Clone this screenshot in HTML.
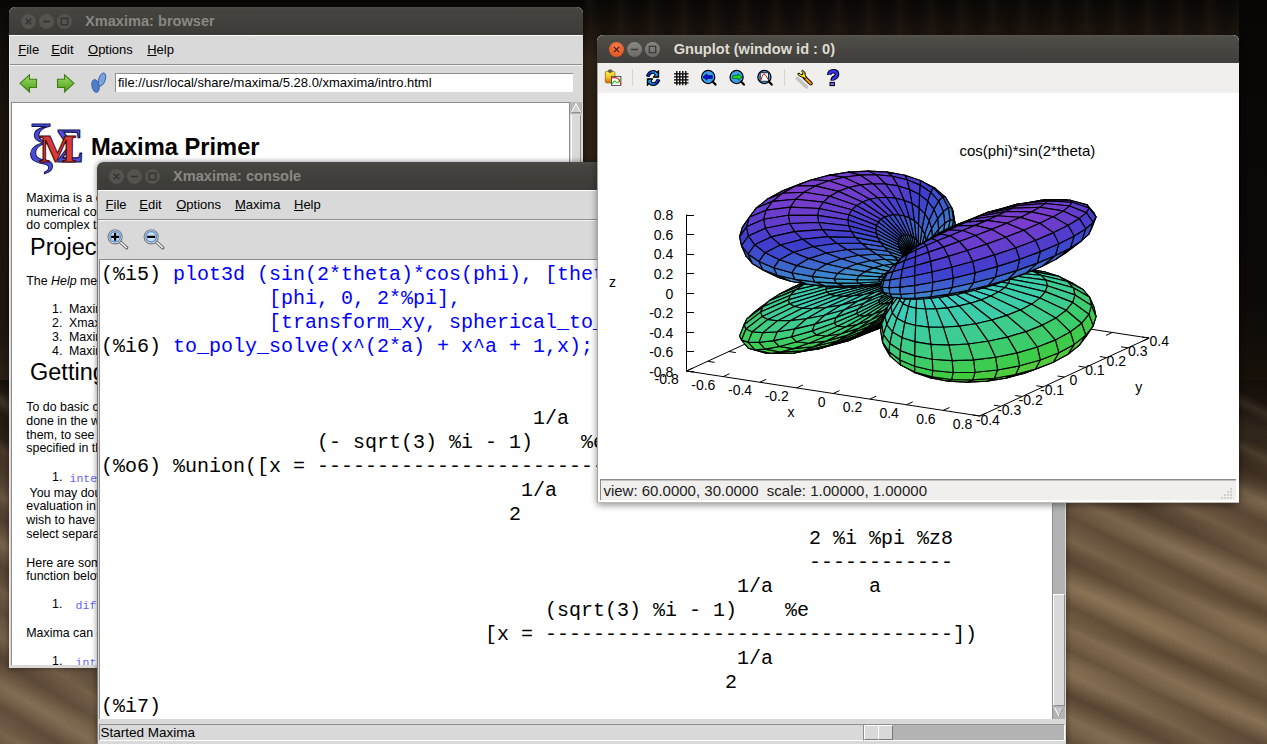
<!DOCTYPE html>
<html><head><meta charset="utf-8">
<style>
*{box-sizing:border-box;margin:0;padding:0}
html,body{width:1267px;height:744px;overflow:hidden}
body{position:relative;font-family:"Liberation Sans",sans-serif;background:#1a130d}
.abs{position:absolute}
#bg{position:absolute;left:0;top:0;width:1267px;height:744px;
 background:linear-gradient(to bottom,#090705 0px,#0f0b08 25px,#1b140e 120px,#1d150e 330px,#3c2e22 440px,#5f4c3a 520px,#6b5744 744px)}
#bgr{position:absolute;left:1040px;top:380px;width:227px;height:364px;
 background:
 repeating-linear-gradient(206deg,rgba(30,18,8,0) 0px,rgba(30,18,8,.22) 10px,rgba(30,18,8,0) 22px,rgba(255,225,170,.10) 31px,rgba(255,225,170,0) 40px),
 repeating-linear-gradient(197deg,rgba(30,18,8,0) 0px,rgba(30,18,8,.14) 17px,rgba(30,18,8,0) 35px,rgba(255,225,170,.07) 52px,rgba(255,225,170,0) 69px),
 linear-gradient(to bottom,#120d09 0px,#2a2016 60px,#66523d 125px,#7a6348 250px,#6f5a43 364px)}
#bgl{position:absolute;left:0;top:380px;width:100px;height:364px;
 background:
 repeating-linear-gradient(212deg,rgba(30,18,8,0) 0px,rgba(30,18,8,.2) 10px,rgba(30,18,8,0) 22px,rgba(255,225,170,.09) 31px,rgba(255,225,170,0) 40px),
 repeating-linear-gradient(200deg,rgba(30,18,8,0) 0px,rgba(30,18,8,.12) 17px,rgba(30,18,8,0) 35px,rgba(255,225,170,.06) 52px,rgba(255,225,170,0) 69px),
 linear-gradient(to bottom,#140f0a 0px,#2e2318 60px,#5e4b39 120px,#735e48 364px)}
#bgt{position:absolute;left:583px;top:0;width:684px;height:380px;
 background:repeating-linear-gradient(90deg,rgba(60,40,25,0) 0px,rgba(60,40,25,.18) 7px,rgba(60,40,25,0) 15px,rgba(0,0,0,.15) 23px,rgba(0,0,0,0) 31px),linear-gradient(to bottom,#0a0806 0px,#130e0a 20px,#2c2117 60px,#2a1f15 300px,#1a130c 380px)}
#bgt2{position:absolute;left:1239px;top:0;width:28px;height:420px;
 background:linear-gradient(to bottom,#080605 0px,#0c0907 300px,#171109 380px,#2a2016 420px)}
.win{position:absolute;overflow:hidden}
.tb{position:absolute;left:0;top:0;right:0;height:28px;border-radius:6px 6px 0 0;
 background:linear-gradient(to bottom,#55544f 0px,#4a4944 3px,#3e3d39 100%)}
.tbt{position:absolute;top:6px;font:bold 14.6px "Liberation Sans",sans-serif;color:#8a8782;white-space:nowrap;letter-spacing:0px}
.btn{position:absolute;top:6px;width:15px;height:15px;border-radius:50%;background:#55544f}
.btn svg{position:absolute;left:0;top:0}
.menu{position:absolute;font:13px "Liberation Sans",sans-serif;color:#000;white-space:nowrap}
.menu span{position:absolute;top:0}
.menu u{text-decoration:none;border-bottom:1px solid #000}
.mono{font-family:"Liberation Mono",monospace}
</style></head><body>
<div id="bg"></div><div id="bgt"></div><div id="bgt2"></div><div id="bgr"></div><div id="bgl"></div>
<!-- BROWSER WINDOW -->
<div class="win" id="wb" style="left:9px;top:7px;width:574px;height:661px;border-radius:6px 6px 0 0;background:#d9d9d9;box-shadow:0 0 5px 1px rgba(0,0,0,.35)">
 <div class="tb" style="background:linear-gradient(to bottom,#4b4a46 0px,#45443f 4px,#3c3b37 100%)"></div>
 <div class="btn" style="left:11.5px;top:6.5px;background:#54534e"><svg width="15" height="15"><path d="M4.7 4.7L10.3 10.3M10.3 4.7L4.7 10.3" stroke="#33322e" stroke-width="1.4"/></svg></div>
 <div class="btn" style="left:29.7px;top:6.5px;background:#54534e"><svg width="15" height="15"><path d="M4 7.5H11" stroke="#33322e" stroke-width="1.4"/></svg></div>
 <div class="btn" style="left:47.8px;top:6.5px;background:#54534e"><svg width="15" height="15"><rect x="4.3" y="4.3" width="6.4" height="6.4" fill="none" stroke="#33322e" stroke-width="1.3"/></svg></div>
 <div class="tbt" style="left:76px;top:6px;color:#8b8883">Xmaxima: browser</div>
 <!-- menubar -->
 <div class="abs" style="left:1px;top:28px;width:572px;height:1px;background:#fff"></div>
 <div class="abs" style="left:0px;top:28px;width:1px;height:632px;background:#e8e8e8"></div>
 <div style="position:absolute;left:9.20px;top:35.70px;font-family:'Liberation Sans';font-size:13.00px;line-height:13.00px;color:#000;font-weight:normal;font-style:normal;letter-spacing:0.00px;white-space:pre;"><u>F</u>ile</div><div style="position:absolute;left:42.20px;top:35.70px;font-family:'Liberation Sans';font-size:13.00px;line-height:13.00px;color:#000;font-weight:normal;font-style:normal;letter-spacing:0.00px;white-space:pre;"><u>E</u>dit</div><div style="position:absolute;left:79.00px;top:35.70px;font-family:'Liberation Sans';font-size:13.00px;line-height:13.00px;color:#000;font-weight:normal;font-style:normal;letter-spacing:0.00px;white-space:pre;"><u>O</u>ptions</div><div style="position:absolute;left:138.20px;top:35.70px;font-family:'Liberation Sans';font-size:13.00px;line-height:13.00px;color:#000;font-weight:normal;font-style:normal;letter-spacing:0.00px;white-space:pre;"><u>H</u>elp</div>
 <div class="abs" style="left:1px;top:57px;width:572px;height:1px;background:#8e8e8e"></div>
 <div class="abs" style="left:1px;top:58px;width:572px;height:1px;background:#f4f4f4"></div>
 <!-- toolbar icons -->
 <svg class="abs" style="left:10px;top:67px" width="19" height="19" viewBox="0 0 19 19">
  <defs><linearGradient id="ga" x1="0" y1="0" x2="0" y2="1"><stop offset="0" stop-color="#9de06a"/><stop offset="1" stop-color="#4a9a18"/></linearGradient></defs>
  <path d="M1 9.3L10.5 0.8V5.3H17.5V13.5H10.5V18Z" fill="url(#ga)" stroke="#3f7d12" stroke-width="1.1"/>
 </svg>
 <svg class="abs" style="left:47px;top:67px" width="19" height="19" viewBox="0 0 19 19">
  <path d="M18 9.3L8.5 0.8V5.3H1.5V13.5H8.5V18Z" fill="url(#ga)" stroke="#3f7d12" stroke-width="1.1"/>
 </svg>
 <svg class="abs" style="left:81px;top:64px" width="18" height="24" viewBox="0 0 18 24">
  <ellipse cx="5.5" cy="15" rx="3.6" ry="6.5" transform="rotate(-12 5.5 15)" fill="#4d7fc7" stroke="#2e5a9e" stroke-width=".8"/>
  <ellipse cx="12" cy="8.5" rx="3.3" ry="6.8" transform="rotate(18 12 8.5)" fill="#7aa3dd" stroke="#2e5a9e" stroke-width=".8"/>
 </svg>
 <div class="abs" style="left:106px;top:66px;width:458px;height:19px;background:#fff;border-top:1px solid #8e8e8e;border-left:1px solid #8e8e8e;font:13px 'Liberation Sans',sans-serif;line-height:17px;padding-left:2px;color:#000;white-space:nowrap;overflow:hidden">file://usr/local/share/maxima/5.28.0/xmaxima/intro.html</div>
 <!-- content -->
 <div class="abs" style="left:2px;top:95px;width:558px;height:563px;background:#fff;border-top:1px solid #8e8e8e;border-left:1px solid #8e8e8e;overflow:hidden">
  <svg style="position:absolute;left:18px;top:17px" width="66" height="60" viewBox="0 0 66 60">
<text x="-2" y="44" font-family="Liberation Serif" font-size="58" fill="#4a4ad8" stroke="#10104a" stroke-width=".9">&#958;</text>
<text x="26" y="42" font-family="Liberation Serif" font-size="48" fill="#5050e8" stroke="#10104a" stroke-width="1.1">&#931;</text>
<text x="9" y="42" font-family="Liberation Serif" font-size="40" font-weight="bold" fill="#d83a3a" stroke="#3a0808" stroke-width="1">M</text>
</svg><div style="position:absolute;left:79.00px;top:32.74px;font-family:'Liberation Sans';font-size:23.70px;line-height:23.70px;color:#000;font-weight:bold;font-style:normal;letter-spacing:0.00px;white-space:pre;">Maxima Primer</div><div style="position:absolute;left:14.30px;top:88.50px;font-family:'Liberation Sans';font-size:12.40px;line-height:12.40px;color:#000;font-weight:normal;font-style:normal;letter-spacing:0.00px;white-space:pre;">Maxima is a computer algebra system</div><div style="position:absolute;left:14.30px;top:102.50px;font-family:'Liberation Sans';font-size:12.40px;line-height:12.40px;color:#000;font-weight:normal;font-style:normal;letter-spacing:0.00px;white-space:pre;">numerical computations</div><div style="position:absolute;left:14.30px;top:116.00px;font-family:'Liberation Sans';font-size:12.40px;line-height:12.40px;color:#000;font-weight:normal;font-style:normal;letter-spacing:0.00px;white-space:pre;">do complex tasks</div><div style="position:absolute;left:18.00px;top:132.91px;font-family:'Liberation Sans';font-size:23.50px;line-height:23.50px;color:#000;font-weight:normal;font-style:normal;letter-spacing:0.00px;white-space:pre;">Project</div><div style="position:absolute;left:14.30px;top:171.50px;font-family:'Liberation Sans';font-size:12.40px;line-height:12.40px;color:#000;font-weight:normal;font-style:normal;letter-spacing:0.00px;white-space:pre;">The <i>Help</i> menu</div><div style="position:absolute;left:40.00px;top:200.20px;font-family:'Liberation Sans';font-size:12.40px;line-height:12.40px;color:#000;font-weight:normal;font-style:normal;letter-spacing:0.00px;white-space:pre;">1.</div><div style="position:absolute;left:57.00px;top:200.20px;font-family:'Liberation Sans';font-size:12.40px;line-height:12.40px;color:#000;font-weight:normal;font-style:normal;letter-spacing:0.00px;white-space:pre;">Maxima</div><div style="position:absolute;left:40.00px;top:214.20px;font-family:'Liberation Sans';font-size:12.40px;line-height:12.40px;color:#000;font-weight:normal;font-style:normal;letter-spacing:0.00px;white-space:pre;">2.</div><div style="position:absolute;left:57.00px;top:214.20px;font-family:'Liberation Sans';font-size:12.40px;line-height:12.40px;color:#000;font-weight:normal;font-style:normal;letter-spacing:0.00px;white-space:pre;">Xmaxima</div><div style="position:absolute;left:40.00px;top:228.30px;font-family:'Liberation Sans';font-size:12.40px;line-height:12.40px;color:#000;font-weight:normal;font-style:normal;letter-spacing:0.00px;white-space:pre;">3.</div><div style="position:absolute;left:57.00px;top:228.30px;font-family:'Liberation Sans';font-size:12.40px;line-height:12.40px;color:#000;font-weight:normal;font-style:normal;letter-spacing:0.00px;white-space:pre;">Maxima</div><div style="position:absolute;left:40.00px;top:242.00px;font-family:'Liberation Sans';font-size:12.40px;line-height:12.40px;color:#000;font-weight:normal;font-style:normal;letter-spacing:0.00px;white-space:pre;">4.</div><div style="position:absolute;left:57.00px;top:242.00px;font-family:'Liberation Sans';font-size:12.40px;line-height:12.40px;color:#000;font-weight:normal;font-style:normal;letter-spacing:0.00px;white-space:pre;">Maxima</div><div style="position:absolute;left:18.00px;top:257.71px;font-family:'Liberation Sans';font-size:23.50px;line-height:23.50px;color:#000;font-weight:normal;font-style:normal;letter-spacing:0.00px;white-space:pre;">Getting</div><div style="position:absolute;left:14.30px;top:298.20px;font-family:'Liberation Sans';font-size:12.40px;line-height:12.40px;color:#000;font-weight:normal;font-style:normal;letter-spacing:0.00px;white-space:pre;">To do basic calculations</div><div style="position:absolute;left:14.30px;top:311.90px;font-family:'Liberation Sans';font-size:12.40px;line-height:12.40px;color:#000;font-weight:normal;font-style:normal;letter-spacing:0.00px;white-space:pre;">done in the window</div><div style="position:absolute;left:14.30px;top:325.70px;font-family:'Liberation Sans';font-size:12.40px;line-height:12.40px;color:#000;font-weight:normal;font-style:normal;letter-spacing:0.00px;white-space:pre;">them, to see the</div><div style="position:absolute;left:14.30px;top:339.40px;font-family:'Liberation Sans';font-size:12.40px;line-height:12.40px;color:#000;font-weight:normal;font-style:normal;letter-spacing:0.00px;white-space:pre;">specified in the</div><div style="position:absolute;left:40.00px;top:368.00px;font-family:'Liberation Sans';font-size:12.40px;line-height:12.40px;color:#000;font-weight:normal;font-style:normal;letter-spacing:0.00px;white-space:pre;">1.</div><div style="position:absolute;left:57.50px;top:369.69px;font-family:'Liberation Mono';font-size:11.50px;line-height:11.50px;color:#6464f4;font-weight:normal;font-style:normal;letter-spacing:0.00px;white-space:pre;">integrate</div><div style="position:absolute;left:14.30px;top:383.50px;font-family:'Liberation Sans';font-size:12.40px;line-height:12.40px;color:#000;font-weight:normal;font-style:normal;letter-spacing:0.00px;white-space:pre;"> You may double</div><div style="position:absolute;left:14.30px;top:397.20px;font-family:'Liberation Sans';font-size:12.40px;line-height:12.40px;color:#000;font-weight:normal;font-style:normal;letter-spacing:0.00px;white-space:pre;">evaluation in</div><div style="position:absolute;left:14.30px;top:410.90px;font-family:'Liberation Sans';font-size:12.40px;line-height:12.40px;color:#000;font-weight:normal;font-style:normal;letter-spacing:0.00px;white-space:pre;">wish to have</div><div style="position:absolute;left:14.30px;top:424.70px;font-family:'Liberation Sans';font-size:12.40px;line-height:12.40px;color:#000;font-weight:normal;font-style:normal;letter-spacing:0.00px;white-space:pre;">select separate</div><div style="position:absolute;left:14.30px;top:453.50px;font-family:'Liberation Sans';font-size:12.40px;line-height:12.40px;color:#000;font-weight:normal;font-style:normal;letter-spacing:0.00px;white-space:pre;">Here are some</div><div style="position:absolute;left:14.30px;top:467.30px;font-family:'Liberation Sans';font-size:12.40px;line-height:12.40px;color:#000;font-weight:normal;font-style:normal;letter-spacing:0.00px;white-space:pre;">function below</div><div style="position:absolute;left:40.00px;top:495.10px;font-family:'Liberation Sans';font-size:12.40px;line-height:12.40px;color:#000;font-weight:normal;font-style:normal;letter-spacing:0.00px;white-space:pre;">1.</div><div style="position:absolute;left:63.60px;top:496.79px;font-family:'Liberation Mono';font-size:11.50px;line-height:11.50px;color:#6464f4;font-weight:normal;font-style:normal;letter-spacing:0.00px;white-space:pre;">diff</div><div style="position:absolute;left:14.30px;top:524.10px;font-family:'Liberation Sans';font-size:12.40px;line-height:12.40px;color:#000;font-weight:normal;font-style:normal;letter-spacing:0.00px;white-space:pre;">Maxima can do</div><div style="position:absolute;left:40.00px;top:552.10px;font-family:'Liberation Sans';font-size:12.40px;line-height:12.40px;color:#000;font-weight:normal;font-style:normal;letter-spacing:0.00px;white-space:pre;">1.</div><div style="position:absolute;left:63.60px;top:553.79px;font-family:'Liberation Mono';font-size:11.50px;line-height:11.50px;color:#6464f4;font-weight:normal;font-style:normal;letter-spacing:0.00px;white-space:pre;">int</div>
 </div>
 <!-- scrollbar -->
 <div class="abs" style="left:560px;top:95px;width:13px;height:563px;background:#d9d9d9;border-left:1px solid #8e8e8e">
  <svg class="abs" style="left:0;top:0" width="12" height="13"><rect x="0" y="0" width="12" height="12" fill="#b8b8b8"/><path d="M1.5 10.5L6 1.5L10.5 10.5" fill="#d0d0d0" stroke="#fff" stroke-width="1"/><path d="M1.5 10.5H10.5" stroke="#8e8e8e"/></svg>
  <div class="abs" style="left:1px;top:13px;width:10px;height:560px;border-left:1px solid #fff;border-right:1px solid #8e8e8e;background:#d9d9d9"></div>
 </div>
</div>
<div class="win" id="wc" style="left:97px;top:162px;width:969px;height:600px;border-radius:6px 6px 0 0;background:#d9d9d9;box-shadow:0 0 5px 1px rgba(0,0,0,.35)"><div class="tb" style="background:linear-gradient(to bottom,#4b4a46 0px,#45443f 4px,#3c3b37 100%)"></div><div class="btn" style="left:12.0px;top:7px;background:#54534e"><svg width="15" height="15"><path d="M4.7 4.7L10.3 10.3M10.3 4.7L4.7 10.3" stroke="#33322e" stroke-width="1.4"/></svg></div><div class="btn" style="left:29.9px;top:7px;background:#54534e"><svg width="15" height="15"><path d="M4 7.5H11" stroke="#33322e" stroke-width="1.4"/></svg></div><div class="btn" style="left:48.0px;top:7px;background:#54534e"><svg width="15" height="15"><rect x="4.3" y="4.3" width="6.4" height="6.4" fill="none" stroke="#33322e" stroke-width="1.3"/></svg></div><div class="tbt" style="left:76px;top:6px;color:#8b8883">Xmaxima: console</div><div class="abs" style="left:1px;top:28px;width:968px;height:1px;background:#fff"></div><div class="abs" style="left:0px;top:28px;width:1px;height:600px;background:#7a7a7a"></div><div style="position:absolute;left:8.60px;top:36.20px;font-family:'Liberation Sans';font-size:13.00px;line-height:13.00px;color:#000;font-weight:normal;font-style:normal;letter-spacing:0.00px;white-space:pre;"><u>F</u>ile</div><div style="position:absolute;left:42.30px;top:36.20px;font-family:'Liberation Sans';font-size:13.00px;line-height:13.00px;color:#000;font-weight:normal;font-style:normal;letter-spacing:0.00px;white-space:pre;"><u>E</u>dit</div><div style="position:absolute;left:79.20px;top:36.20px;font-family:'Liberation Sans';font-size:13.00px;line-height:13.00px;color:#000;font-weight:normal;font-style:normal;letter-spacing:0.00px;white-space:pre;"><u>O</u>ptions</div><div style="position:absolute;left:137.90px;top:36.20px;font-family:'Liberation Sans';font-size:13.00px;line-height:13.00px;color:#000;font-weight:normal;font-style:normal;letter-spacing:0.00px;white-space:pre;"><u>M</u>axima</div><div style="position:absolute;left:197.00px;top:36.20px;font-family:'Liberation Sans';font-size:13.00px;line-height:13.00px;color:#000;font-weight:normal;font-style:normal;letter-spacing:0.00px;white-space:pre;"><u>H</u>elp</div><div class="abs" style="left:1px;top:57px;width:968px;height:1px;background:#8e8e8e"></div><div class="abs" style="left:1px;top:58px;width:968px;height:1px;background:#f4f4f4"></div><svg class="abs" style="left:0;top:0" width="200" height="100" viewBox="97 162 200 100"><path d="M120.3 242.0L126.7 247.8" stroke="#6a6a6a" stroke-width="3.4" stroke-linecap="round"/><path d="M120.7 242.4L126.4 247.5" stroke="#f4f4f4" stroke-width="1.5" stroke-linecap="round"/><circle cx="115.1" cy="236.8" r="7.1" fill="#ececec" stroke="#7a7a7a" stroke-width="1.1"/><circle cx="115.1" cy="236.8" r="5.3" fill="#c8dcf4" stroke="#6094dc" stroke-width="1.5"/><path d="M111.1 236.8H119.1M115.1 232.8V240.8" stroke="#000" stroke-width="2.2"/><path d="M156.4 242.0L162.8 247.8" stroke="#6a6a6a" stroke-width="3.4" stroke-linecap="round"/><path d="M156.8 242.4L162.5 247.5" stroke="#f4f4f4" stroke-width="1.5" stroke-linecap="round"/><circle cx="151.2" cy="236.8" r="7.1" fill="#ececec" stroke="#7a7a7a" stroke-width="1.1"/><circle cx="151.2" cy="236.8" r="5.3" fill="#c8dcf4" stroke="#6094dc" stroke-width="1.5"/><path d="M147.2 236.8H155.2" stroke="#000" stroke-width="2.2"/></svg><div class="abs" style="left:2px;top:97px;width:953px;height:460px;background:#fff;border-top:1px solid #8e8e8e;border-left:1px solid #8e8e8e;overflow:hidden"><div style="position:absolute;left:1.00px;top:5.27px;font-family:'Liberation Mono';font-size:20.00px;line-height:20.00px;color:#000;font-weight:normal;font-style:normal;letter-spacing:0.00px;white-space:pre;">(%i5) </div><div style="position:absolute;left:73.00px;top:5.27px;font-family:'Liberation Mono';font-size:20.00px;line-height:20.00px;color:#0000ff;font-weight:normal;font-style:normal;letter-spacing:0.00px;white-space:pre;">plot3d (sin(2*theta)*cos(phi), [theta, 0, %pi],</div><div style="position:absolute;left:169.00px;top:29.27px;font-family:'Liberation Mono';font-size:20.00px;line-height:20.00px;color:#0000ff;font-weight:normal;font-style:normal;letter-spacing:0.00px;white-space:pre;">[phi, 0, 2*%pi],</div><div style="position:absolute;left:169.00px;top:53.27px;font-family:'Liberation Mono';font-size:20.00px;line-height:20.00px;color:#0000ff;font-weight:normal;font-style:normal;letter-spacing:0.00px;white-space:pre;">[transform_xy, spherical_to_xyz]);</div><div style="position:absolute;left:1.00px;top:77.27px;font-family:'Liberation Mono';font-size:20.00px;line-height:20.00px;color:#000;font-weight:normal;font-style:normal;letter-spacing:0.00px;white-space:pre;">(%i6) </div><div style="position:absolute;left:73.00px;top:77.27px;font-family:'Liberation Mono';font-size:20.00px;line-height:20.00px;color:#0000ff;font-weight:normal;font-style:normal;letter-spacing:0.00px;white-space:pre;">to_poly_solve(x^(2*a) + x^a + 1,x);</div><div style="position:absolute;left:433.00px;top:149.27px;font-family:'Liberation Mono';font-size:20.00px;line-height:20.00px;color:#000;font-weight:normal;font-style:normal;letter-spacing:0.00px;white-space:pre;">1/a</div><div style="position:absolute;left:217.00px;top:173.27px;font-family:'Liberation Mono';font-size:20.00px;line-height:20.00px;color:#000;font-weight:normal;font-style:normal;letter-spacing:0.00px;white-space:pre;">(- sqrt(3) %i - 1)    %e</div><div style="position:absolute;left:1.00px;top:197.27px;font-family:'Liberation Mono';font-size:20.00px;line-height:20.00px;color:#000;font-weight:normal;font-style:normal;letter-spacing:0.00px;white-space:pre;">(%o6) %union([x = ----------------------------------------,</div><div style="position:absolute;left:421.00px;top:221.27px;font-family:'Liberation Mono';font-size:20.00px;line-height:20.00px;color:#000;font-weight:normal;font-style:normal;letter-spacing:0.00px;white-space:pre;">1/a</div><div style="position:absolute;left:409.00px;top:245.27px;font-family:'Liberation Mono';font-size:20.00px;line-height:20.00px;color:#000;font-weight:normal;font-style:normal;letter-spacing:0.00px;white-space:pre;">2</div><div style="position:absolute;left:709.00px;top:269.27px;font-family:'Liberation Mono';font-size:20.00px;line-height:20.00px;color:#000;font-weight:normal;font-style:normal;letter-spacing:0.00px;white-space:pre;">2 %i %pi %z8</div><div style="position:absolute;left:709.00px;top:293.27px;font-family:'Liberation Mono';font-size:20.00px;line-height:20.00px;color:#000;font-weight:normal;font-style:normal;letter-spacing:0.00px;white-space:pre;">------------</div><div style="position:absolute;left:637.00px;top:317.27px;font-family:'Liberation Mono';font-size:20.00px;line-height:20.00px;color:#000;font-weight:normal;font-style:normal;letter-spacing:0.00px;white-space:pre;">1/a</div><div style="position:absolute;left:769.00px;top:317.27px;font-family:'Liberation Mono';font-size:20.00px;line-height:20.00px;color:#000;font-weight:normal;font-style:normal;letter-spacing:0.00px;white-space:pre;">a</div><div style="position:absolute;left:445.00px;top:341.27px;font-family:'Liberation Mono';font-size:20.00px;line-height:20.00px;color:#000;font-weight:normal;font-style:normal;letter-spacing:0.00px;white-space:pre;">(sqrt(3) %i - 1)    %e</div><div style="position:absolute;left:385.00px;top:365.27px;font-family:'Liberation Mono';font-size:20.00px;line-height:20.00px;color:#000;font-weight:normal;font-style:normal;letter-spacing:0.00px;white-space:pre;">[x = ----------------------------------])</div><div style="position:absolute;left:637.00px;top:389.27px;font-family:'Liberation Mono';font-size:20.00px;line-height:20.00px;color:#000;font-weight:normal;font-style:normal;letter-spacing:0.00px;white-space:pre;">1/a</div><div style="position:absolute;left:625.00px;top:413.27px;font-family:'Liberation Mono';font-size:20.00px;line-height:20.00px;color:#000;font-weight:normal;font-style:normal;letter-spacing:0.00px;white-space:pre;">2</div><div style="position:absolute;left:1.00px;top:437.27px;font-family:'Liberation Mono';font-size:20.00px;line-height:20.00px;color:#000;font-weight:normal;font-style:normal;letter-spacing:0.00px;white-space:pre;">(%i7)</div></div><div class="abs" style="left:955px;top:97px;width:14px;height:460px;background:#d9d9d9"><div class="abs" style="left:0;top:0;width:13px;height:460px;background:#b3b3b3;border-left:1px solid #8e8e8e"></div><div class="abs" style="left:1px;top:335px;width:12px;height:112px;background:#d9d9d9;border-top:1px solid #fff;border-left:1px solid #fff;border-right:1px solid #8e8e8e;border-bottom:1px solid #8e8e8e"></div><svg class="abs" style="left:1px;top:447px" width="12" height="12"><rect width="12" height="12" fill="#b3b3b3"/><path d="M1.5 1.5L6 10.5L10.5 1.5" fill="#c8c8c8" stroke="#fff" stroke-width="1"/><path d="M6 10.5L10.5 1.5" stroke="#8e8e8e" stroke-width="1"/></svg></div><div class="abs" style="left:2px;top:562px;width:765px;height:17px;background:#d9d9d9;border-top:1px solid #8e8e8e;border-left:1px solid #8e8e8e;border-right:1px solid #fff;border-bottom:1px solid #fff"></div><div style="position:absolute;left:3.50px;top:563.57px;font-family:'Liberation Sans';font-size:13.50px;line-height:13.50px;color:#000;font-weight:normal;font-style:normal;letter-spacing:0.00px;white-space:pre;">Started Maxima</div><div class="abs" style="left:766px;top:562px;width:202px;height:17px;background:#b3b3b3;border-top:1px solid #8e8e8e;border-left:1px solid #8e8e8e;border-right:1px solid #fff;border-bottom:1px solid #fff"></div><div class="abs" style="left:767px;top:563px;width:15px;height:15px;background:#d9d9d9;border-top:1px solid #fff;border-left:1px solid #fff;border-right:1px solid #7a7a7a;border-bottom:1px solid #7a7a7a"></div><div class="abs" style="left:781px;top:563px;width:15px;height:15px;background:#d9d9d9;border-top:1px solid #fff;border-left:1px solid #fff;border-right:1px solid #7a7a7a;border-bottom:1px solid #7a7a7a"></div></div><div class="win" id="wg" style="left:597px;top:35px;width:642px;height:468px;border-radius:6px 6px 0 0;background:#fff;box-shadow:0 2px 7px rgba(0,0,0,.45)"><div class="tb" style="height:28px;background:linear-gradient(to bottom,#56554f 0px,#4d4c47 3px,#3f3e3a 100%)"></div><div class="btn" style="left:12px;top:6.8px;background:radial-gradient(circle at 50% 30%,#f47a4a,#df4a17)"><svg width="15" height="15"><path d="M4.9 4.9L10.1 10.1M10.1 4.9L4.9 10.1" stroke="#3a1a0a" stroke-width="1.15"/></svg></div><div class="btn" style="left:30.1px;top:6.8px;background:linear-gradient(#8a8984,#6a6964)"><svg width="15" height="15"><path d="M4 7.5H11" stroke="#3c3b37" stroke-width="1.4"/></svg></div><div class="btn" style="left:48.1px;top:6.8px;background:linear-gradient(#8a8984,#6a6964)"><svg width="15" height="15"><rect x="4.3" y="4.3" width="6.4" height="6.4" fill="none" stroke="#3c3b37" stroke-width="1.3"/></svg></div><div class="tbt" style="left:76.7px;top:6px;color:#dfdbd2;font-size:14.6px">Gnuplot (window id : 0)</div><div class="abs" style="left:0;top:28px;width:642px;height:30px;background:#f0efed"></div><svg class="abs" style="left:0;top:0" width="260" height="60" viewBox="597 35 260 60">
 <!-- clipboard -->
 <defs><linearGradient id="cbg" x1="0" y1="0" x2="0" y2="1"><stop offset="0" stop-color="#fff24a"/><stop offset=".55" stop-color="#f2c018"/><stop offset="1" stop-color="#d86a08"/></linearGradient></defs>
 <rect x="605.3" y="71.3" width="9.6" height="11.6" rx="1.6" fill="url(#cbg)" stroke="#8a5a10" stroke-width=".7"/>
 <rect x="608.4" y="69.8" width="3.6" height="2.6" rx="1" fill="#666" stroke="#333" stroke-width=".5"/>
 <rect x="611.5" y="76.4" width="9.4" height="9" fill="#fff" stroke="#444" stroke-width=".9"/>
 <path d="M612 84.2Q614.2 79.2 616.2 82Q618.2 84.6 620.6 78.2" stroke="#10d010" stroke-width="1.1" fill="none"/>
 <path d="M611.8 78Q616.5 76.8 618.5 79Q620 81 620.8 84.5" stroke="#e01010" stroke-width="1.1" fill="none"/>
 <path d="M632.6 69V86" stroke="#d3d1cc"/>
 <!-- refresh -->
 <defs><linearGradient id="rb" x1="0" y1="0" x2="1" y2="0"><stop offset="0" stop-color="#0018c0"/><stop offset="1" stop-color="#18a8ff"/></linearGradient>
 <linearGradient id="rb2" x1="1" y1="0" x2="0" y2="0"><stop offset="0" stop-color="#0018c0"/><stop offset="1" stop-color="#18a8ff"/></linearGradient></defs>
 <path d="M647.6 76.6Q649.5 71.6 653.3 71.8Q655.6 72 656.8 74.6" fill="none" stroke="#000" stroke-width="3.8"/>
 <path d="M658.6 70.7V77.2H653.4Z" fill="#000" stroke="#000" stroke-width="1.2" stroke-linejoin="round"/>
 <path d="M647.6 76.6Q649.5 71.6 653.3 71.8Q655.6 72 656.8 74.6" fill="none" stroke="url(#rb)" stroke-width="1.8"/>
 <path d="M657.6 72.6V76.2H654.6Z" fill="#18a8ff"/>
 <path d="M658.6 79.4Q656.7 84.4 652.9 84.2Q650.6 84 649.4 81.4" fill="none" stroke="#000" stroke-width="3.8"/>
 <path d="M647.4 85.3V78.8H652.6Z" fill="#000" stroke="#000" stroke-width="1.2" stroke-linejoin="round"/>
 <path d="M658.6 79.4Q656.7 84.4 652.9 84.2Q650.6 84 649.4 81.4" fill="none" stroke="url(#rb2)" stroke-width="1.8"/>
 <path d="M648.4 83.4V79.8H651.4Z" fill="#18a8ff"/>
 <!-- grid -->
 <path d="M676.8 71V85.2M679.8 71V85.2M682.8 71V85.2M685.8 71V85.2M674 73.8H688.5M674 76.8H688.5M674 79.8H688.5M674 82.8H688.5" stroke="#000" stroke-width="1.3"/>
 <!-- zoom prev -->
 <circle cx="708.2" cy="77" r="6.6" fill="#3aa0ee" stroke="#000" stroke-width="1.2"/>
 <path d="M712.6 81.6L715.5 84.6" stroke="#000" stroke-width="2.2" stroke-linecap="round"/>
 <path d="M703 77L707 73.8V75.6H712.3V78.4H707V80.2Z" fill="#0010e0" stroke="#000030" stroke-width=".6"/>
 <!-- zoom next -->
 <circle cx="736.6" cy="77" r="6.6" fill="#3aa0ee" stroke="#000" stroke-width="1.2"/>
 <path d="M741 81.6L743.9 84.6" stroke="#000" stroke-width="2.2" stroke-linecap="round"/>
 <path d="M742 77L738 73.8V75.6H732.7V78.4H738V80.2Z" fill="#20e020" stroke="#003000" stroke-width=".6"/>
 <!-- zoom auto -->
 <circle cx="764.4" cy="77" r="6.6" fill="#3aa0ee" stroke="#000" stroke-width="1.2"/>
 <path d="M768.8 81.6L771.7 84.6" stroke="#000" stroke-width="2.2" stroke-linecap="round"/>
 <rect x="760.2" y="72.8" width="8.4" height="8.4" fill="#fff" stroke="#000" stroke-width=".8"/>
 <path d="M761 80Q763 72 765 74.5T768 79.5" stroke="#e11" stroke-width="1" fill="none"/>
 <path d="M784.6 69V86" stroke="#d3d1cc"/>
 <!-- wrench -->
 <path d="M799 76.5L808 85" stroke="#000" stroke-width="3.5" stroke-linecap="round" opacity=".18" transform="translate(-1.5 2)"/>
 <path d="M804.5 77.5L810.8 83.4" stroke="#000" stroke-width="3.9" stroke-linecap="round"/>
 <path d="M804.5 77.5L810.8 83.4" stroke="#ff9a00" stroke-width="2.1" stroke-linecap="round"/>
 <path d="M797.6 73.8Q799 76.8 802.6 77.2L805.2 78.6L806.3 77.2L805.2 75Q806 71.8 802.4 70.2L801.8 71.4Q803.6 72.6 802.8 74.4Q800.6 75.2 799 73Z" fill="#ffe800" stroke="#000" stroke-width="1" stroke-linejoin="round"/>
 <!-- help -->
 <path d="M829.4 74.8Q829.2 71.2 833.2 71.2Q837 71.2 837 74.2Q837 76.2 834.6 77.6Q832.6 78.8 832.8 80.6" fill="none" stroke="#000" stroke-width="4.6"/>
 <path d="M829.4 74.8Q829.2 71.2 833.2 71.2Q837 71.2 837 74.2Q837 76.2 834.6 77.6Q832.6 78.8 832.8 80.6" fill="none" stroke="#3434ff" stroke-width="2.4"/>
 <rect x="830" y="82.4" width="4.4" height="3.2" fill="#6a6aff" stroke="#000" stroke-width="1"/>
</svg>
<svg class="abs" style="left:0;top:0" width="642" height="468" viewBox="597 35 642 468"><path d="M686.5 371.0L979.8 416.0M979.8 416.0L1149.1 338.1M1149.1 338.1L855.8 293.1M855.8 293.1L686.5 371.0M686.5 371.0L692.9 368.1M855.8 293.1L849.5 296.0M979.8 416.0L972.8 415.0M686.5 371.0L693.5 372.1M723.2 376.6L729.5 373.7M892.5 298.7L886.1 301.6M1000.9 406.3L994.0 405.2M707.7 361.3L714.6 362.3M759.8 382.3L766.2 379.3M929.1 304.3L922.8 307.2M1022.1 396.5L1015.2 395.5M728.9 351.5L735.8 352.6M796.5 387.9L802.9 385.0M965.8 309.9L959.4 312.9M1043.3 386.8L1036.3 385.7M750.0 341.8L756.9 342.8M833.1 393.5L839.5 390.6M1002.4 315.6L996.1 318.5M1064.4 377.0L1057.5 376.0M771.2 332.0L778.1 333.1M869.8 399.1L876.2 396.2M1039.1 321.2L1032.7 324.1M1085.6 367.3L1078.7 366.2M792.3 322.3L799.3 323.4M906.5 404.8L912.8 401.8M1075.8 326.8L1069.4 329.7M1106.7 357.6L1099.8 356.5M813.5 312.6L820.4 313.6M943.1 410.4L949.5 407.5M1112.4 332.4L1106.1 335.4M1127.9 347.8L1121.0 346.8M834.7 302.8L841.6 303.9M979.8 416.0L986.1 413.1M1149.1 338.1L1142.7 341.0M1149.1 338.1L1142.1 337.0M855.8 293.1L862.8 294.1" stroke="#000" stroke-width="1" fill="none"/><g stroke="#000" stroke-width="1.15" stroke-linejoin="round"><path fill="#3dcc43" d="M902.9,270.9 903.5,281.2 883.9,286.0 882.5,275.1z"/>
<path fill="#40cc3d" d="M882.5,275.1 883.9,286.0 862.9,291.7 860.6,280.4z"/>
<path fill="#4ccc3d" d="M903.5,281.2 904.9,291.8 887.3,296.8 883.9,286.0z"/>
<path fill="#3dcc4d" d="M920.9,267.8 920.8,277.5 903.5,281.2 902.9,270.9z"/>
<path fill="#56cc3d" d="M883.9,286.0 887.3,296.8 868.3,302.7 862.9,291.7z"/>
<path fill="#40cc3d" d="M920.8,277.5 920.5,287.5 904.9,291.8 903.5,281.2z"/>
<path fill="#3dcc5d" d="M903.3,262.2 902.9,270.9 882.5,275.1 883.4,265.7z"/>
<path fill="#47cc3d" d="M860.6,280.4 862.9,291.7 841.2,298.3 838.1,286.8z"/>
<path fill="#3dcc65" d="M920.8,260.0 920.9,267.8 902.9,270.9 903.3,262.2z"/>
<path fill="#5ecc3d" d="M862.9,291.7 868.3,302.7 848.9,309.1 841.2,298.3z"/>
<path fill="#3dcc58" d="M935.6,266.1 934.9,274.9 920.8,277.5 920.9,267.8z"/>
<path fill="#3dcc56" d="M883.4,265.7 882.5,275.1 860.6,280.4 862.1,270.4z"/>
<path fill="#3dcc47" d="M934.9,274.9 933.2,284.2 920.5,287.5 920.8,277.5z"/>
<path fill="#58cc3d" d="M904.9,291.8 907.0,301.1 892.2,306.1 887.3,296.8z"/>
<path fill="#62cc3d" d="M887.3,296.8 892.2,306.1 876.3,311.7 868.3,302.7z"/>
<path fill="#3dcc6e" d="M935.2,259.0 935.6,266.1 920.9,267.8 920.8,260.0z"/>
<path fill="#4bcc3d" d="M920.5,287.5 920.0,296.5 907.0,301.1 904.9,291.8z"/>
<path fill="#3dcc50" d="M862.1,270.4 860.6,280.4 838.1,286.8 840.1,276.2z"/>
<path fill="#6bcc3d" d="M868.3,302.7 876.3,311.7 859.9,317.7 848.9,309.1z"/>
<path fill="#64cc3d" d="M841.2,298.3 848.9,309.1 829.8,315.9 820.0,305.5z"/>
<path fill="#4dcc3d" d="M838.1,286.8 841.2,298.3 820.0,305.5 816.0,293.9z"/>
<path fill="#3dcc65" d="M946.5,265.5 945.4,273.3 934.9,274.9 935.6,266.1z"/>
<path fill="#3dcc7a" d="M904.7,256.5 903.3,262.2 883.4,265.7 886.7,259.1z"/>
<path fill="#3dcc3d" d="M933.2,284.2 930.8,292.6 920.0,296.5 920.5,287.5z"/>
<path fill="#3dcc56" d="M945.4,273.3 942.6,281.6 933.2,284.2 934.9,274.9z"/>
<path fill="#3dcc80" d="M920.5,255.0 920.8,260.0 903.3,262.2 904.7,256.5z"/>
<path fill="#3dcc79" d="M945.8,259.4 946.5,265.5 935.6,266.1 935.2,259.0z"/>
<path fill="#3dcc74" d="M886.7,259.1 883.4,265.7 862.1,270.4 867.3,263.0z"/>
<path fill="#71cc3d" d="M848.9,309.1 859.9,317.7 843.8,323.8 829.8,315.9z"/>
<path fill="#3dcc4c" d="M840.1,276.2 838.1,286.8 816.0,293.9 818.6,282.8z"/>
<path fill="#3dcc86" d="M933.5,254.9 935.2,259.0 920.8,260.0 920.5,255.0z"/>
<path fill="#63cc3d" d="M892.2,306.1 898.0,312.5 885.6,317.5 876.3,311.7z"/>
<path fill="#59cc3d" d="M907.0,301.1 909.4,307.7 898.0,312.5 892.2,306.1z"/>
<path fill="#68cc3d" d="M820.0,305.5 829.8,315.9 811.8,323.0 800.1,313.0z"/>
<path fill="#3dcc70" d="M867.3,263.0 862.1,270.4 840.1,276.2 847.5,267.9z"/>
<path fill="#50cc3d" d="M816.0,293.9 820.0,305.5 800.1,313.0 795.3,301.6z"/>
<path fill="#3dcc4d" d="M942.6,281.6 938.7,289.3 930.8,292.6 933.2,284.2z"/>
<path fill="#6ccc3d" d="M876.3,311.7 885.6,317.5 873.0,322.7 859.9,317.7z"/>
<path fill="#4ccc3d" d="M920.0,296.5 919.5,303.2 909.4,307.7 907.0,301.1z"/>
<path fill="#3dcc73" d="M953.1,266.0 951.7,272.6 945.4,273.3 946.5,265.5z"/>
<path fill="#76cc3d" d="M829.8,315.9 843.8,323.8 828.8,329.9 811.8,323.0z"/>
<path fill="#3dcc66" d="M951.7,272.6 948.3,279.8 942.6,281.6 945.4,273.3z"/>
<path fill="#3dcc8e" d="M943.1,255.9 945.8,259.4 935.2,259.0 933.5,254.9z"/>
<path fill="#73cc3d" d="M859.9,317.7 873.0,322.7 860.5,327.8 843.8,323.8z"/>
<path fill="#3dcc84" d="M952.2,260.8 953.1,266.0 946.5,265.5 945.8,259.4z"/>
<path fill="#3ecc3d" d="M930.8,292.6 927.8,299.1 919.5,303.2 920.0,296.5z"/>
<path fill="#3dcc49" d="M818.6,282.8 816.0,293.9 795.3,301.6 798.3,290.1z"/>
<path fill="#3dcc6d" d="M847.5,267.9 840.1,276.2 818.6,282.8 828.0,273.7z"/>
<path fill="#3dcc96" d="M907.0,254.7 904.7,256.5 886.7,259.1 892.2,256.6z"/>
<path fill="#6acc3d" d="M800.1,313.0 811.8,323.0 795.8,329.9 782.3,320.6z"/>
<path fill="#3dcc9a" d="M920.0,254.0 920.5,255.0 904.7,256.5 907.0,254.7z"/>
<path fill="#3dcc5e" d="M948.3,279.8 943.4,286.6 938.7,289.3 942.6,281.6z"/>
<path fill="#77cc3d" d="M843.8,323.8 860.5,327.8 848.8,332.8 828.8,329.9z"/>
<path fill="#3dcc92" d="M892.2,256.6 886.7,259.1 867.3,263.0 876.3,259.4z"/>
<path fill="#52cc3d" d="M795.3,301.6 800.1,313.0 782.3,320.6 776.8,309.4z"/>
<path fill="#78cc3d" d="M811.8,323.0 828.8,329.9 815.3,335.8 795.8,329.9z"/>
<path fill="#3dcc4c" d="M938.7,289.3 934.0,295.3 927.8,299.1 930.8,292.6z"/>
<path fill="#3dcc9e" d="M930.8,254.3 933.5,254.9 920.5,255.0 920.0,254.0z"/>
<path fill="#3dcc96" d="M948.9,257.9 952.2,260.8 945.8,259.4 943.1,255.9z"/>
<path fill="#59cc3d" d="M898.0,312.5 904.0,314.8 895.3,319.0 885.6,317.5z"/>
<path fill="#3dcc82" d="M955.0,267.3 953.5,272.8 951.7,272.6 953.1,266.0z"/>
<path fill="#4fcc3d" d="M909.4,307.7 912.0,310.5 904.0,314.8 898.0,312.5z"/>
<path fill="#61cc3d" d="M885.6,317.5 895.3,319.0 886.5,323.2 873.0,322.7z"/>
<path fill="#3dcc90" d="M876.3,259.4 867.3,263.0 847.5,267.9 859.9,263.2z"/>
<path fill="#3dcc6b" d="M828.0,273.7 818.6,282.8 798.3,290.1 809.7,280.1z"/>
<path fill="#3dcc77" d="M953.5,272.8 950.0,278.7 948.3,279.8 951.7,272.6z"/>
<path fill="#43cc3d" d="M919.5,303.2 919.0,306.4 912.0,310.5 909.4,307.7z"/>
<path fill="#3dcc90" d="M954.0,263.1 955.0,267.3 953.1,266.0 952.2,260.8z"/>
<path fill="#3dcca3" d="M938.7,255.7 943.1,255.9 933.5,254.9 930.8,254.3z"/>
<path fill="#3dcc48" d="M798.3,290.1 795.3,301.6 776.8,309.4 780.3,297.7z"/>
<path fill="#79cc3d" d="M828.8,329.9 848.8,332.8 838.4,337.5 815.3,335.8z"/>
<path fill="#67cc3d" d="M873.0,322.7 886.5,323.2 877.8,327.2 860.5,327.8z"/>
<path fill="#3dcc47" d="M1055.2,308.2 1070.4,300.5 1056.2,293.5 1042.4,300.9z"/>
<path fill="#3dcc58" d="M1070.4,300.5 1076.6,291.7 1061.9,285.5 1056.2,293.5z"/>
<path fill="#3dcc65" d="M1056.2,293.5 1061.9,285.5 1043.9,280.4 1039.0,287.6z"/>
<path fill="#3dcc56" d="M1042.4,300.9 1056.2,293.5 1039.0,287.6 1026.9,294.6z"/>
<path fill="#3dcc5d" d="M943.4,286.6 937.6,291.8 934.0,295.3 938.7,289.3z"/>
<path fill="#3dcc45" d="M927.8,299.1 924.8,302.4 919.0,306.4 919.5,303.2z"/>
<path fill="#40cc3d" d="M1064.6,316.3 1080.8,308.4 1070.4,300.5 1055.2,308.2z"/>
<path fill="#6acc3d" d="M782.3,320.6 795.8,329.9 782.5,336.4 767.6,328.0z"/>
<path fill="#3dcc8e" d="M859.9,263.2 847.5,267.9 828.0,273.7 843.8,267.8z"/>
<path fill="#3dcc70" d="M950.0,278.7 944.8,284.3 943.4,286.6 948.3,279.8z"/>
<path fill="#78cc3d" d="M795.8,329.9 815.3,335.8 804.2,341.3 782.5,336.4z"/>
<path fill="#6bcc3d" d="M860.5,327.8 877.8,327.2 869.7,330.9 848.8,332.8z"/>
<path fill="#3dcc4d" d="M1080.8,308.4 1087.5,299.2 1076.6,291.7 1070.4,300.5z"/>
<path fill="#3dcc3d" d="M1033.2,313.9 1055.2,308.2 1042.4,300.9 1022.5,306.7z"/>
<path fill="#3dcc73" d="M1039.0,287.6 1043.9,280.4 1023.6,276.8 1019.4,283.0z"/>
<path fill="#3dcc79" d="M1061.9,285.5 1058.3,277.9 1040.8,273.9 1043.9,280.4z"/>
<path fill="#4bcc3d" d="M1041.1,321.6 1064.6,316.3 1055.2,308.2 1033.2,313.9z"/>
<path fill="#3dcc66" d="M1026.9,294.6 1039.0,287.6 1019.4,283.0 1009.3,289.2z"/>
<path fill="#3dcc9f" d="M950.6,260.8 954.0,263.1 952.2,260.8 948.9,257.9z"/>
<path fill="#3dcc4d" d="M1022.5,306.7 1042.4,300.9 1026.9,294.6 1009.5,300.2z"/>
<path fill="#3dcc6e" d="M1076.6,291.7 1072.6,283.3 1058.3,277.9 1061.9,285.5z"/>
<path fill="#52cc3d" d="M776.8,309.4 782.3,320.6 767.6,328.0 761.4,317.2z"/>
<path fill="#3dcca9" d="M943.4,257.9 948.9,257.9 943.1,255.9 938.7,255.7z"/>
<path fill="#3d80cc" d="M920.5,211.3 920.8,197.3 903.3,193.9 904.7,208.8z"/>
<path fill="#3d65cc" d="M920.8,197.3 920.9,186.9 902.9,182.7 903.3,193.9z"/>
<path fill="#4ccc3d" d="M1070.3,324.9 1087.1,317.2 1080.8,308.4 1064.6,316.3z"/>
<path fill="#3d86cc" d="M933.5,215.5 935.2,202.6 920.8,197.3 920.5,211.3z"/>
<path fill="#3d6ecc" d="M935.2,202.6 935.6,193.2 920.9,186.9 920.8,197.3z"/>
<path fill="#3dcc54" d="M934.0,295.3 929.1,298.5 924.8,302.4 927.8,299.1z"/>
<path fill="#3dcc84" d="M1043.9,280.4 1040.8,273.9 1020.9,271.3 1023.6,276.8z"/>
<path fill="#79cc3d" d="M815.3,335.8 838.4,337.5 829.8,341.6 804.2,341.3z"/>
<path fill="#3d7acc" d="M904.7,208.8 903.3,193.9 883.4,192.6 886.7,208.1z"/>
<path fill="#3dcc65" d="M1087.5,299.2 1083.2,289.8 1072.6,283.3 1076.6,291.7z"/>
<path fill="#58cc3d" d="M1045.9,329.7 1070.3,324.9 1064.6,316.3 1041.1,321.6z"/>
<path fill="#3dcc6a" d="M809.7,280.1 798.3,290.1 780.3,297.7 793.4,287.0z"/>
<path fill="#3dcc5e" d="M1009.5,300.2 1026.9,294.6 1009.3,289.2 994.6,294.4z"/>
<path fill="#6dcc3d" d="M848.8,332.8 869.7,330.9 862.4,334.2 838.4,337.5z"/>
<path fill="#3d5dcc" d="M903.3,193.9 902.9,182.7 882.5,180.7 883.4,192.6z"/>
<path fill="#3dcc43" d="M1087.1,317.2 1094.1,307.5 1087.5,299.2 1080.8,308.4z"/>
<path fill="#3ecc3d" d="M1007.2,316.6 1033.2,313.9 1022.5,306.7 998.9,310.0z"/>
<path fill="#3d79cc" d="M945.8,209.8 946.5,201.5 935.6,193.2 935.2,202.6z"/>
<path fill="#3dcc91" d="M952.2,269.3 950.8,273.5 953.5,272.8 955.0,267.3z"/>
<path fill="#3d8ecc" d="M943.1,221.2 945.8,209.8 935.2,202.6 933.5,215.5z"/>
<path fill="#3dccae" d="M910.1,257.5 907.0,254.7 892.2,256.6 899.6,258.6z"/>
<path fill="#4ccc3d" d="M1013.3,323.6 1041.1,321.6 1033.2,313.9 1007.2,316.6z"/>
<path fill="#3dcc82" d="M1019.4,283.0 1023.6,276.8 1001.6,274.5 998.3,279.7z"/>
<path fill="#3dccb0" d="M919.4,257.3 920.0,254.0 907.0,254.7 910.1,257.5z"/>
<path fill="#3dcc8c" d="M843.8,267.8 828.0,273.7 809.7,280.1 828.8,273.0z"/>
<path fill="#3dcc77" d="M1009.3,289.2 1019.4,283.0 998.3,279.7 990.3,284.9z"/>
<path fill="#3d9acc" d="M920.0,227.7 920.5,211.3 904.7,208.8 907.0,226.1z"/>
<path fill="#3dcc70" d="M944.8,284.3 938.7,288.6 937.6,291.8 943.4,286.6z"/>
<path fill="#3dcc89" d="M950.8,273.5 947.5,278.0 950.0,278.7 953.5,272.8z"/>
<path fill="#3dcc4c" d="M998.9,310.0 1022.5,306.7 1009.5,300.2 988.8,303.7z"/>
<path fill="#3dcc48" d="M780.3,297.7 776.8,309.4 761.4,317.2 765.3,305.3z"/>
<path fill="#3dcc8e" d="M1058.3,277.9 1045.0,272.0 1029.1,269.1 1040.8,273.9z"/>
<path fill="#3d74cc" d="M886.7,208.1 883.4,192.6 862.1,193.3 867.3,209.2z"/>
<path fill="#3dccac" d="M899.6,258.6 892.2,256.6 876.3,259.4 888.2,260.4z"/>
<path fill="#3dcc9c" d="M951.3,266.1 952.2,269.3 955.0,267.3 954.0,263.1z"/>
<path fill="#3d9ecc" d="M930.8,230.6 933.5,215.5 920.5,211.3 920.0,227.7z"/>
<path fill="#3d4dcc" d="M920.9,186.9 920.8,181.1 903.5,176.3 902.9,182.7z"/>
<path fill="#3d58cc" d="M935.6,193.2 934.9,188.1 920.8,181.1 920.9,186.9z"/>
<path fill="#3d96cc" d="M907.0,226.1 904.7,208.8 886.7,208.1 892.2,225.9z"/>
<path fill="#3dcc86" d="M1072.6,283.3 1058.0,276.1 1045.0,272.0 1058.3,277.9z"/>
<path fill="#3dccb3" d="M927.0,257.8 930.8,254.3 920.0,254.0 919.4,257.3z"/>
<path fill="#59cc3d" d="M1017.0,330.7 1045.9,329.7 1041.1,321.6 1013.3,323.6z"/>
<path fill="#42cc3d" d="M904.0,314.8 909.5,312.3 904.3,315.5 895.3,319.0z"/>
<path fill="#3dcc90" d="M1023.6,276.8 1020.9,271.3 999.5,270.1 1001.6,274.5z"/>
<path fill="#49cc3d" d="M895.3,319.0 904.3,315.5 899.0,318.6 886.5,323.2z"/>
<path fill="#3d56cc" d="M883.4,192.6 882.5,180.7 860.6,180.9 862.1,193.3z"/>
<path fill="#3dcc41" d="M912.0,310.5 914.3,308.9 909.5,312.3 904.0,314.8z"/>
<path fill="#56cc3d" d="M1071.9,333.9 1089.0,326.4 1087.1,317.2 1070.3,324.9z"/>
<path fill="#62cc3d" d="M1047.3,338.0 1071.9,333.9 1070.3,324.9 1045.9,329.7z"/>
<path fill="#3dcc96" d="M1040.8,273.9 1029.1,269.1 1011.1,267.5 1020.9,271.3z"/>
<path fill="#3dcc5d" d="M1094.1,307.5 1089.6,297.3 1083.2,289.8 1087.5,299.2z"/>
<path fill="#3dcc64" d="M937.6,291.8 931.6,294.8 929.1,298.5 934.0,295.3z"/>
<path fill="#76cc3d" d="M782.5,336.4 804.2,341.3 795.7,346.0 772.5,342.3z"/>
<path fill="#3d65cc" d="M946.5,201.5 945.4,197.1 934.9,188.1 935.6,193.2z"/>
<path fill="#3d43cc" d="M902.9,182.7 903.5,176.3 883.9,173.7 882.5,180.7z"/>
<path fill="#4ecc3d" d="M886.5,323.2 899.0,318.6 893.8,321.4 877.8,327.2z"/>
<path fill="#6dcc3d" d="M838.4,337.5 862.4,334.2 856.4,337.0 829.8,341.6z"/>
<path fill="#3dcc70" d="M994.6,294.4 1009.3,289.2 990.3,284.9 978.7,289.5z"/>
<path fill="#3dccaf" d="M944.8,261.0 950.6,260.8 948.9,257.9 943.4,257.9z"/>
<path fill="#3da3cc" d="M938.7,234.9 943.1,221.2 933.5,215.5 930.8,230.6z"/>
<path fill="#3dccab" d="M888.2,260.4 876.3,259.4 859.9,263.2 876.6,262.9z"/>
<path fill="#3d84cc" d="M952.2,218.6 953.1,211.5 946.5,201.5 945.8,209.8z"/>
<path fill="#3dcc5d" d="M988.8,303.7 1009.5,300.2 994.6,294.4 977.3,297.9z"/>
<path fill="#68cc3d" d="M767.6,328.0 782.5,336.4 772.5,342.3 756.4,334.8z"/>
<path fill="#3dcc4b" d="M919.0,306.4 918.5,305.5 914.3,308.9 912.0,310.5z"/>
<path fill="#3d96cc" d="M948.9,228.5 952.2,218.6 945.8,209.8 943.1,221.2z"/>
<path fill="#3d92cc" d="M892.2,225.9 886.7,208.1 867.3,209.2 876.3,227.1z"/>
<path fill="#3dcc80" d="M1083.2,289.8 1067.6,281.5 1058.0,276.1 1072.6,283.3z"/>
<path fill="#3dcc84" d="M947.5,278.0 942.8,282.3 944.8,284.3 950.0,278.7z"/>
<path fill="#3dccb6" d="M932.6,259.1 938.7,255.7 930.8,254.3 927.0,257.8z"/>
<path fill="#77cc3d" d="M804.2,341.3 829.8,341.6 823.2,345.0 795.7,346.0z"/>
<path fill="#40cc3d" d="M1089.0,326.4 1096.0,316.6 1094.1,307.5 1087.1,317.2z"/>
<path fill="#63cc3d" d="M1018.1,337.8 1047.3,338.0 1045.9,329.7 1017.0,330.7z"/>
<path fill="#52cc3d" d="M877.8,327.2 893.8,321.4 888.9,323.9 869.7,330.9z"/>
<path fill="#3dcca9" d="M948.1,264.4 951.3,266.1 954.0,263.1 950.6,260.8z"/>
<path fill="#3d70cc" d="M867.3,209.2 862.1,193.3 840.1,195.9 847.5,211.9z"/>
<path fill="#3dcc57" d="M924.8,302.4 922.0,302.0 918.5,305.5 919.0,306.4z"/>
<path fill="#3dcc9f" d="M1020.9,271.3 1011.1,267.5 991.8,267.2 999.5,270.1z"/>
<path fill="#43cc3d" d="M984.5,321.7 1013.3,323.6 1007.2,316.6 980.2,315.8z"/>
<path fill="#3dcc45" d="M980.2,315.8 1007.2,316.6 998.9,310.0 974.4,310.0z"/>
<path fill="#50cc3d" d="M761.4,317.2 767.6,328.0 756.4,334.8 749.8,324.4z"/>
<path fill="#3d73cc" d="M953.1,211.5 951.7,207.8 945.4,197.1 946.5,201.5z"/>
<path fill="#3dcc91" d="M998.3,279.7 1001.6,274.5 979.1,273.5 976.7,277.5z"/>
<path fill="#403dcc" d="M882.5,180.7 883.9,173.7 862.9,173.3 860.6,180.9z"/>
<path fill="#4fcc3d" d="M987.0,327.5 1017.0,330.7 1013.3,323.6 984.5,321.7z"/>
<path fill="#3dcc89" d="M990.3,284.9 998.3,279.7 976.7,277.5 970.8,281.6z"/>
<path fill="#3da9cc" d="M943.4,240.2 948.9,228.5 943.1,221.2 938.7,234.9z"/>
<path fill="#3dcc8b" d="M828.8,273.0 809.7,280.1 793.4,287.0 815.3,278.6z"/>
<path fill="#3dccaa" d="M876.6,262.9 859.9,263.2 843.8,267.8 865.2,266.1z"/>
<path fill="#3dcc6a" d="M793.4,287.0 780.3,297.7 765.3,305.3 779.8,293.9z"/>
<path fill="#3d50cc" d="M862.1,193.3 860.6,180.9 838.1,183.2 840.1,195.9z"/>
<path fill="#54cc3d" d="M869.7,330.9 888.9,323.9 884.5,326.0 862.4,334.2z"/>
<path fill="#3dcc54" d="M974.4,310.0 998.9,310.0 988.8,303.7 967.4,304.4z"/>
<path fill="#3d90cc" d="M876.3,227.1 867.3,209.2 847.5,211.9 859.9,229.5z"/>
<path fill="#3d47cc" d="M934.9,188.1 933.2,187.8 920.5,180.5 920.8,181.1z"/>
<path fill="#3dcc70" d="M977.3,297.9 994.6,294.4 978.7,289.5 965.0,292.7z"/>
<path fill="#6bcc3d" d="M1045.2,346.1 1069.5,343.0 1071.9,333.9 1047.3,338.0z"/>
<path fill="#3dcc9c" d="M1001.6,274.5 999.5,270.1 977.6,270.2 979.1,273.5z"/>
<path fill="#3dccb9" d="M936.0,261.1 943.4,257.9 938.7,255.7 932.6,259.1z"/>
<path fill="#3dcc7a" d="M1089.6,297.3 1073.3,287.8 1067.6,281.5 1083.2,289.8z"/>
<path fill="#403dcc" d="M920.8,181.1 920.5,180.5 904.9,175.3 903.5,176.3z"/>
<path fill="#6bcc3d" d="M829.8,341.6 856.4,337.0 851.8,339.2 823.2,345.0z"/>
<path fill="#3db0cc" d="M919.4,245.0 920.0,227.7 907.0,226.1 910.1,244.2z"/>
<path fill="#3dcca3" d="M1045.0,272.0 1022.5,268.4 1009.5,266.5 1029.1,269.1z"/>
<path fill="#3dcc56" d="M1096.0,316.6 1091.5,305.6 1089.6,297.3 1094.1,307.5z"/>
<path fill="#3dcc75" d="M938.7,288.6 932.4,291.2 931.6,294.8 937.6,291.8z"/>
<path fill="#3daecc" d="M910.1,244.2 907.0,226.1 892.2,225.9 899.6,244.3z"/>
<path fill="#6ccc3d" d="M1016.5,344.7 1045.2,346.1 1047.3,338.0 1018.1,337.8z"/>
<path fill="#3d90cc" d="M954.0,228.8 955.0,223.0 953.1,211.5 952.2,218.6z"/>
<path fill="#59cc3d" d="M987.8,333.2 1018.1,337.8 1017.0,330.7 987.0,327.5z"/>
<path fill="#3db3cc" d="M927.0,246.8 930.8,230.6 920.0,227.7 919.4,245.0z"/>
<path fill="#5ecc3d" d="M1069.5,343.0 1086.3,335.9 1089.0,326.4 1071.9,333.9z"/>
<path fill="#3dcc9e" d="M1058.0,276.1 1033.2,271.4 1022.5,268.4 1045.0,272.0z"/>
<path fill="#3dcc64" d="M929.1,298.5 924.6,298.4 922.0,302.0 924.8,302.4z"/>
<path fill="#3d56cc" d="M945.4,197.1 942.6,197.0 933.2,187.8 934.9,188.1z"/>
<path fill="#3d9fcc" d="M950.6,236.9 954.0,228.8 952.2,218.6 948.9,228.5z"/>
<path fill="#3dcc83" d="M942.8,282.3 937.2,285.6 938.7,288.6 944.8,284.3z"/>
<path fill="#3dcca9" d="M1029.1,269.1 1009.5,266.5 994.6,265.8 1011.1,267.5z"/>
<path fill="#3dcc84" d="M978.7,289.5 990.3,284.9 970.8,281.6 962.4,285.3z"/>
<path fill="#4c3dcc" d="M903.5,176.3 904.9,175.3 887.3,172.1 883.9,173.7z"/>
<path fill="#3dcc64" d="M967.4,304.4 988.8,303.7 977.3,297.9 959.3,299.0z"/>
<path fill="#54cc3d" d="M862.4,334.2 884.5,326.0 880.9,327.6 856.4,337.0z"/>
<path fill="#3daccc" d="M899.6,244.3 892.2,225.9 876.3,227.1 888.2,245.3z"/>
<path fill="#3dcc49" d="M765.3,305.3 761.4,317.2 749.8,324.4 754.0,312.5z"/>
<path fill="#3db6cc" d="M932.6,249.5 938.7,234.9 930.8,230.6 927.0,246.8z"/>
<path fill="#3dccb5" d="M942.8,264.6 948.1,264.4 950.6,260.8 944.8,261.0z"/>
<path fill="#3d82cc" d="M955.0,223.0 953.5,220.0 951.7,207.8 953.1,211.5z"/>
<path fill="#3dcc9a" d="M1067.6,281.5 1041.1,275.3 1033.2,271.4 1058.0,276.1z"/>
<path fill="#3dcca2" d="M944.8,271.7 943.8,274.5 950.8,273.5 952.2,269.3z"/>
<path fill="#71cc3d" d="M772.5,342.3 795.7,346.0 790.4,349.7 766.1,347.2z"/>
<path fill="#3dcca9" d="M999.5,270.1 991.8,267.2 971.9,268.1 977.6,270.2z"/>
<path fill="#73cc3d" d="M795.7,346.0 823.2,345.0 819.1,347.5 790.4,349.7z"/>
<path fill="#61cc3d" d="M986.7,338.5 1016.5,344.7 1018.1,337.8 987.8,333.2z"/>
<path fill="#3d66cc" d="M951.7,207.8 948.3,207.8 942.6,197.0 945.4,197.1z"/>
<path fill="#47cc3d" d="M1086.3,335.9 1093.2,325.9 1096.0,316.6 1089.0,326.4z"/>
<path fill="#3dcca9" d="M865.2,266.1 843.8,267.8 828.8,273.0 854.4,269.7z"/>
<path fill="#3d6dcc" d="M847.5,211.9 840.1,195.9 818.6,200.3 828.0,216.1z"/>
<path fill="#473dcc" d="M860.6,180.9 862.9,173.3 841.2,175.0 838.1,183.2z"/>
<path fill="#3dafcc" d="M944.8,246.6 950.6,236.9 948.9,228.5 943.4,240.2z"/>
<path fill="#3dcc9b" d="M943.8,274.5 941.2,277.6 947.5,278.0 950.8,273.5z"/>
<path fill="#3dccaf" d="M1011.1,267.5 994.6,265.8 978.7,266.2 991.8,267.2z"/>
<path fill="#3dccaa" d="M944.1,269.6 944.8,271.7 952.2,269.3 951.3,266.1z"/>
<path fill="#3dcc72" d="M931.6,294.8 926.1,294.9 924.6,298.4 929.1,298.5z"/>
<path fill="#3d8ecc" d="M859.9,229.5 847.5,211.9 828.0,216.1 843.8,233.2z"/>
<path fill="#3dccbc" d="M937.0,263.7 944.8,261.0 943.4,257.9 936.0,261.1z"/>
<path fill="#64cc3d" d="M756.4,334.8 772.5,342.3 766.1,347.2 749.3,340.6z"/>
<path fill="#3dabcc" d="M888.2,245.3 876.3,227.1 859.9,229.5 876.6,247.3z"/>
<path fill="#67cc3d" d="M823.2,345.0 851.8,339.2 848.9,340.5 819.1,347.5z"/>
<path fill="#3dcc83" d="M965.0,292.7 978.7,289.5 962.4,285.3 952.3,287.9z"/>
<path fill="#3dcc4b" d="M957.9,315.6 984.5,321.7 980.2,315.8 955.3,311.1z"/>
<path fill="#563dcc" d="M883.9,173.7 887.3,172.1 868.3,171.1 862.9,173.3z"/>
<path fill="#73cc3d" d="M1012.4,351.1 1039.9,353.9 1045.2,346.1 1016.5,344.7z"/>
<path fill="#3db9cc" d="M936.0,252.9 943.4,240.2 938.7,234.9 932.6,249.5z"/>
<path fill="#52cc3d" d="M856.4,337.0 880.9,327.6 878.1,328.6 851.8,339.2z"/>
<path fill="#3dcc75" d="M959.3,299.0 977.3,297.9 965.0,292.7 950.7,294.0z"/>
<path fill="#3dcc41" d="M959.4,319.9 987.0,327.5 984.5,321.7 957.9,315.6z"/>
<path fill="#3d4ccc" d="M840.1,195.9 838.1,183.2 816.0,187.4 818.6,200.3z"/>
<path fill="#3dcc74" d="M1091.5,305.6 1075.0,294.9 1073.3,287.8 1089.6,297.3z"/>
<path fill="#3dcc57" d="M955.3,311.1 980.2,315.8 974.4,310.0 951.8,306.5z"/>
<path fill="#71cc3d" d="M1039.9,353.9 1063.1,351.8 1069.5,343.0 1045.2,346.1z"/>
<path fill="#3dcc98" d="M941.2,277.6 937.4,280.4 942.8,282.3 947.5,278.0z"/>
<path fill="#3dcc55" d="M904.3,315.5 911.5,307.0 909.0,308.9 899.0,318.6z"/>
<path fill="#3dcc8b" d="M815.3,278.6 793.4,287.0 779.8,293.9 804.2,284.3z"/>
<path fill="#3dcc5a" d="M909.5,312.3 913.9,304.8 911.5,307.0 904.3,315.5z"/>
<path fill="#42cc3d" d="M959.9,324.0 987.8,333.2 987.0,327.5 959.4,319.9z"/>
<path fill="#3dcca2" d="M976.7,277.5 979.1,273.5 957.0,273.6 955.5,276.3z"/>
<path fill="#3dccb3" d="M941.6,268.4 944.1,269.6 951.3,266.1 948.1,264.4z"/>
<path fill="#3dcc96" d="M1073.3,287.8 1045.9,280.1 1041.1,275.3 1067.6,281.5z"/>
<path fill="#3dcc50" d="M899.0,318.6 909.0,308.9 906.6,310.6 893.8,321.4z"/>
<path fill="#67cc3d" d="M983.8,343.4 1012.4,351.1 1016.5,344.7 986.7,338.5z"/>
<path fill="#3d9ccc" d="M951.3,240.1 952.2,235.7 955.0,223.0 954.0,228.8z"/>
<path fill="#3dcc88" d="M937.2,285.6 931.3,287.6 932.4,291.2 938.7,288.6z"/>
<path fill="#3dcc9b" d="M970.8,281.6 976.7,277.5 955.5,276.3 951.7,279.2z"/>
<path fill="#3dcc61" d="M914.3,308.9 916.2,302.5 913.9,304.8 909.5,312.3z"/>
<path fill="#3da9cc" d="M948.1,246.2 951.3,240.1 954.0,228.8 950.6,236.9z"/>
<path fill="#3dcc64" d="M951.8,306.5 974.4,310.0 967.4,304.4 947.6,302.0z"/>
<path fill="#3d77cc" d="M953.5,220.0 950.0,220.1 948.3,207.8 951.7,207.8z"/>
<path fill="#3dccaa" d="M979.1,273.5 977.6,270.2 956.0,271.4 957.0,273.6z"/>
<path fill="#3dcc50" d="M1093.2,325.9 1088.8,314.3 1091.5,305.6 1096.0,316.6z"/>
<path fill="#3d3dcc" d="M933.2,187.8 930.8,192.3 920.0,185.1 920.5,180.5z"/>
<path fill="#3dcc4e" d="M893.8,321.4 906.6,310.6 904.3,311.9 888.9,323.9z"/>
<path fill="#3dccc0" d="M913.8,264.9 910.1,257.5 899.6,258.6 908.3,265.3z"/>
<path fill="#3dccc1" d="M918.6,264.9 919.4,257.3 910.1,257.5 913.8,264.9z"/>
<path fill="#49cc3d" d="M959.2,327.8 986.7,338.5 987.8,333.2 959.9,324.0z"/>
<path fill="#4dcc3d" d="M749.8,324.4 756.4,334.8 749.3,340.6 742.4,330.9z"/>
<path fill="#3dcc6b" d="M779.8,293.9 765.3,305.3 754.0,312.5 769.5,300.6z"/>
<path fill="#64cc3d" d="M1063.1,351.8 1079.2,345.3 1086.3,335.9 1069.5,343.0z"/>
<path fill="#3dcc69" d="M918.5,305.5 918.1,300.0 916.2,302.5 914.3,308.9z"/>
<path fill="#3dccb5" d="M991.8,267.2 978.7,266.2 962.4,267.6 971.9,268.1z"/>
<path fill="#3d4dcc" d="M942.6,197.0 938.7,201.2 930.8,192.3 933.2,187.8z"/>
<path fill="#4b3dcc" d="M920.5,180.5 920.0,185.1 907.0,179.8 904.9,175.3z"/>
<path fill="#3dccbf" d="M908.3,265.3 899.6,258.6 888.2,260.4 902.4,266.2z"/>
<path fill="#3dccc2" d="M922.6,265.4 927.0,257.8 919.4,257.3 918.6,264.9z"/>
<path fill="#3dcca8" d="M854.4,269.7 828.8,273.0 815.3,278.6 844.9,273.6z"/>
<path fill="#3d91cc" d="M952.2,235.7 950.8,233.4 953.5,220.0 955.0,223.0z"/>
<path fill="#3dccb6" d="M1022.5,268.4 992.3,267.8 983.0,266.9 1009.5,266.5z"/>
<path fill="#3dcc81" d="M932.4,291.2 926.6,291.3 926.1,294.9 931.6,294.8z"/>
<path fill="#3dcc98" d="M962.4,285.3 970.8,281.6 951.7,279.2 946.3,281.8z"/>
<path fill="#3daacc" d="M876.6,247.3 859.9,229.5 843.8,233.2 865.2,250.0z"/>
<path fill="#3dcc4c" d="M888.9,323.9 904.3,311.9 902.3,313.0 884.5,326.0z"/>
<path fill="#4ecc3d" d="M851.8,339.2 878.1,328.6 876.4,329.0 848.9,340.5z"/>
<path fill="#3dcc72" d="M947.6,302.0 967.4,304.4 959.3,299.0 942.8,297.4z"/>
<path fill="#3dbccc" d="M937.0,257.0 944.8,246.6 943.4,240.2 936.0,252.9z"/>
<path fill="#3db5cc" d="M942.8,253.6 948.1,246.2 950.6,236.9 944.8,246.6z"/>
<path fill="#3dccb9" d="M1009.5,266.5 983.0,266.9 972.5,266.7 994.6,265.8z"/>
<path fill="#3dccb3" d="M1033.2,271.4 999.9,269.6 992.3,267.8 1022.5,268.4z"/>
<path fill="#3dcc97" d="M937.4,280.4 933.0,282.7 937.2,285.6 942.8,282.3z"/>
<path fill="#3dcc72" d="M922.0,302.0 919.8,297.4 918.1,300.0 918.5,305.5z"/>
<path fill="#3d96cc" d="M1040.8,224.3 1029.1,234.4 1011.1,238.0 1020.9,229.1z"/>
<path fill="#6ccc3d" d="M790.4,349.7 819.1,347.5 817.5,348.9 788.3,352.2z"/>
<path fill="#3dccb3" d="M977.6,270.2 971.9,268.1 952.4,270.1 956.0,271.4z"/>
<path fill="#4ecc3d" d="M957.5,331.2 983.8,343.4 986.7,338.5 959.2,327.8z"/>
<path fill="#3d5ecc" d="M948.3,207.8 943.4,211.6 938.7,201.2 942.6,197.0z"/>
<path fill="#3dcc88" d="M950.7,294.0 965.0,292.7 952.3,287.9 941.9,289.2z"/>
<path fill="#4d3dcc" d="M838.1,183.2 841.2,175.0 820.0,178.7 816.0,187.4z"/>
<path fill="#3dccbf" d="M935.6,266.7 942.8,264.6 944.8,261.0 937.0,263.7z"/>
<path fill="#3dccbf" d="M902.4,266.2 888.2,260.4 876.6,262.9 896.4,267.4z"/>
<path fill="#3dccc3" d="M925.5,266.3 932.6,259.1 927.0,257.8 922.6,265.4z"/>
<path fill="#61cc3d" d="M819.1,347.5 848.9,340.5 847.8,340.9 817.5,348.9z"/>
<path fill="#5e3dcc" d="M862.9,173.3 868.3,171.1 848.9,172.1 841.2,175.0z"/>
<path fill="#583dcc" d="M904.9,175.3 907.0,179.8 892.2,176.3 887.3,172.1z"/>
<path fill="#3dcc4c" d="M884.5,326.0 902.3,313.0 900.6,313.7 880.9,327.6z"/>
<path fill="#3d84cc" d="M1043.9,216.4 1040.8,224.3 1020.9,229.1 1023.6,222.3z"/>
<path fill="#3d6bcc" d="M828.0,216.1 818.6,200.3 798.3,206.2 809.7,221.6z"/>
<path fill="#3d8ccc" d="M843.8,233.2 828.0,216.1 809.7,221.6 828.8,237.8z"/>
<path fill="#3d9fcc" d="M1020.9,229.1 1011.1,238.0 991.8,243.2 999.5,235.8z"/>
<path fill="#3d8ecc" d="M1058.3,221.5 1045.0,232.6 1029.1,234.4 1040.8,224.3z"/>
<path fill="#6bcc3d" d="M979.2,347.7 1005.8,356.9 1012.4,351.1 983.8,343.4z"/>
<path fill="#3dccbb" d="M937.4,268.5 941.6,268.4 948.1,264.4 942.8,264.6z"/>
<path fill="#77cc3d" d="M1005.8,356.9 1031.4,361.0 1039.9,353.9 1012.4,351.1z"/>
<path fill="#3dc1cc" d="M918.6,261.8 919.4,245.0 910.1,244.2 913.8,261.5z"/>
<path fill="#3d90cc" d="M1023.6,222.3 1020.9,229.1 999.5,235.8 1001.6,230.2z"/>
<path fill="#6bcc3d" d="M766.1,347.2 790.4,349.7 788.3,352.2 763.7,350.9z"/>
<path fill="#3da9cc" d="M1029.1,234.4 1009.5,245.7 994.6,248.1 1011.1,238.0z"/>
<path fill="#3dccbc" d="M994.6,265.8 972.5,266.7 961.1,267.4 978.7,266.2z"/>
<path fill="#3dccb0" d="M1041.1,275.3 1005.6,272.2 999.9,269.6 1033.2,271.4z"/>
<path fill="#3dc0cc" d="M913.8,261.5 910.1,244.2 899.6,244.3 908.3,261.7z"/>
<path fill="#4dcc3d" d="M1079.2,345.3 1085.8,335.3 1093.2,325.9 1086.3,335.9z"/>
<path fill="#3dc2cc" d="M922.6,262.6 927.0,246.8 919.4,245.0 918.6,261.8z"/>
<path fill="#3dcc7b" d="M924.6,298.4 921.0,294.6 919.8,297.4 922.0,302.0z"/>
<path fill="#3da3cc" d="M1045.0,232.6 1022.5,244.7 1009.5,245.7 1029.1,234.4z"/>
<path fill="#3dcc92" d="M1075.0,294.9 1047.3,285.7 1045.9,280.1 1073.3,287.8z"/>
<path fill="#3dcc97" d="M952.3,287.9 962.4,285.3 946.3,281.8 939.9,283.7z"/>
<path fill="#3d79cc" d="M1061.9,212.6 1058.3,221.5 1040.8,224.3 1043.9,216.4z"/>
<path fill="#3dcc81" d="M942.8,297.4 959.3,299.0 950.7,294.0 937.6,293.0z"/>
<path fill="#3d89cc" d="M950.8,233.4 947.5,233.5 950.0,220.1 953.5,220.0z"/>
<path fill="#3dafcc" d="M1011.1,238.0 994.6,248.1 978.7,251.8 991.8,243.2z"/>
<path fill="#3dbfcc" d="M908.3,261.7 899.6,244.3 888.2,245.3 902.4,262.3z"/>
<path fill="#3dcc4c" d="M754.0,312.5 749.8,324.4 742.4,330.9 746.8,319.1z"/>
<path fill="#3dcc4e" d="M880.9,327.6 900.6,313.7 899.3,313.9 878.1,328.6z"/>
<path fill="#3dccbe" d="M896.4,267.4 876.6,262.9 865.2,266.1 890.4,269.0z"/>
<path fill="#3dccc4" d="M927.3,267.5 936.0,261.1 932.6,259.1 925.5,266.3z"/>
<path fill="#52cc3d" d="M954.7,334.0 979.2,347.7 983.8,343.4 957.5,331.2z"/>
<path fill="#3dcc70" d="M1088.8,314.3 1072.6,302.4 1075.0,294.9 1091.5,305.6z"/>
<path fill="#49cc3d" d="M848.9,340.5 876.4,329.0 875.7,328.7 847.8,340.9z"/>
<path fill="#3dc3cc" d="M925.5,263.8 932.6,249.5 927.0,246.8 922.6,262.6z"/>
<path fill="#76cc3d" d="M1031.4,361.0 1053.1,360.0 1063.1,351.8 1039.9,353.9z"/>
<path fill="#3d70cc" d="M950.0,220.1 944.8,223.3 943.4,211.6 948.3,207.8z"/>
<path fill="#3dcc61" d="M937.2,308.4 959.4,319.9 957.9,315.6 936.5,305.6z"/>
<path fill="#3d49cc" d="M818.6,200.3 816.0,187.4 795.3,193.2 798.3,206.2z"/>
<path fill="#3da9cc" d="M999.5,235.8 991.8,243.2 971.9,249.9 977.6,244.1z"/>
<path fill="#3d73cc" d="M1039.0,211.4 1043.9,216.4 1023.6,222.3 1019.4,218.2z"/>
<path fill="#3d82cc" d="M1019.4,218.2 1023.6,222.3 1001.6,230.2 998.3,226.9z"/>
<path fill="#3d86cc" d="M1072.6,220.6 1058.0,232.4 1045.0,232.6 1058.3,221.5z"/>
<path fill="#3dcc69" d="M936.5,305.6 957.9,315.6 955.3,311.1 935.3,302.6z"/>
<path fill="#3dcc5a" d="M937.4,310.9 959.9,324.0 959.4,319.9 937.2,308.4z"/>
<path fill="#3d9ccc" d="M1001.6,230.2 999.5,235.8 977.6,244.1 979.1,239.8z"/>
<path fill="#3da9cc" d="M865.2,250.0 843.8,233.2 828.8,237.8 854.4,253.3z"/>
<path fill="#3dcc91" d="M931.3,287.6 925.9,287.7 926.6,291.3 932.4,291.2z"/>
<path fill="#623dcc" d="M887.3,172.1 892.2,176.3 876.3,174.8 868.3,171.1z"/>
<path fill="#3dccbb" d="M971.9,268.1 962.4,267.6 946.3,269.9 952.4,270.1z"/>
<path fill="#3d9ecc" d="M1058.0,232.4 1033.2,245.0 1022.5,244.7 1045.0,232.6z"/>
<path fill="#3daacc" d="M944.1,252.1 944.8,249.1 952.2,235.7 951.3,240.1z"/>
<path fill="#3dbfcc" d="M935.6,261.6 942.8,253.6 944.8,246.6 937.0,257.0z"/>
<path fill="#5ecc3d" d="M749.3,340.6 766.1,347.2 763.7,350.9 746.6,345.2z"/>
<path fill="#3dcc9b" d="M933.0,282.7 928.4,284.0 931.3,287.6 937.2,285.6z"/>
<path fill="#3db3cc" d="M941.6,256.2 944.1,252.1 951.3,240.1 948.1,246.2z"/>
<path fill="#3dbfcc" d="M902.4,262.3 888.2,245.3 876.6,247.3 896.4,263.4z"/>
<path fill="#3dcc72" d="M935.3,302.6 955.3,311.1 951.8,306.5 933.6,299.5z"/>
<path fill="#3dcc55" d="M937.1,313.2 959.2,327.8 959.9,324.0 937.4,310.9z"/>
<path fill="#3dcc86" d="M926.1,294.9 921.7,291.8 921.0,294.6 924.6,298.4z"/>
<path fill="#3dcc8c" d="M804.2,284.3 779.8,293.9 769.5,300.6 795.7,289.9z"/>
<path fill="#3dccae" d="M1045.9,280.1 1008.9,275.3 1005.6,272.2 1041.1,275.3z"/>
<path fill="#3dccbf" d="M978.7,266.2 961.1,267.4 949.5,268.8 962.4,267.6z"/>
<path fill="#3dcca8" d="M844.9,273.6 815.3,278.6 804.2,284.3 836.9,277.8z"/>
<path fill="#3dcc50" d="M878.1,328.6 899.3,313.9 898.5,313.7 876.4,329.0z"/>
<path fill="#3db5cc" d="M991.8,243.2 978.7,251.8 962.4,256.6 971.9,249.9z"/>
<path fill="#3dc4cc" d="M927.3,265.4 936.0,252.9 932.6,249.5 925.5,263.8z"/>
<path fill="#3dccb2" d="M933.2,274.3 932.6,275.7 943.8,274.5 944.8,271.7z"/>
<path fill="#3d65cc" d="M1056.2,206.7 1061.9,212.6 1043.9,216.4 1039.0,211.4z"/>
<path fill="#3db9cc" d="M1009.5,245.7 983.0,257.2 972.5,258.5 994.6,248.1z"/>
<path fill="#3d6ecc" d="M1076.6,210.8 1072.6,220.6 1058.3,221.5 1061.9,212.6z"/>
<path fill="#3dcc50" d="M936.3,315.1 957.5,331.2 959.2,327.8 937.1,313.2z"/>
<path fill="#6dcc3d" d="M973.2,351.2 997.2,361.8 1005.8,356.9 979.2,347.7z"/>
<path fill="#3db6cc" d="M1022.5,244.7 992.3,256.8 983.0,257.2 1009.5,245.7z"/>
<path fill="#3dccaf" d="M932.6,275.7 931.1,277.2 941.2,277.6 943.8,274.5z"/>
<path fill="#3da2cc" d="M944.8,249.1 943.8,247.6 950.8,233.4 952.2,235.7z"/>
<path fill="#3dcc7b" d="M933.6,299.5 951.8,306.5 947.6,302.0 931.7,296.3z"/>
<path fill="#3d91cc" d="M998.3,226.9 1001.6,230.2 979.1,239.8 976.7,237.4z"/>
<path fill="#54cc3d" d="M951.1,336.2 973.2,351.2 979.2,347.7 954.7,334.0z"/>
<path fill="#3dccbe" d="M890.4,269.0 865.2,266.1 854.4,269.7 884.9,270.9z"/>
<path fill="#3dccb7" d="M932.8,273.2 933.2,274.3 944.8,271.7 944.1,269.6z"/>
<path fill="#59cc3d" d="M817.5,348.9 847.8,340.9 848.6,340.3 818.6,349.0z"/>
<path fill="#3dccc6" d="M927.8,269.0 937.0,263.7 936.0,261.1 927.3,267.5z"/>
<path fill="#3dcc9b" d="M941.9,289.2 952.3,287.9 939.9,283.7 933.2,284.7z"/>
<path fill="#3dbbcc" d="M937.4,261.2 941.6,256.2 948.1,246.2 942.8,253.6z"/>
<path fill="#3dcc91" d="M937.6,293.0 950.7,294.0 941.9,289.2 932.3,288.7z"/>
<path fill="#3dcc4c" d="M1085.8,335.3 1081.6,323.2 1088.8,314.3 1093.2,325.9z"/>
<path fill="#3dbccc" d="M994.6,248.1 972.5,258.5 961.1,260.7 978.7,251.8z"/>
<path fill="#3dccb2" d="M955.5,276.3 957.0,273.6 936.3,274.7 935.5,276.1z"/>
<path fill="#42cc3d" d="M847.8,340.9 875.7,328.7 876.2,327.6 848.6,340.3z"/>
<path fill="#68cc3d" d="M1053.1,360.0 1068.0,354.2 1079.2,345.3 1063.1,351.8z"/>
<path fill="#3dcc4e" d="M935.0,316.6 954.7,334.0 957.5,331.2 936.3,315.1z"/>
<path fill="#3dccc3" d="M931.8,269.9 937.4,268.5 942.8,264.6 935.6,266.7z"/>
<path fill="#3e3dcc" d="M930.8,192.3 927.8,201.3 919.5,194.6 920.0,185.1z"/>
<path fill="#3dbecc" d="M896.4,263.4 876.6,247.3 865.2,250.0 890.4,264.9z"/>
<path fill="#63cc3d" d="M788.3,352.2 817.5,348.9 818.6,349.0 789.7,353.3z"/>
<path fill="#3dccaf" d="M951.7,279.2 955.5,276.3 935.5,276.1 933.8,277.6z"/>
<path fill="#3d4ccc" d="M938.7,201.2 934.0,209.4 927.8,201.3 930.8,192.3z"/>
<path fill="#3dccac" d="M931.1,277.2 929.0,278.6 937.4,280.4 941.2,277.6z"/>
<path fill="#3dcc55" d="M876.4,329.0 898.5,313.7 898.2,313.1 875.7,328.7z"/>
<path fill="#3db3cc" d="M1033.2,245.0 999.9,257.4 992.3,256.8 1022.5,244.7z"/>
<path fill="#643dcc" d="M841.2,175.0 848.9,172.1 829.8,175.1 820.0,178.7z"/>
<path fill="#3d84cc" d="M947.5,233.5 942.8,235.9 944.8,223.3 950.0,220.1z"/>
<path fill="#3dccb7" d="M957.0,273.6 956.0,271.4 935.8,273.6 936.3,274.7z"/>
<path fill="#79cc3d" d="M997.2,361.8 1020.3,367.3 1031.4,361.0 1005.8,356.9z"/>
<path fill="#3dcc86" d="M931.7,296.3 947.6,302.0 942.8,297.4 929.4,293.0z"/>
<path fill="#3dccbd" d="M931.4,272.6 932.8,273.2 944.1,269.6 941.6,268.4z"/>
<path fill="#3d77cc" d="M1009.3,217.2 1019.4,218.2 998.3,226.9 990.3,226.3z"/>
<path fill="#3dcc92" d="M926.6,291.3 921.9,288.9 921.7,291.8 926.1,294.9z"/>
<path fill="#3dcc6d" d="M769.5,300.6 754.0,312.5 746.8,319.1 763.0,306.8z"/>
<path fill="#3dc6cc" d="M927.8,267.3 937.0,257.0 936.0,252.9 927.3,265.4z"/>
<path fill="#3db3cc" d="M977.6,244.1 971.9,249.9 952.4,257.9 956.0,253.9z"/>
<path fill="#3d66cc" d="M1026.9,209.9 1039.0,211.4 1019.4,218.2 1009.3,217.2z"/>
<path fill="#4c3dcc" d="M920.0,185.1 919.5,194.6 909.4,189.5 907.0,179.8z"/>
<path fill="#3daacc" d="M979.1,239.8 977.6,244.1 956.0,253.9 957.0,251.0z"/>
<path fill="#3d9acc" d="M1067.6,233.8 1041.1,246.7 1033.2,245.0 1058.0,232.4z"/>
<path fill="#3d5dcc" d="M943.4,211.6 937.6,218.8 934.0,209.4 938.7,201.2z"/>
<path fill="#3d8bcc" d="M828.8,237.8 809.7,221.6 793.4,228.1 815.3,243.2z"/>
<path fill="#47cc3d" d="M742.4,330.9 749.3,340.6 746.6,345.2 739.6,336.1z"/>
<path fill="#3dccac" d="M946.3,281.8 951.7,279.2 933.8,277.6 931.2,278.9z"/>
<path fill="#3d9bcc" d="M943.8,247.6 941.2,247.6 947.5,233.5 950.8,233.4z"/>
<path fill="#3d80cc" d="M1083.2,221.5 1067.6,233.8 1058.0,232.4 1072.6,220.6z"/>
<path fill="#3dcc4c" d="M933.3,317.7 951.1,336.2 954.7,334.0 935.0,316.6z"/>
<path fill="#503dcc" d="M816.0,187.4 820.0,178.7 800.1,184.1 795.3,193.2z"/>
<path fill="#3dcc90" d="M1072.6,302.4 1045.2,291.6 1047.3,285.7 1075.0,294.9z"/>
<path fill="#3dbfcc" d="M978.7,251.8 961.1,260.7 949.5,263.7 962.4,256.6z"/>
<path fill="#3dcc81" d="M911.5,307.0 916.2,293.7 915.5,294.6 909.0,308.9z"/>
<path fill="#3dcc7e" d="M909.0,308.9 915.5,294.6 914.9,295.3 906.6,310.6z"/>
<path fill="#54cc3d" d="M946.7,337.7 965.9,353.9 973.2,351.2 951.1,336.2z"/>
<path fill="#3dccc3" d="M992.3,267.8 956.5,270.6 951.7,270.3 983.0,266.9z"/>
<path fill="#3d89cc" d="M990.3,226.3 998.3,226.9 976.7,237.4 970.8,237.1z"/>
<path fill="#3dccbd" d="M956.0,271.4 952.4,270.1 934.1,273.0 935.8,273.6z"/>
<path fill="#3dcc84" d="M913.9,304.8 916.8,292.7 916.2,293.7 911.5,307.0z"/>
<path fill="#6b3dcc" d="M868.3,171.1 876.3,174.8 859.9,175.1 848.9,172.1z"/>
<path fill="#3dccac" d="M1047.3,285.7 1009.9,279.1 1008.9,275.3 1045.9,280.1z"/>
<path fill="#3dcc7c" d="M906.6,310.6 914.9,295.3 914.3,295.8 904.3,311.9z"/>
<path fill="#3d58cc" d="M1070.4,204.1 1076.6,210.8 1061.9,212.6 1056.2,206.7z"/>
<path fill="#3dccc4" d="M983.0,266.9 951.7,270.3 946.2,270.4 972.5,266.7z"/>
<path fill="#3dccc3" d="M962.4,267.6 949.5,268.8 938.1,270.9 946.3,269.9z"/>
<path fill="#3dbbcc" d="M971.9,249.9 962.4,256.6 946.3,262.5 952.4,257.9z"/>
<path fill="#3dccbe" d="M884.9,270.9 854.4,269.7 844.9,273.6 879.9,272.9z"/>
<path fill="#3d6acc" d="M809.7,221.6 798.3,206.2 780.3,213.3 793.4,228.1z"/>
<path fill="#3da2cc" d="M976.7,237.4 979.1,239.8 957.0,251.0 955.5,249.4z"/>
<path fill="#3dccac" d="M929.0,278.6 926.5,279.7 933.0,282.7 937.4,280.4z"/>
<path fill="#3dcc88" d="M916.2,302.5 917.4,291.5 916.8,292.7 913.9,304.8z"/>
<path fill="#3dccc2" d="M999.9,269.6 960.5,271.4 956.5,270.6 992.3,267.8z"/>
<path fill="#3dcc5a" d="M875.7,328.7 898.2,313.1 898.4,312.0 876.2,327.6z"/>
<path fill="#3dcc7b" d="M904.3,311.9 914.3,295.8 913.8,296.1 902.3,313.0z"/>
<path fill="#3dcca1" d="M928.4,284.0 924.2,284.1 925.9,287.7 931.3,287.6z"/>
<path fill="#3dccc7" d="M927.0,270.8 935.6,266.7 937.0,263.7 927.8,269.0z"/>
<path fill="#3da8cc" d="M854.4,253.3 828.8,237.8 815.3,243.2 844.9,257.2z"/>
<path fill="#3dcc92" d="M929.4,293.0 942.8,297.4 937.6,293.0 927.0,289.7z"/>
<path fill="#62cc3d" d="M763.7,350.9 788.3,352.2 789.7,353.3 765.3,353.0z"/>
<path fill="#3dc3cc" d="M931.8,266.5 937.4,261.2 942.8,253.6 935.6,261.6z"/>
<path fill="#3db0cc" d="M1041.1,246.7 1005.6,258.8 999.9,257.4 1033.2,245.0z"/>
<path fill="#3d70cc" d="M944.8,223.3 938.7,229.2 937.6,218.8 943.4,211.6z"/>
<path fill="#3d56cc" d="M1042.4,204.6 1056.2,206.7 1039.0,211.4 1026.9,209.9z"/>
<path fill="#3dcc4c" d="M931.3,318.4 946.7,337.7 951.1,336.2 933.3,317.7z"/>
<path fill="#3dbecc" d="M890.4,264.9 865.2,250.0 854.4,253.3 884.9,266.6z"/>
<path fill="#593dcc" d="M907.0,179.8 909.4,189.5 898.0,185.9 892.2,176.3z"/>
<path fill="#3dcc8d" d="M918.1,300.0 917.9,290.2 917.4,291.5 916.2,302.5z"/>
<path fill="#3dcc7b" d="M902.3,313.0 913.8,296.1 913.4,296.3 900.6,313.7z"/>
<path fill="#6dcc3d" d="M965.9,353.9 986.8,365.7 997.2,361.8 973.2,351.2z"/>
<path fill="#3dccc2" d="M929.0,272.6 931.4,272.6 941.6,268.4 937.4,268.5z"/>
<path fill="#3dcc41" d="M848.6,340.3 876.2,327.6 877.7,325.7 851.1,338.6z"/>
<path fill="#3dccac" d="M939.9,283.7 946.3,281.8 931.2,278.9 928.2,280.0z"/>
<path fill="#3dccc6" d="M972.5,266.7 946.2,270.4 940.3,270.9 961.1,267.4z"/>
<path fill="#3d65cc" d="M1087.5,211.1 1083.2,221.5 1072.6,220.6 1076.6,210.8z"/>
<path fill="#3dcca1" d="M932.3,288.7 941.9,289.2 933.2,284.7 927.1,284.5z"/>
<path fill="#3dccc1" d="M1005.6,272.2 963.4,272.5 960.5,271.4 999.9,269.6z"/>
<path fill="#4fcc3d" d="M818.6,349.0 848.6,340.3 851.1,338.6 822.3,347.8z"/>
<path fill="#78cc3d" d="M1020.3,367.3 1039.8,367.3 1053.1,360.0 1031.4,361.0z"/>
<path fill="#3dcc9e" d="M925.9,287.7 921.6,285.9 921.9,288.9 926.6,291.3z"/>
<path fill="#3dcc7c" d="M900.6,313.7 913.4,296.3 913.1,296.2 899.3,313.9z"/>
<path fill="#3dc7cc" d="M927.0,269.5 935.6,261.6 937.0,257.0 927.8,267.3z"/>
<path fill="#50cc3d" d="M1068.0,354.2 1074.2,344.4 1085.8,335.3 1079.2,345.3z"/>
<path fill="#3dcc93" d="M919.8,297.4 918.3,288.8 917.9,290.2 918.1,300.0z"/>
<path fill="#3dcca9" d="M836.9,277.8 804.2,284.3 795.7,289.9 830.9,281.8z"/>
<path fill="#3dcc6d" d="M1081.6,323.2 1066.1,310.2 1072.6,302.4 1088.8,314.3z"/>
<path fill="#3dccc2" d="M952.4,270.1 946.3,269.9 931.2,273.0 934.1,273.0z"/>
<path fill="#3dc4cc" d="M983.0,257.2 951.7,267.8 946.2,268.3 972.5,258.5z"/>
<path fill="#3dc3cc" d="M992.3,256.8 956.5,267.8 951.7,267.8 983.0,257.2z"/>
<path fill="#3dcc61" d="M876.2,327.6 898.4,312.0 899.1,310.3 877.7,325.7z"/>
<path fill="#3d9bcc" d="M970.8,237.1 976.7,237.4 955.5,249.4 951.7,249.3z"/>
<path fill="#3d98cc" d="M941.2,247.6 937.4,249.3 942.8,235.9 947.5,233.5z"/>
<path fill="#3dcc4e" d="M929.0,318.5 941.8,338.4 946.7,337.7 931.3,318.4z"/>
<path fill="#3dcc84" d="M922.8,294.7 937.4,310.9 937.2,308.4 922.8,293.6z"/>
<path fill="#52cc3d" d="M941.8,338.4 957.8,355.4 965.9,353.9 946.7,337.7z"/>
<path fill="#3dcc81" d="M922.8,295.7 937.1,313.2 937.4,310.9 922.8,294.7z"/>
<path fill="#3dcc7e" d="M899.3,313.9 913.1,296.2 912.8,295.8 898.5,313.7z"/>
<path fill="#3dc3cc" d="M962.4,256.6 949.5,263.7 938.1,267.5 946.3,262.5z"/>
<path fill="#3dcc88" d="M922.8,293.6 937.2,308.4 936.5,305.6 922.6,292.3z"/>
<path fill="#3db7cc" d="M932.8,264.4 933.2,262.9 944.8,249.1 944.1,252.1z"/>
<path fill="#3dccae" d="M926.5,279.7 923.8,280.4 928.4,284.0 933.0,282.7z"/>
<path fill="#3dcc9e" d="M927.0,289.7 937.6,293.0 932.3,288.7 924.5,286.4z"/>
<path fill="#3dbdcc" d="M931.4,266.4 932.8,264.4 944.1,252.1 941.6,256.2z"/>
<path fill="#3dcc7e" d="M922.5,296.5 936.3,315.1 937.1,313.2 922.8,295.7z"/>
<path fill="#3d70cc" d="M994.6,219.5 1009.3,217.2 990.3,226.3 978.7,228.5z"/>
<path fill="#3dccc7" d="M961.1,267.4 940.3,270.9 934.3,271.9 949.5,268.8z"/>
<path fill="#3dc6cc" d="M972.5,258.5 946.2,268.3 940.3,269.2 961.1,260.7z"/>
<path fill="#3dcc99" d="M921.0,294.6 918.6,287.2 918.3,288.8 919.8,297.4z"/>
<path fill="#3dcc8d" d="M922.6,292.3 936.5,305.6 935.3,302.6 922.3,290.9z"/>
<path fill="#3dc2cc" d="M999.9,257.4 960.5,268.2 956.5,267.8 992.3,256.8z"/>
<path fill="#3d83cc" d="M942.8,235.9 937.2,240.5 938.7,229.2 944.8,223.3z"/>
<path fill="#3d48cc" d="M798.3,206.2 795.3,193.2 776.8,200.5 780.3,213.3z"/>
<path fill="#3dcc7c" d="M922.2,297.0 935.0,316.6 936.3,315.1 922.5,296.5z"/>
<path fill="#3dcc50" d="M746.8,319.1 742.4,330.9 739.6,336.1 744.1,324.7z"/>
<path fill="#3dccc0" d="M1008.9,275.3 965.2,274.1 963.4,272.5 1005.6,272.2z"/>
<path fill="#3dccae" d="M933.2,284.7 939.9,283.7 928.2,280.0 925.1,280.5z"/>
<path fill="#3d84cc" d="M978.7,228.5 990.3,226.3 970.8,237.1 962.4,238.9z"/>
<path fill="#3dcc8e" d="M795.7,289.9 769.5,300.6 763.0,306.8 790.4,295.2z"/>
<path fill="#3dcc93" d="M922.3,290.9 935.3,302.6 933.6,299.5 921.9,289.3z"/>
<path fill="#3db2cc" d="M933.2,262.9 932.6,262.1 943.8,247.6 944.8,249.1z"/>
<path fill="#3dcc81" d="M898.5,313.7 912.8,295.8 912.8,295.3 898.2,313.1z"/>
<path fill="#3d5ecc" d="M1009.5,212.1 1026.9,209.9 1009.3,217.2 994.6,219.5z"/>
<path fill="#3dccbe" d="M879.9,272.9 844.9,273.6 836.9,277.8 875.8,275.0z"/>
<path fill="#3d96cc" d="M1073.3,236.8 1045.9,249.5 1041.1,246.7 1067.6,233.8z"/>
<path fill="#3dcc7b" d="M921.8,297.4 933.3,317.7 935.0,316.6 922.2,297.0z"/>
<path fill="#633dcc" d="M892.2,176.3 898.0,185.9 885.6,184.0 876.3,174.8z"/>
<path fill="#3dc2cc" d="M929.0,268.9 931.4,266.4 941.6,256.2 937.4,261.2z"/>
<path fill="#59cc3d" d="M789.7,353.3 818.6,349.0 822.3,347.8 794.5,352.9z"/>
<path fill="#56cc3d" d="M746.6,345.2 763.7,350.9 765.3,353.0 748.5,348.3z"/>
<path fill="#3dccc8" d="M925.1,272.7 931.8,269.9 935.6,266.7 927.0,270.8z"/>
<path fill="#3dbdcc" d="M956.0,253.9 952.4,257.9 934.1,266.9 935.8,264.8z"/>
<path fill="#3dcc50" d="M926.6,318.0 936.6,338.2 941.8,338.4 929.0,318.5z"/>
<path fill="#3db7cc" d="M957.0,251.0 956.0,253.9 935.8,264.8 936.3,263.4z"/>
<path fill="#3dbecc" d="M884.9,266.6 854.4,253.3 844.9,257.2 879.9,268.7z"/>
<path fill="#3dcc4b" d="M851.1,338.6 877.7,325.7 880.3,323.1 855.4,335.7z"/>
<path fill="#79cc3d" d="M986.8,365.7 1006.8,372.4 1020.3,367.3 997.2,361.8z"/>
<path fill="#3dccc6" d="M925.8,273.3 929.0,272.6 937.4,268.5 931.8,269.9z"/>
<path fill="#3dcca0" d="M921.7,291.8 918.8,285.6 918.6,287.2 921.0,294.6z"/>
<path fill="#3daecc" d="M1045.9,249.5 1008.9,261.1 1005.6,258.8 1041.1,246.7z"/>
<path fill="#3dcc99" d="M921.9,289.3 933.6,299.5 931.7,296.3 921.4,287.6z"/>
<path fill="#3dc7cc" d="M961.1,260.7 940.3,269.2 934.3,270.6 949.5,263.7z"/>
<path fill="#3d47cc" d="M1055.2,201.2 1070.4,204.1 1056.2,206.7 1042.4,204.6z"/>
<path fill="#3dcc7b" d="M921.3,297.5 931.3,318.4 933.3,317.7 921.8,297.4z"/>
<path fill="#3dcc69" d="M877.7,325.7 899.1,310.3 900.3,308.2 880.3,323.1z"/>
<path fill="#3dc1cc" d="M1005.6,258.8 963.4,269.1 960.5,268.2 999.9,257.4z"/>
<path fill="#3dccab" d="M1045.2,291.6 1008.5,283.2 1009.9,279.1 1047.3,285.7z"/>
<path fill="#3dcc84" d="M898.2,313.1 912.8,295.3 912.8,294.5 898.4,312.0z"/>
<path fill="#3db2cc" d="M955.5,249.4 957.0,251.0 936.3,263.4 935.5,262.6z"/>
<path fill="#3dc2cc" d="M952.4,257.9 946.3,262.5 931.2,269.3 934.1,266.9z"/>
<path fill="#3d4dcc" d="M1080.8,203.5 1087.5,211.1 1076.6,210.8 1070.4,204.1z"/>
<path fill="#3d7acc" d="M1089.6,224.2 1073.3,236.8 1067.6,233.8 1083.2,221.5z"/>
<path fill="#3dccab" d="M924.2,284.1 920.8,282.9 921.6,285.9 925.9,287.7z"/>
<path fill="#3dafcc" d="M932.6,262.1 931.1,262.1 941.2,247.6 943.8,247.6z"/>
<path fill="#3dccc6" d="M946.3,269.9 938.1,270.9 927.3,273.6 931.2,273.0z"/>
<path fill="#3dc8cc" d="M925.1,271.8 931.8,266.5 935.6,261.6 927.0,269.5z"/>
<path fill="#3dcc7c" d="M920.7,297.3 929.0,318.5 931.3,318.4 921.3,297.5z"/>
<path fill="#6bcc3d" d="M957.8,355.4 975.1,368.3 986.8,365.7 965.9,353.9z"/>
<path fill="#3d98cc" d="M962.4,238.9 970.8,237.1 951.7,249.3 946.3,250.6z"/>
<path fill="#3dcca0" d="M921.4,287.6 931.7,296.3 929.4,293.0 920.8,285.9z"/>
<path fill="#683dcc" d="M820.0,178.7 829.8,175.1 811.8,179.7 800.1,184.1z"/>
<path fill="#713dcc" d="M848.9,172.1 859.9,175.1 843.8,177.2 829.8,175.1z"/>
<path fill="#4ecc3d" d="M936.6,338.2 949.1,355.9 957.8,355.4 941.8,338.4z"/>
<path fill="#3dccc8" d="M949.5,268.8 934.3,271.9 928.3,273.2 938.1,270.9z"/>
<path fill="#3dccab" d="M924.5,286.4 932.3,288.7 927.1,284.5 922.1,283.1z"/>
<path fill="#3dccb2" d="M923.8,280.4 921.4,280.4 924.2,284.1 928.4,284.0z"/>
<path fill="#3d54cc" d="M934.0,209.4 929.1,220.8 924.8,213.9 927.8,201.3z"/>
<path fill="#3dccca" d="M917.8,276.6 918.6,264.9 913.8,264.9 917.8,276.6z"/>
<path fill="#3dcc88" d="M898.4,312.0 912.8,294.5 913.0,293.5 899.1,310.3z"/>
<path fill="#3dcc55" d="M924.1,317.1 931.3,337.2 936.6,338.2 926.6,318.0z"/>
<path fill="#3dccca" d="M917.8,276.6 913.8,264.9 908.3,265.3 917.8,276.6z"/>
<path fill="#3dc6cc" d="M925.8,271.6 929.0,268.9 937.4,261.2 931.8,266.5z"/>
<path fill="#3dcca7" d="M921.9,288.9 918.9,283.9 918.8,285.6 921.7,291.8z"/>
<path fill="#43cc3d" d="M822.3,347.8 851.1,338.6 855.4,335.7 828.4,345.2z"/>
<path fill="#3dcc7e" d="M920.1,296.9 926.6,318.0 929.0,318.5 920.7,297.3z"/>
<path fill="#3d4dcc" d="M1022.5,206.4 1042.4,204.6 1026.9,209.9 1009.5,212.1z"/>
<path fill="#3d64cc" d="M937.6,218.8 931.6,228.7 929.1,220.8 934.0,209.4z"/>
<path fill="#3dccca" d="M917.8,276.6 922.6,265.4 918.6,264.9 917.8,276.6z"/>
<path fill="#3dccc9" d="M917.8,276.6 908.3,265.3 902.4,266.2 917.8,276.6z"/>
<path fill="#6acc3d" d="M1039.8,367.3 1053.3,362.2 1068.0,354.2 1053.1,360.0z"/>
<path fill="#3da8cc" d="M844.9,257.2 815.3,243.2 804.2,249.1 836.9,261.4z"/>
<path fill="#3dccbf" d="M1009.9,279.1 965.7,275.9 965.2,274.1 1008.9,275.3z"/>
<path fill="#3d97cc" d="M937.4,249.3 933.0,252.3 937.2,240.5 942.8,235.9z"/>
<path fill="#3d45cc" d="M927.8,201.3 924.8,213.9 919.0,208.1 919.5,194.6z"/>
<path fill="#3dccb2" d="M927.1,284.5 933.2,284.7 925.1,280.5 922.2,280.5z"/>
<path fill="#3dcc49" d="M1074.2,344.4 1070.3,331.8 1081.6,323.2 1085.8,335.3z"/>
<path fill="#3dafcc" d="M951.7,249.3 955.5,249.4 935.5,262.6 933.8,262.5z"/>
<path fill="#3dcc72" d="M880.3,323.1 900.3,308.2 902.0,305.6 883.8,319.6z"/>
<path fill="#3dcacc" d="M917.8,276.6 918.6,261.8 913.8,261.5 917.8,276.6z"/>
<path fill="#3dcc8e" d="M1066.1,310.2 1039.9,297.9 1045.2,291.6 1072.6,302.4z"/>
<path fill="#3d8bcc" d="M815.3,243.2 793.4,228.1 779.8,235.3 804.2,249.1z"/>
<path fill="#3dcacc" d="M917.8,276.6 913.8,261.5 908.3,261.7 917.8,276.6z"/>
<path fill="#3dc8cc" d="M949.5,263.7 934.3,270.6 928.3,272.3 938.1,267.5z"/>
<path fill="#3dccca" d="M917.8,276.6 925.5,266.3 922.6,265.4 917.8,276.6z"/>
<path fill="#3dcca7" d="M920.8,285.9 929.4,293.0 927.0,289.7 920.2,284.1z"/>
<path fill="#3dcacc" d="M917.8,276.6 922.6,262.6 918.6,261.8 917.8,276.6z"/>
<path fill="#3dccc9" d="M917.8,276.6 902.4,266.2 896.4,267.4 917.8,276.6z"/>
<path fill="#3dcc81" d="M919.4,296.3 924.1,317.1 926.6,318.0 920.1,296.9z"/>
<path fill="#3dc6cc" d="M946.3,262.5 938.1,267.5 927.3,271.8 931.2,269.3z"/>
<path fill="#3dc9cc" d="M917.8,276.6 908.3,261.7 902.4,262.3 917.8,276.6z"/>
<path fill="#3d75cc" d="M938.7,229.2 932.4,237.3 931.6,228.7 937.6,218.8z"/>
<path fill="#3dcc8d" d="M899.1,310.3 913.0,293.5 913.3,292.3 900.3,308.2z"/>
<path fill="#3dc0cc" d="M1008.9,261.1 965.2,270.4 963.4,269.1 1005.6,258.8z"/>
<path fill="#3dcc57" d="M855.4,335.7 880.3,323.1 883.8,319.6 861.2,331.7z"/>
<path fill="#3dcacc" d="M917.8,276.6 925.5,263.8 922.6,262.6 917.8,276.6z"/>
<path fill="#3daccc" d="M931.1,262.1 929.0,262.9 937.4,249.3 941.2,247.6z"/>
<path fill="#433dcc" d="M919.5,194.6 919.0,208.1 912.0,203.5 909.4,189.5z"/>
<path fill="#3dcc5a" d="M921.7,315.5 926.1,335.3 931.3,337.2 924.1,317.1z"/>
<path fill="#3dccca" d="M917.8,276.6 927.3,267.5 925.5,266.3 917.8,276.6z"/>
<path fill="#3dc9cc" d="M917.8,276.6 902.4,262.3 896.4,263.4 917.8,276.6z"/>
<path fill="#3dccc9" d="M917.8,276.6 896.4,267.4 890.4,269.0 917.8,276.6z"/>
<path fill="#58cc3d" d="M765.3,353.0 789.7,353.3 794.5,352.9 771.0,353.4z"/>
<path fill="#3dcc84" d="M918.8,295.4 921.7,315.5 924.1,317.1 919.4,296.3z"/>
<path fill="#3dccbe" d="M875.8,275.0 836.9,277.8 830.9,281.8 872.6,277.2z"/>
<path fill="#3dcc70" d="M763.0,306.8 746.8,319.1 744.1,324.7 760.6,312.1z"/>
<path fill="#3dccaf" d="M921.6,285.9 918.8,282.1 918.9,283.9 921.9,288.9z"/>
<path fill="#3d83cc" d="M965.0,233.2 978.7,228.5 962.4,238.9 952.3,242.8z"/>
<path fill="#3d70cc" d="M977.3,224.8 994.6,219.5 978.7,228.5 965.0,233.2z"/>
<path fill="#3dcacc" d="M917.8,276.6 927.3,265.4 925.5,263.8 917.8,276.6z"/>
<path fill="#6c3dcc" d="M876.3,174.8 885.6,184.0 873.0,183.7 859.9,175.1z"/>
<path fill="#3dbecc" d="M879.9,268.7 844.9,257.2 836.9,261.4 875.8,270.8z"/>
<path fill="#3d5dcc" d="M1094.1,213.2 1089.6,224.2 1083.2,221.5 1087.5,211.1z"/>
<path fill="#3dcc93" d="M900.3,308.2 913.3,292.3 913.7,290.9 902.0,305.6z"/>
<path fill="#3dccaa" d="M830.9,281.8 795.7,289.9 790.4,295.2 827.1,285.7z"/>
<path fill="#523dcc" d="M795.3,193.2 800.1,184.1 782.3,191.0 776.8,200.5z"/>
<path fill="#3dccaf" d="M920.2,284.1 927.0,289.7 924.5,286.4 919.5,282.3z"/>
<path fill="#3dccca" d="M921.9,274.7 925.8,273.3 931.8,269.9 925.1,272.7z"/>
<path fill="#49cc3d" d="M931.3,337.2 940.3,355.1 949.1,355.9 936.6,338.2z"/>
<path fill="#3dccc3" d="M917.8,276.6 917.8,276.6 932.6,275.7 933.2,274.3z"/>
<path fill="#3d88cc" d="M937.2,240.5 931.3,246.7 932.4,237.3 938.7,229.2z"/>
<path fill="#3dcc7b" d="M883.8,319.6 902.0,305.6 903.9,302.5 888.0,315.3z"/>
<path fill="#40cc3d" d="M739.6,336.1 746.6,345.2 748.5,348.3 741.5,340.0z"/>
<path fill="#3daccc" d="M946.3,250.6 951.7,249.3 933.8,262.5 931.2,263.3z"/>
<path fill="#3dc9cc" d="M917.8,276.6 896.4,263.4 890.4,264.9 917.8,276.6z"/>
<path fill="#3dccc2" d="M917.8,276.6 917.8,276.6 931.1,277.2 932.6,275.7z"/>
<path fill="#3dcc88" d="M918.2,294.3 919.4,313.4 921.7,315.5 918.8,295.4z"/>
<path fill="#3dcccb" d="M917.8,276.6 927.8,269.0 927.3,267.5 917.8,276.6z"/>
<path fill="#3dccc5" d="M917.8,276.6 917.8,276.6 933.2,274.3 932.8,273.2z"/>
<path fill="#3dccc3" d="M935.5,276.1 936.3,274.7 917.8,276.6 917.8,276.6z"/>
<path fill="#3dccc9" d="M917.8,276.6 890.4,269.0 884.9,270.9 917.8,276.6z"/>
<path fill="#3d97cc" d="M952.3,242.8 962.4,238.9 946.3,250.6 939.9,253.4z"/>
<path fill="#3dccc2" d="M933.8,277.6 935.5,276.1 917.8,276.6 917.8,276.6z"/>
<path fill="#3dccc5" d="M936.3,274.7 935.8,273.6 917.8,276.6 917.8,276.6z"/>
<path fill="#3dccca" d="M938.1,270.9 928.3,273.2 922.8,274.8 927.3,273.6z"/>
<path fill="#3dccb8" d="M921.4,280.4 919.5,279.8 920.8,282.9 924.2,284.1z"/>
<path fill="#3dcbcc" d="M917.8,276.6 927.8,267.3 927.3,265.4 917.8,276.6z"/>
<path fill="#3dcc61" d="M919.4,313.4 921.3,332.4 926.1,335.3 921.7,315.5z"/>
<path fill="#3dcacc" d="M921.9,274.2 925.8,271.6 931.8,266.5 925.1,271.8z"/>
<path fill="#3dccc1" d="M917.8,276.6 917.8,276.6 929.0,278.6 931.1,277.2z"/>
<path fill="#3d6acc" d="M793.4,228.1 780.3,213.3 765.3,221.4 779.8,235.3z"/>
<path fill="#3d5dcc" d="M988.8,217.8 1009.5,212.1 994.6,219.5 977.3,224.8z"/>
<path fill="#3dccc7" d="M917.8,276.6 917.8,276.6 932.8,273.2 931.4,272.6z"/>
<path fill="#3dccb8" d="M922.1,283.1 927.1,284.5 922.2,280.5 919.8,279.8z"/>
<path fill="#3dccc1" d="M931.2,278.9 933.8,277.6 917.8,276.6 917.8,276.6z"/>
<path fill="#3daccc" d="M1047.3,253.3 1009.9,264.0 1008.9,261.1 1045.9,249.5z"/>
<path fill="#3dcc99" d="M902.0,305.6 913.7,290.9 914.2,289.2 903.9,302.5z"/>
<path fill="#78cc3d" d="M1006.8,372.4 1023.8,373.5 1039.8,367.3 1020.3,367.3z"/>
<path fill="#3dcc8d" d="M917.7,293.0 917.5,310.8 919.4,313.4 918.2,294.3z"/>
<path fill="#3dccc7" d="M935.8,273.6 934.1,273.0 917.8,276.6 917.8,276.6z"/>
<path fill="#4f3dcc" d="M909.4,189.5 912.0,203.5 904.0,200.2 898.0,185.9z"/>
<path fill="#4ccc3d" d="M794.5,352.9 822.3,347.8 828.4,345.2 802.4,350.7z"/>
<path fill="#3dc9cc" d="M917.8,276.6 890.4,264.9 884.9,266.6 917.8,276.6z"/>
<path fill="#3dcacc" d="M938.1,267.5 928.3,272.3 922.8,274.3 927.3,271.8z"/>
<path fill="#3dccbf" d="M1008.5,283.2 964.9,278.0 965.7,275.9 1009.9,279.1z"/>
<path fill="#3dccca" d="M956.5,270.6 917.8,276.6 917.8,276.6 951.7,270.3z"/>
<path fill="#3daccc" d="M929.0,262.9 926.5,264.4 933.0,252.3 937.4,249.3z"/>
<path fill="#3dccb7" d="M920.8,282.9 918.6,280.3 918.8,282.1 921.6,285.9z"/>
<path fill="#3dccca" d="M951.7,270.3 917.8,276.6 917.8,276.6 946.2,270.4z"/>
<path fill="#3dccc1" d="M917.8,276.6 917.8,276.6 926.5,279.7 929.0,278.6z"/>
<path fill="#3dcc64" d="M861.2,331.7 883.8,319.6 888.0,315.3 868.2,326.5z"/>
<path fill="#3dcccb" d="M917.8,276.6 927.0,270.8 927.8,269.0 917.8,276.6z"/>
<path fill="#67cc3d" d="M949.1,355.9 962.6,369.5 975.1,368.3 957.8,355.4z"/>
<path fill="#3dccca" d="M960.5,271.4 917.8,276.6 917.8,276.6 956.5,270.6z"/>
<path fill="#3dccb1" d="M915.5,294.6 917.8,276.6 917.8,276.6 914.9,295.3z"/>
<path fill="#3dccb1" d="M914.9,295.3 917.8,276.6 917.8,276.6 914.3,295.8z"/>
<path fill="#3dccc9" d="M917.8,276.6 884.9,270.9 879.9,272.9 917.8,276.6z"/>
<path fill="#3d3dcc" d="M1033.2,202.5 1055.2,201.2 1042.4,204.6 1022.5,206.4z"/>
<path fill="#3dccb2" d="M916.2,293.7 917.8,276.6 917.8,276.6 915.5,294.6z"/>
<path fill="#3dcc45" d="M828.4,345.2 855.4,335.7 861.2,331.7 836.7,341.0z"/>
<path fill="#3dccc1" d="M928.2,280.0 931.2,278.9 917.8,276.6 917.8,276.6z"/>
<path fill="#3dccb7" d="M919.5,282.3 924.5,286.4 922.1,283.1 918.9,280.4z"/>
<path fill="#3dccb0" d="M914.3,295.8 917.8,276.6 917.8,276.6 913.8,296.1z"/>
<path fill="#3dcc86" d="M888.0,315.3 903.9,302.5 906.2,299.0 892.8,310.2z"/>
<path fill="#403dcc" d="M1064.6,199.8 1080.8,203.5 1070.4,204.1 1055.2,201.2z"/>
<path fill="#3dccb3" d="M916.8,292.7 917.8,276.6 917.8,276.6 916.2,293.7z"/>
<path fill="#3dccc9" d="M917.8,276.6 917.8,276.6 931.4,272.6 929.0,272.6z"/>
<path fill="#3d9bcc" d="M933.0,252.3 928.4,256.5 931.3,246.7 937.2,240.5z"/>
<path fill="#3dcc93" d="M917.3,291.4 915.8,307.7 917.5,310.8 917.7,293.0z"/>
<path fill="#3dcccb" d="M946.2,270.4 917.8,276.6 917.8,276.6 940.3,270.9z"/>
<path fill="#3dcbcc" d="M917.8,276.6 927.0,269.5 927.8,267.3 917.8,276.6z"/>
<path fill="#3dccb0" d="M913.8,296.1 917.8,276.6 917.8,276.6 913.4,296.3z"/>
<path fill="#3dbfcc" d="M1009.9,264.0 965.7,272.0 965.2,270.4 1008.9,261.1z"/>
<path fill="#3dcacc" d="M956.5,267.8 917.8,276.6 917.8,276.6 951.7,267.8z"/>
<path fill="#3dcacc" d="M951.7,267.8 917.8,276.6 917.8,276.6 946.2,268.3z"/>
<path fill="#3dccb5" d="M917.4,291.5 917.8,276.6 917.8,276.6 916.8,292.7z"/>
<path fill="#3dcc69" d="M917.5,310.8 917.1,328.7 921.3,332.4 919.4,313.4z"/>
<path fill="#3d92cc" d="M1075.0,241.1 1047.3,253.3 1045.9,249.5 1073.3,236.8z"/>
<path fill="#3dccc9" d="M934.1,273.0 931.2,273.0 917.8,276.6 917.8,276.6z"/>
<path fill="#3dccb1" d="M913.4,296.3 917.8,276.6 917.8,276.6 913.1,296.2z"/>
<path fill="#3dcca0" d="M903.9,302.5 914.2,289.2 914.8,287.4 906.2,299.0z"/>
<path fill="#3dccca" d="M963.4,272.5 917.8,276.6 917.8,276.6 960.5,271.4z"/>
<path fill="#77cc3d" d="M975.1,368.3 991.8,376.0 1006.8,372.4 986.8,365.7z"/>
<path fill="#3dcacc" d="M960.5,268.2 917.8,276.6 917.8,276.6 956.5,267.8z"/>
<path fill="#3dccb7" d="M917.9,290.2 917.8,276.6 917.8,276.6 917.4,291.5z"/>
<path fill="#3dcbcc" d="M946.2,268.3 917.8,276.6 917.8,276.6 940.3,269.2z"/>
<path fill="#3dccb1" d="M913.1,296.2 917.8,276.6 917.8,276.6 912.8,295.8z"/>
<path fill="#3dccaa" d="M1039.9,297.9 1004.7,287.5 1008.5,283.2 1045.2,291.6z"/>
<path fill="#3dccb1" d="M917.8,276.6 922.5,296.5 922.8,295.7 917.8,276.6z"/>
<path fill="#3dccb2" d="M917.8,276.6 922.8,295.7 922.8,294.7 917.8,276.6z"/>
<path fill="#3daccc" d="M939.9,253.4 946.3,250.6 931.2,263.3 928.2,264.7z"/>
<path fill="#3dccb1" d="M917.8,276.6 922.2,297.0 922.5,296.5 917.8,276.6z"/>
<path fill="#3dccb3" d="M917.8,276.6 922.8,294.7 922.8,293.6 917.8,276.6z"/>
<path fill="#3dccc2" d="M917.8,276.6 917.8,276.6 923.8,280.4 926.5,279.7z"/>
<path fill="#3dc5cc" d="M917.8,276.6 917.8,276.6 933.2,262.9 932.8,264.4z"/>
<path fill="#3dc7cc" d="M917.8,276.6 917.8,276.6 932.8,264.4 931.4,266.4z"/>
<path fill="#3dccb0" d="M917.8,276.6 921.8,297.4 922.2,297.0 917.8,276.6z"/>
<path fill="#3dcccb" d="M940.3,270.9 917.8,276.6 917.8,276.6 934.3,271.9z"/>
<path fill="#3dccb5" d="M917.8,276.6 922.8,293.6 922.6,292.3 917.8,276.6z"/>
<path fill="#3dc9cc" d="M917.8,276.6 884.9,266.6 879.9,268.7 917.8,276.6z"/>
<path fill="#3dcc99" d="M917.0,289.7 914.6,304.1 915.8,307.7 917.3,291.4z"/>
<path fill="#3dccb8" d="M918.3,288.8 917.8,276.6 917.8,276.6 917.9,290.2z"/>
<path fill="#3dccb2" d="M912.8,295.8 917.8,276.6 917.8,276.6 912.8,295.3z"/>
<path fill="#3dccc2" d="M925.1,280.5 928.2,280.0 917.8,276.6 917.8,276.6z"/>
<path fill="#42cc3d" d="M926.1,335.3 931.6,353.0 940.3,355.1 931.3,337.2z"/>
<path fill="#3dccb0" d="M917.8,276.6 921.3,297.5 921.8,297.4 917.8,276.6z"/>
<path fill="#3dccb7" d="M917.8,276.6 922.6,292.3 922.3,290.9 917.8,276.6z"/>
<path fill="#3dcc6b" d="M1070.3,331.8 1055.8,317.9 1066.1,310.2 1081.6,323.2z"/>
<path fill="#3dc3cc" d="M917.8,276.6 917.8,276.6 932.6,262.1 933.2,262.9z"/>
<path fill="#3dc5cc" d="M936.3,263.4 935.8,264.8 917.8,276.6 917.8,276.6z"/>
<path fill="#3dc7cc" d="M935.8,264.8 934.1,266.9 917.8,276.6 917.8,276.6z"/>
<path fill="#3dcacc" d="M963.4,269.1 917.8,276.6 917.8,276.6 960.5,268.2z"/>
<path fill="#3dccb1" d="M917.8,276.6 920.7,297.3 921.3,297.5 917.8,276.6z"/>
<path fill="#3dcbcc" d="M940.3,269.2 917.8,276.6 917.8,276.6 934.3,270.6z"/>
<path fill="#3dccca" d="M965.2,274.1 917.8,276.6 917.8,276.6 963.4,272.5z"/>
<path fill="#3dc9cc" d="M917.8,276.6 917.8,276.6 931.4,266.4 929.0,268.9z"/>
<path fill="#3dccb3" d="M912.8,295.3 917.8,276.6 917.8,276.6 912.8,294.5z"/>
<path fill="#3dcccb" d="M917.8,276.6 925.1,272.7 927.0,270.8 917.8,276.6z"/>
<path fill="#3dccbb" d="M918.6,287.2 917.8,276.6 917.8,276.6 918.3,288.8z"/>
<path fill="#3dccb8" d="M917.8,276.6 922.3,290.9 921.9,289.3 917.8,276.6z"/>
<path fill="#3dccca" d="M917.8,276.6 917.8,276.6 929.0,272.6 925.8,273.3z"/>
<path fill="#3dccc9" d="M917.8,276.6 879.9,272.9 875.8,275.0 917.8,276.6z"/>
<path fill="#3dccb1" d="M917.8,276.6 920.1,296.9 920.7,297.3 917.8,276.6z"/>
<path fill="#3dcca7" d="M906.2,299.0 914.8,287.4 915.4,285.5 908.6,295.0z"/>
<path fill="#3dc3cc" d="M935.5,262.6 936.3,263.4 917.8,276.6 917.8,276.6z"/>
<path fill="#3dcc72" d="M915.8,307.7 913.6,324.1 917.1,328.7 917.5,310.8z"/>
<path fill="#3dc9cc" d="M934.1,266.9 931.2,269.3 917.8,276.6 917.8,276.6z"/>
<path fill="#3dcbcc" d="M917.8,276.6 925.1,271.8 927.0,269.5 917.8,276.6z"/>
<path fill="#3dcc92" d="M892.8,310.2 906.2,299.0 908.6,295.0 898.0,304.5z"/>
<path fill="#3dccca" d="M931.2,273.0 927.3,273.6 917.8,276.6 917.8,276.6z"/>
<path fill="#52cc3d" d="M1053.3,362.2 1058.8,352.7 1074.2,344.4 1068.0,354.2z"/>
<path fill="#3dccb5" d="M912.8,294.5 917.8,276.6 917.8,276.6 913.0,293.5z"/>
<path fill="#3dcca0" d="M916.8,287.7 913.9,300.1 914.6,304.1 917.0,289.7z"/>
<path fill="#3dccb2" d="M917.8,276.6 919.4,296.3 920.1,296.9 917.8,276.6z"/>
<path fill="#3dccbb" d="M917.8,276.6 921.9,289.3 921.4,287.6 917.8,276.6z"/>
<path fill="#3dc2cc" d="M917.8,276.6 917.8,276.6 931.1,262.1 932.6,262.1z"/>
<path fill="#3d4ccc" d="M998.9,212.2 1022.5,206.4 1009.5,212.1 988.8,217.8z"/>
<path fill="#3dccbd" d="M918.8,285.6 917.8,276.6 917.8,276.6 918.6,287.2z"/>
<path fill="#3dcc90" d="M790.4,295.2 763.0,306.8 760.6,312.1 788.3,299.9z"/>
<path fill="#3dcccb" d="M934.3,271.9 917.8,276.6 917.8,276.6 928.3,273.2z"/>
<path fill="#3dccbf" d="M919.5,279.8 918.2,278.5 918.6,280.3 920.8,282.9z"/>
<path fill="#3dccb3" d="M917.8,276.6 918.8,295.4 919.4,296.3 917.8,276.6z"/>
<path fill="#3dccc3" d="M917.8,276.6 917.8,276.6 921.4,280.4 923.8,280.4z"/>
<path fill="#3dccbf" d="M918.9,280.4 922.1,283.1 919.8,279.8 918.3,278.5z"/>
<path fill="#3dccb7" d="M913.0,293.5 917.8,276.6 917.8,276.6 913.3,292.3z"/>
<path fill="#3dcacc" d="M917.8,276.6 917.8,276.6 929.0,268.9 925.8,271.6z"/>
<path fill="#3d88cc" d="M950.7,240.2 965.0,233.2 952.3,242.8 941.9,248.3z"/>
<path fill="#3dc2cc" d="M933.8,262.5 935.5,262.6 917.8,276.6 917.8,276.6z"/>
<path fill="#3dccbe" d="M872.6,277.2 830.9,281.8 827.1,285.7 870.7,279.3z"/>
<path fill="#3dcc72" d="M868.2,326.5 888.0,315.3 892.8,310.2 876.3,320.3z"/>
<path fill="#3dccc3" d="M922.2,280.5 925.1,280.5 917.8,276.6 917.8,276.6z"/>
<path fill="#3dcacc" d="M965.2,270.4 917.8,276.6 917.8,276.6 963.4,269.1z"/>
<path fill="#3dccbd" d="M917.8,276.6 921.4,287.6 920.8,285.9 917.8,276.6z"/>
<path fill="#3dcbcc" d="M934.3,270.6 917.8,276.6 917.8,276.6 928.3,272.3z"/>
<path fill="#3d9bcc" d="M941.9,248.3 952.3,242.8 939.9,253.4 933.2,257.2z"/>
<path fill="#3daecc" d="M926.5,264.4 923.8,266.5 928.4,256.5 933.0,252.3z"/>
<path fill="#3dcacc" d="M931.2,269.3 927.3,271.8 917.8,276.6 917.8,276.6z"/>
<path fill="#3dccb5" d="M917.8,276.6 918.2,294.3 918.8,295.4 917.8,276.6z"/>
<path fill="#3dccc9" d="M965.7,275.9 917.8,276.6 917.8,276.6 965.2,274.1z"/>
<path fill="#3dcca7" d="M916.7,285.7 913.7,295.8 913.9,300.1 916.8,287.7z"/>
<path fill="#3dbecc" d="M875.8,270.8 836.9,261.4 830.9,265.7 872.6,273.1z"/>
<path fill="#3dc9cc" d="M917.8,276.6 879.9,268.7 875.8,270.8 917.8,276.6z"/>
<path fill="#3dccbf" d="M918.9,283.9 917.8,276.6 917.8,276.6 918.8,285.6z"/>
<path fill="#3dccb8" d="M913.3,292.3 917.8,276.6 917.8,276.6 913.7,290.9z"/>
<path fill="#3dccaf" d="M908.6,295.0 915.4,285.5 916.1,283.4 911.1,290.8z"/>
<path fill="#3dcc7b" d="M914.6,304.1 911.0,318.8 913.6,324.1 915.8,307.7z"/>
<path fill="#593dcc" d="M898.0,185.9 904.0,200.2 895.3,198.1 885.6,184.0z"/>
<path fill="#3dc1cc" d="M917.8,276.6 917.8,276.6 929.0,262.9 931.1,262.1z"/>
<path fill="#3dccb7" d="M917.8,276.6 917.7,293.0 918.2,294.3 917.8,276.6z"/>
<path fill="#4ccc3d" d="M748.5,348.3 765.3,353.0 771.0,353.4 754.8,349.7z"/>
<path fill="#3dccbf" d="M917.8,276.6 920.8,285.9 920.2,284.1 917.8,276.6z"/>
<path fill="#3d43cc" d="M1087.1,204.9 1094.1,213.2 1087.5,211.1 1080.8,203.5z"/>
<path fill="#3d72cc" d="M931.6,228.7 926.1,240.4 924.6,234.4 929.1,220.8z"/>
<path fill="#3d81cc" d="M932.4,237.3 926.6,247.0 926.1,240.4 931.6,228.7z"/>
<path fill="#763dcc" d="M829.8,175.1 843.8,177.2 828.8,180.8 811.8,179.7z"/>
<path fill="#3d75cc" d="M959.3,232.9 977.3,224.8 965.0,233.2 950.7,240.2z"/>
<path fill="#3dcc9e" d="M898.0,304.5 908.6,295.0 911.1,290.8 903.3,298.1z"/>
<path fill="#3dc1cc" d="M931.2,263.3 933.8,262.5 917.8,276.6 917.8,276.6z"/>
<path fill="#3dccbb" d="M913.7,290.9 917.8,276.6 917.8,276.6 914.2,289.2z"/>
<path fill="#3dccb8" d="M917.8,276.6 917.3,291.4 917.7,293.0 917.8,276.6z"/>
<path fill="#3dcccc" d="M917.8,276.6 921.9,274.7 925.1,272.7 917.8,276.6z"/>
<path fill="#3dcccb" d="M917.8,276.6 917.8,276.6 925.8,273.3 921.9,274.7z"/>
<path fill="#3da9cc" d="M836.9,261.4 804.2,249.1 795.7,255.3 830.9,265.7z"/>
<path fill="#3dccc9" d="M917.8,276.6 875.8,275.0 872.6,277.2 917.8,276.6z"/>
<path fill="#3daecc" d="M933.2,257.2 939.9,253.4 928.2,264.7 925.1,266.7z"/>
<path fill="#3dccaf" d="M916.8,283.5 914.0,291.2 913.7,295.8 916.7,285.7z"/>
<path fill="#3dccc2" d="M918.8,282.1 917.8,276.6 917.8,276.6 918.9,283.9z"/>
<path fill="#3dcccb" d="M927.3,273.6 922.8,274.8 917.8,276.6 917.8,276.6z"/>
<path fill="#3dcccc" d="M917.8,276.6 921.9,274.2 925.1,271.8 917.8,276.6z"/>
<path fill="#3d91cc" d="M931.3,246.7 925.9,254.1 926.6,247.0 932.4,237.3z"/>
<path fill="#3d64cc" d="M929.1,220.8 924.6,234.4 922.0,229.1 924.8,213.9z"/>
<path fill="#3dcccc" d="M928.3,273.2 917.8,276.6 917.8,276.6 922.8,274.8z"/>
<path fill="#3dccc2" d="M917.8,276.6 920.2,284.1 919.5,282.3 917.8,276.6z"/>
<path fill="#3dccc5" d="M917.8,276.6 917.8,276.6 919.5,279.8 921.4,280.4z"/>
<path fill="#3dcbcc" d="M917.8,276.6 917.8,276.6 925.8,271.6 921.9,274.2z"/>
<path fill="#3dcc56" d="M744.1,324.7 739.6,336.1 741.5,340.0 746.0,329.0z"/>
<path fill="#3dccbb" d="M917.8,276.6 917.0,289.7 917.3,291.4 917.8,276.6z"/>
<path fill="#3dccc5" d="M919.8,279.8 922.2,280.5 917.8,276.6 917.8,276.6z"/>
<path fill="#3d74cc" d="M1091.5,228.5 1075.0,241.1 1073.3,236.8 1089.6,224.2z"/>
<path fill="#3dcc86" d="M913.9,300.1 909.5,312.8 911.0,318.8 914.6,304.1z"/>
<path fill="#3dccbd" d="M914.2,289.2 917.8,276.6 917.8,276.6 914.8,287.4z"/>
<path fill="#3dc9cc" d="M965.7,272.0 917.8,276.6 917.8,276.6 965.2,270.4z"/>
<path fill="#3dcccc" d="M928.3,272.3 917.8,276.6 917.8,276.6 922.8,274.3z"/>
<path fill="#3dcbcc" d="M927.3,271.8 922.8,274.3 917.8,276.6 917.8,276.6z"/>
<path fill="#3dccb7" d="M911.1,290.8 916.1,283.4 916.7,281.2 913.5,286.2z"/>
<path fill="#3dcc41" d="M921.3,332.4 923.6,349.7 931.6,353.0 926.1,335.3z"/>
<path fill="#3d48cc" d="M780.3,213.3 776.8,200.5 761.4,208.8 765.3,221.4z"/>
<path fill="#3dc1cc" d="M917.8,276.6 917.8,276.6 926.5,264.4 929.0,262.9z"/>
<path fill="#3dcc54" d="M836.7,341.0 861.2,331.7 868.2,326.5 846.8,335.4z"/>
<path fill="#3dccbd" d="M917.8,276.6 916.8,287.7 917.0,289.7 917.8,276.6z"/>
<path fill="#733dcc" d="M859.9,175.1 873.0,183.7 860.5,184.9 843.8,177.2z"/>
<path fill="#3dccbf" d="M914.8,287.4 917.8,276.6 917.8,276.6 915.4,285.5z"/>
<path fill="#3dccc5" d="M918.6,280.3 917.8,276.6 917.8,276.6 918.8,282.1z"/>
<path fill="#3dccc9" d="M964.9,278.0 917.8,276.6 917.8,276.6 965.7,275.9z"/>
<path fill="#3dccb7" d="M917.0,281.2 914.8,286.4 914.0,291.2 916.8,283.5z"/>
<path fill="#3dc1cc" d="M928.2,264.7 931.2,263.3 917.8,276.6 917.8,276.6z"/>
<path fill="#3da1cc" d="M928.4,256.5 924.2,261.5 925.9,254.1 931.3,246.7z"/>
<path fill="#3dccc5" d="M917.8,276.6 919.5,282.3 918.9,280.4 917.8,276.6z"/>
<path fill="#3dccbe" d="M1004.7,287.5 963.0,280.1 964.9,278.0 1008.5,283.2z"/>
<path fill="#3dccab" d="M903.3,298.1 911.1,290.8 913.5,286.2 908.5,291.3z"/>
<path fill="#3dcc92" d="M913.7,295.8 909.0,306.2 909.5,312.8 913.9,300.1z"/>
<path fill="#3dcc81" d="M876.3,320.3 892.8,310.2 898.0,304.5 884.9,313.0z"/>
<path fill="#3dccbf" d="M917.8,276.6 916.7,285.7 916.8,287.7 917.8,276.6z"/>
<path fill="#3dc9cc" d="M917.8,276.6 875.8,270.8 872.6,273.1 917.8,276.6z"/>
<path fill="#3d57cc" d="M924.8,213.9 922.0,229.1 918.5,224.5 919.0,208.1z"/>
<path fill="#3dccc2" d="M915.4,285.5 917.8,276.6 917.8,276.6 916.1,283.4z"/>
<path fill="#3dccc2" d="M917.8,276.6 916.8,283.5 916.7,285.7 917.8,276.6z"/>
<path fill="#3dbfcc" d="M1008.5,267.5 964.9,273.9 965.7,272.0 1009.9,264.0z"/>
<path fill="#3dccc8" d="M917.8,276.6 917.8,276.6 918.2,278.5 919.5,279.8z"/>
<path fill="#3dccbf" d="M913.5,286.2 916.7,281.2 917.3,278.9 915.8,281.5z"/>
<path fill="#3dccc8" d="M918.3,278.5 919.8,279.8 917.8,276.6 917.8,276.6z"/>
<path fill="#3dcc9e" d="M914.0,291.2 909.7,299.1 909.0,306.2 913.7,295.8z"/>
<path fill="#61cc3d" d="M940.3,355.1 950.0,369.2 962.6,369.5 949.1,355.9z"/>
<path fill="#3dc2cc" d="M917.8,276.6 917.8,276.6 923.8,266.5 926.5,264.4z"/>
<path fill="#3dccbf" d="M917.4,278.9 916.1,281.5 914.8,286.4 917.0,281.2z"/>
<path fill="#3dccc8" d="M918.2,278.5 917.8,276.6 917.8,276.6 918.6,280.3z"/>
<path fill="#3dccc8" d="M917.8,276.6 918.9,280.4 918.3,278.5 917.8,276.6z"/>
<path fill="#3db2cc" d="M923.8,266.5 921.4,269.0 924.2,261.5 928.4,256.5z"/>
<path fill="#3dccc5" d="M916.1,283.4 917.8,276.6 917.8,276.6 916.7,281.2z"/>
<path fill="#3dc2cc" d="M925.1,266.7 928.2,264.7 917.8,276.6 917.8,276.6z"/>
<path fill="#3dccc5" d="M917.8,276.6 917.0,281.2 916.8,283.5 917.8,276.6z"/>
<path fill="#3d64cc" d="M967.4,226.7 988.8,217.8 977.3,224.8 959.3,232.9z"/>
<path fill="#3dcccc" d="M917.8,276.6 917.8,276.6 921.9,274.7 917.8,276.6z"/>
<path fill="#3dccc9" d="M917.8,276.6 872.6,277.2 870.7,279.3 917.8,276.6z"/>
<path fill="#3dccb8" d="M908.5,291.3 913.5,286.2 915.8,281.5 913.4,284.1z"/>
<path fill="#3dccab" d="M914.8,286.4 911.4,291.7 909.7,299.1 914.0,291.2z"/>
<path fill="#3dcccc" d="M922.8,274.8 917.8,276.6 917.8,276.6 917.8,276.6z"/>
<path fill="#3dcccc" d="M917.8,276.6 917.8,276.6 921.9,274.2 917.8,276.6z"/>
<path fill="#3dc9cc" d="M964.9,273.9 917.8,276.6 917.8,276.6 965.7,272.0z"/>
<path fill="#3dcccc" d="M922.8,274.3 917.8,276.6 917.8,276.6 917.8,276.6z"/>
<path fill="#6a3dcc" d="M800.1,184.1 811.8,179.7 795.8,185.9 782.3,191.0z"/>
<path fill="#4bcc3d" d="M771.0,353.4 794.5,352.9 802.4,350.7 780.4,352.0z"/>
<path fill="#3dccc8" d="M916.7,281.2 917.8,276.6 917.8,276.6 917.3,278.9z"/>
<path fill="#3ecc3d" d="M802.4,350.7 828.4,345.2 836.7,341.0 813.1,346.8z"/>
<path fill="#3dccc8" d="M917.8,276.6 917.4,278.9 917.0,281.2 917.8,276.6z"/>
<path fill="#3dccb8" d="M916.1,281.5 914.2,284.2 911.4,291.7 914.8,286.4z"/>
<path fill="#3db2cc" d="M927.1,261.9 933.2,257.2 925.1,266.7 922.2,269.1z"/>
<path fill="#3dccc8" d="M915.8,281.5 917.3,278.9 917.8,276.6 917.8,276.6z"/>
<path fill="#3dcc91" d="M884.9,313.0 898.0,304.5 903.3,298.1 893.7,304.9z"/>
<path fill="#3dccc8" d="M917.8,276.6 917.8,276.6 916.1,281.5 917.4,278.9z"/>
<path fill="#3dcccb" d="M917.8,276.6 917.8,276.6 917.8,276.6 918.2,278.5z"/>
<path fill="#3dcccb" d="M917.8,276.6 918.3,278.5 917.8,276.6 917.8,276.6z"/>
<path fill="#3dccab" d="M827.1,285.7 790.4,295.2 788.3,299.9 825.7,289.2z"/>
<path fill="#3dc3cc" d="M917.8,276.6 917.8,276.6 921.4,269.0 923.8,266.5z"/>
<path fill="#3da1cc" d="M932.3,255.1 941.9,248.3 933.2,257.2 927.1,261.9z"/>
<path fill="#3dccc5" d="M913.4,284.1 915.8,281.5 917.8,276.6 917.8,276.6z"/>
<path fill="#3dccc9" d="M963.0,280.1 917.8,276.6 917.8,276.6 964.9,278.0z"/>
<path fill="#3dc3cc" d="M922.2,269.1 925.1,266.7 917.8,276.6 917.8,276.6z"/>
<path fill="#3dcccb" d="M917.3,278.9 917.8,276.6 917.8,276.6 917.8,276.6z"/>
<path fill="#3dcccb" d="M917.8,276.6 917.8,276.6 917.4,278.9 917.8,276.6z"/>
<path fill="#3dccc5" d="M917.8,276.6 917.8,276.6 914.2,284.2 916.1,281.5z"/>
<path fill="#3dcc8c" d="M1055.8,317.9 1031.4,304.1 1039.9,297.9 1066.1,310.2z"/>
<path fill="#3dcc4b" d="M917.1,328.7 916.6,345.1 923.6,349.7 921.3,332.4z"/>
<path fill="#3d4bcc" d="M919.0,208.1 918.5,224.5 914.3,220.8 912.0,203.5z"/>
<path fill="#3d8ccc" d="M804.2,249.1 779.8,235.3 769.5,243.0 795.7,255.3z"/>
<path fill="#3dc5cc" d="M917.8,276.6 917.8,276.6 919.5,271.7 921.4,269.0z"/>
<path fill="#3dcbcc" d="M917.8,276.6 917.8,276.6 917.8,276.6 918.2,274.3z"/>
<path fill="#3dcbcc" d="M917.8,276.6 918.3,274.3 917.8,276.6 917.8,276.6z"/>
<path fill="#3dccc3" d="M910.5,286.5 913.4,284.1 917.8,276.6 917.8,276.6z"/>
<path fill="#3dc9cc" d="M917.8,276.6 872.6,273.1 870.7,275.2 917.8,276.6z"/>
<path fill="#3dc5cc" d="M919.8,271.7 922.2,269.1 917.8,276.6 917.8,276.6z"/>
<path fill="#3dcca1" d="M893.7,304.9 903.3,298.1 908.5,291.3 902.4,296.0z"/>
<path fill="#3dccc3" d="M917.8,276.6 917.8,276.6 911.8,286.7 914.2,284.2z"/>
<path fill="#3dabcc" d="M1045.2,258.0 1008.5,267.5 1009.9,264.0 1047.3,253.3z"/>
<path fill="#3dcbcc" d="M917.3,274.7 917.8,276.6 917.8,276.6 917.8,276.6z"/>
<path fill="#3dcbcc" d="M917.8,276.6 917.8,276.6 917.4,274.7 917.8,276.6z"/>
<path fill="#3dc8cc" d="M917.8,276.6 917.8,276.6 918.2,274.3 919.5,271.7z"/>
<path fill="#3d91cc" d="M937.6,248.7 950.7,240.2 941.9,248.3 932.3,255.1z"/>
<path fill="#3dc8cc" d="M918.3,274.3 919.8,271.7 917.8,276.6 917.8,276.6z"/>
<path fill="#3dccb2" d="M902.4,296.0 908.5,291.3 913.4,284.1 910.5,286.5z"/>
<path fill="#3db8cc" d="M921.4,269.0 919.5,271.7 920.8,266.8 924.2,261.5z"/>
<path fill="#3dc8cc" d="M918.2,274.3 917.8,276.6 917.8,276.6 918.6,272.0z"/>
<path fill="#3e3dcc" d="M1007.2,208.0 1033.2,202.5 1022.5,206.4 998.9,212.2z"/>
<path fill="#3dc8cc" d="M917.8,276.6 918.9,272.0 918.3,274.3 917.8,276.6z"/>
<path fill="#4b3dcc" d="M1041.1,200.3 1064.6,199.8 1055.2,201.2 1033.2,202.5z"/>
<path fill="#6acc3d" d="M1023.8,373.5 1035.5,369.1 1053.3,362.2 1039.8,367.3z"/>
<path fill="#3dcccc" d="M917.8,276.6 912.8,278.9 917.8,276.6 917.8,276.6z"/>
<path fill="#3dccc9" d="M917.8,276.6 870.7,279.3 869.9,281.2 917.8,276.6z"/>
<path fill="#3dcccc" d="M917.8,276.6 917.8,276.6 917.8,276.6 913.7,279.0z"/>
<path fill="#3dcccc" d="M917.8,276.6 912.8,278.4 917.8,276.6 917.8,276.6z"/>
<path fill="#3dabcc" d="M924.2,261.5 920.8,266.8 921.6,262.0 925.9,254.1z"/>
<path fill="#3db8cc" d="M922.1,267.0 927.1,261.9 922.2,269.1 919.8,271.7z"/>
<path fill="#3dc9cc" d="M963.0,276.0 917.8,276.6 917.8,276.6 964.9,273.9z"/>
<path fill="#3dcccc" d="M917.8,276.6 917.8,276.6 917.8,276.6 913.7,278.5z"/>
<path fill="#3dcc64" d="M846.8,335.4 868.2,326.5 876.3,320.3 858.3,328.4z"/>
<path fill="#3dc5cc" d="M918.6,272.0 917.8,276.6 917.8,276.6 918.8,269.7z"/>
<path fill="#3dccc2" d="M907.4,288.5 910.5,286.5 917.8,276.6 917.8,276.6z"/>
<path fill="#3dc5cc" d="M917.8,276.6 919.5,269.8 918.9,272.0 917.8,276.6z"/>
<path fill="#3dccb2" d="M914.2,284.2 911.8,286.7 907.2,296.7 911.4,291.7z"/>
<path fill="#3dc8cc" d="M916.7,272.8 917.8,276.6 917.8,276.6 917.3,274.7z"/>
<path fill="#3dc8cc" d="M917.8,276.6 917.4,274.7 917.0,272.9 917.8,276.6z"/>
<path fill="#3dbfcc" d="M919.5,271.7 918.2,274.3 918.6,272.0 920.8,266.8z"/>
<path fill="#3dccc2" d="M917.8,276.6 917.8,276.6 909.1,288.8 911.8,286.7z"/>
<path fill="#613dcc" d="M885.6,184.0 895.3,198.1 886.5,197.3 873.0,183.7z"/>
<path fill="#3d9ecc" d="M925.9,254.1 921.6,262.0 921.9,257.4 926.6,247.0z"/>
<path fill="#3dc8cc" d="M915.8,273.4 917.3,274.7 917.8,276.6 917.8,276.6z"/>
<path fill="#3dbfcc" d="M918.9,272.0 922.1,267.0 919.8,271.7 918.3,274.3z"/>
<path fill="#3dc8cc" d="M917.8,276.6 917.8,276.6 916.1,273.4 917.4,274.7z"/>
<path fill="#3dccbf" d="M870.7,279.3 827.1,285.7 825.7,289.2 869.9,281.2z"/>
<path fill="#3dc2cc" d="M918.8,269.7 917.8,276.6 917.8,276.6 918.9,267.5z"/>
<path fill="#3dc2cc" d="M917.8,276.6 920.2,267.7 919.5,269.8 917.8,276.6z"/>
<path fill="#3dcc57" d="M913.6,324.1 910.8,339.3 916.6,345.1 917.1,328.7z"/>
<path fill="#3dccc9" d="M959.8,282.4 917.8,276.6 917.8,276.6 963.0,280.1z"/>
<path fill="#3dbfcc" d="M918.9,267.5 917.8,276.6 917.8,276.6 918.8,265.5z"/>
<path fill="#3d81cc" d="M942.8,243.0 959.3,232.9 950.7,240.2 937.6,248.7z"/>
<path fill="#3d92cc" d="M926.6,247.0 921.9,257.4 921.7,253.1 926.1,240.4z"/>
<path fill="#3dabcc" d="M924.5,262.4 932.3,255.1 927.1,261.9 922.1,267.0z"/>
<path fill="#3dbecc" d="M872.6,273.1 830.9,265.7 827.1,270.0 870.7,275.2z"/>
<path fill="#3dc5cc" d="M916.1,270.9 917.8,276.6 917.8,276.6 916.7,272.8z"/>
<path fill="#3dcca1" d="M911.4,291.7 907.2,296.7 904.3,306.5 909.7,299.1z"/>
<path fill="#3dccc1" d="M904.4,289.9 907.4,288.5 917.8,276.6 917.8,276.6z"/>
<path fill="#3db7cc" d="M920.8,266.8 918.6,272.0 918.8,269.7 921.6,262.0z"/>
<path fill="#3dc9cc" d="M917.8,276.6 870.7,275.2 869.9,277.3 917.8,276.6z"/>
<path fill="#3dc5cc" d="M917.8,276.6 917.0,272.9 916.8,271.1 917.8,276.6z"/>
<path fill="#3dbfcc" d="M917.8,276.6 920.8,265.8 920.2,267.7 917.8,276.6z"/>
<path fill="#73cc3d" d="M962.6,369.5 975.7,378.1 991.8,376.0 975.1,368.3z"/>
<path fill="#3dbdcc" d="M918.8,265.5 917.8,276.6 917.8,276.6 918.6,263.5z"/>
<path fill="#3d54cc" d="M974.4,221.5 998.9,212.2 988.8,217.8 967.4,226.7z"/>
<path fill="#3dccc1" d="M917.8,276.6 917.8,276.6 906.6,290.3 909.1,288.8z"/>
<path fill="#3dcc48" d="M1058.8,352.7 1055.3,339.9 1070.3,331.8 1074.2,344.4z"/>
<path fill="#3d41cc" d="M912.0,203.5 914.3,220.8 909.5,217.9 904.0,200.2z"/>
<path fill="#3db7cc" d="M919.5,269.8 924.5,262.4 922.1,267.0 918.9,272.0z"/>
<path fill="#3dcccb" d="M912.8,278.9 908.3,281.4 917.8,276.6 917.8,276.6z"/>
<path fill="#3dcccc" d="M917.8,276.6 907.3,280.9 912.8,278.9 917.8,276.6z"/>
<path fill="#3dccc9" d="M917.8,276.6 869.9,281.2 870.4,282.8 917.8,276.6z"/>
<path fill="#3dbdcc" d="M917.8,276.6 921.4,264.0 920.8,265.8 917.8,276.6z"/>
<path fill="#3d86cc" d="M926.1,240.4 921.7,253.1 921.0,249.1 924.6,234.4z"/>
<path fill="#3dcc74" d="M760.6,312.1 744.1,324.7 746.0,329.0 762.3,316.4z"/>
<path fill="#3dc5cc" d="M913.4,272.7 915.8,273.4 917.8,276.6 917.8,276.6z"/>
<path fill="#3dbbcc" d="M918.6,263.5 917.8,276.6 917.8,276.6 918.3,261.8z"/>
<path fill="#3d56cc" d="M1096.0,217.1 1091.5,228.5 1089.6,224.2 1094.1,213.2z"/>
<path fill="#3dcccb" d="M917.8,276.6 917.8,276.6 913.7,279.0 909.8,281.6z"/>
<path fill="#3dc5cc" d="M917.8,276.6 917.8,276.6 914.2,272.8 916.1,273.4z"/>
<path fill="#3dc2cc" d="M915.4,269.1 917.8,276.6 917.8,276.6 916.1,270.9z"/>
<path fill="#3dcccc" d="M917.8,276.6 907.3,280.0 912.8,278.4 917.8,276.6z"/>
<path fill="#3dcc64" d="M911.0,318.8 906.5,332.4 910.8,339.3 913.6,324.1z"/>
<path fill="#3dcc91" d="M909.7,299.1 904.3,306.5 903.2,315.9 909.0,306.2z"/>
<path fill="#3dcccc" d="M913.7,279.0 917.8,276.6 917.8,276.6 910.5,281.4z"/>
<path fill="#3dcbcc" d="M912.8,278.4 908.3,279.6 917.8,276.6 917.8,276.6z"/>
<path fill="#3dc2cc" d="M917.8,276.6 916.8,271.1 916.7,269.3 917.8,276.6z"/>
<path fill="#3dafcc" d="M921.6,262.0 918.8,269.7 918.9,267.5 921.9,257.4z"/>
<path fill="#3dccae" d="M895.7,299.8 902.4,296.0 910.5,286.5 907.4,288.5z"/>
<path fill="#3dc9cc" d="M959.8,278.2 917.8,276.6 917.8,276.6 963.0,276.0z"/>
<path fill="#3dcca9" d="M1031.4,304.1 998.7,291.8 1004.7,287.5 1039.9,297.9z"/>
<path fill="#3dcbcc" d="M917.8,276.6 917.8,276.6 913.7,278.5 909.8,279.9z"/>
<path fill="#3dcccc" d="M913.7,278.5 917.8,276.6 917.8,276.6 910.5,280.5z"/>
<path fill="#3db8cc" d="M918.3,261.8 917.8,276.6 917.8,276.6 917.9,260.2z"/>
<path fill="#3dbbcc" d="M917.8,276.6 921.9,262.3 921.4,264.0 917.8,276.6z"/>
<path fill="#3dccc1" d="M901.8,290.7 904.4,289.9 917.8,276.6 917.8,276.6z"/>
<path fill="#3d9ecc" d="M927.0,258.2 937.6,248.7 932.3,255.1 924.5,262.4z"/>
<path fill="#3dcc75" d="M858.3,328.4 876.3,320.3 884.9,313.0 870.6,320.0z"/>
<path fill="#76cc3d" d="M991.8,376.0 1005.8,378.1 1023.8,373.5 1006.8,372.4z"/>
<path fill="#3dcc81" d="M909.0,306.2 903.2,315.9 904.0,324.5 909.5,312.8z"/>
<path fill="#3dcc72" d="M909.5,312.8 904.0,324.5 906.5,332.4 911.0,318.8z"/>
<path fill="#3dcc43" d="M741.5,340.0 748.5,348.3 754.8,349.7 748.1,342.1z"/>
<path fill="#3dbfcc" d="M914.8,267.3 917.8,276.6 917.8,276.6 915.4,269.1z"/>
<path fill="#4c3dcc" d="M1070.3,200.2 1087.1,204.9 1080.8,203.5 1064.6,199.8z"/>
<path fill="#3db7cc" d="M917.9,260.2 917.8,276.6 917.8,276.6 917.4,258.9z"/>
<path fill="#3dccc1" d="M917.8,276.6 917.8,276.6 904.5,291.1 906.6,290.3z"/>
<path fill="#59cc3d" d="M931.6,353.0 937.6,367.3 950.0,369.2 940.3,355.1z"/>
<path fill="#3d7bcc" d="M924.6,234.4 921.0,249.1 919.8,245.5 922.0,229.1z"/>
<path fill="#3dafcc" d="M920.2,267.7 927.0,258.2 924.5,262.4 919.5,269.8z"/>
<path fill="#3db8cc" d="M917.8,276.6 922.3,260.9 921.9,262.3 917.8,276.6z"/>
<path fill="#3dbfcc" d="M917.8,276.6 916.7,269.3 916.8,267.6 917.8,276.6z"/>
<path fill="#3dccc9" d="M955.7,284.5 917.8,276.6 917.8,276.6 959.8,282.4z"/>
<path fill="#3dccbe" d="M998.7,291.8 959.8,282.4 963.0,280.1 1004.7,287.5z"/>
<path fill="#3da7cc" d="M921.9,257.4 918.9,267.5 918.8,265.5 921.7,253.1z"/>
<path fill="#3dc9cc" d="M917.8,276.6 869.9,277.3 870.4,279.1 917.8,276.6z"/>
<path fill="#3db5cc" d="M917.4,258.9 917.8,276.6 917.8,276.6 916.8,257.8z"/>
<path fill="#3dccca" d="M908.3,281.4 904.4,283.9 917.8,276.6 917.8,276.6z"/>
<path fill="#3dccae" d="M911.8,286.7 909.1,288.8 902.6,300.9 907.2,296.7z"/>
<path fill="#3dcc9b" d="M883.3,310.4 893.7,304.9 902.4,296.0 895.7,299.8z"/>
<path fill="#3dcccb" d="M917.8,276.6 901.3,282.6 907.3,280.9 917.8,276.6z"/>
<path fill="#3dbdcc" d="M914.2,265.6 917.8,276.6 917.8,276.6 914.8,267.3z"/>
<path fill="#3dccca" d="M917.8,276.6 870.4,282.8 872.2,284.1 917.8,276.6z"/>
<path fill="#3dc3cc" d="M910.5,272.7 913.4,272.7 917.8,276.6 917.8,276.6z"/>
<path fill="#3d72cc" d="M947.6,237.9 967.4,226.7 959.3,232.9 942.8,243.0z"/>
<path fill="#3dbecc" d="M1004.7,271.4 963.0,276.0 964.9,273.9 1008.5,267.5z"/>
<path fill="#3dccc2" d="M900.1,290.6 901.8,290.7 917.8,276.6 917.8,276.6z"/>
<path fill="#3dcc88" d="M870.6,320.0 884.9,313.0 893.7,304.9 883.3,310.4z"/>
<path fill="#3dccca" d="M917.8,276.6 917.8,276.6 909.8,281.6 906.6,284.3z"/>
<path fill="#3db7cc" d="M917.8,276.6 922.6,259.7 922.3,260.9 917.8,276.6z"/>
<path fill="#3dbfcc" d="M913.5,270.1 916.7,272.8 917.3,274.7 915.8,273.4z"/>
<path fill="#3dc3cc" d="M917.8,276.6 917.8,276.6 911.8,272.8 914.2,272.8z"/>
<path fill="#3db3cc" d="M916.8,257.8 917.8,276.6 917.8,276.6 916.2,256.9z"/>
<path fill="#3dbfcc" d="M917.4,274.7 916.1,273.4 914.8,270.3 917.0,272.9z"/>
<path fill="#3dcbcc" d="M917.8,276.6 901.3,281.3 907.3,280.0 917.8,276.6z"/>
<path fill="#3d90cc" d="M1072.6,246.4 1045.2,258.0 1047.3,253.3 1075.0,241.1z"/>
<path fill="#3dbdcc" d="M917.8,276.6 916.8,267.6 917.0,266.0 917.8,276.6z"/>
<path fill="#3dcc4c" d="M813.1,346.8 836.7,341.0 846.8,335.4 826.1,341.1z"/>
<path fill="#3dccc2" d="M917.8,276.6 917.8,276.6 903.0,291.1 904.5,291.1z"/>
<path fill="#3dbbcc" d="M913.7,263.9 917.8,276.6 917.8,276.6 914.2,265.6z"/>
<path fill="#3db2cc" d="M916.2,256.9 917.8,276.6 917.8,276.6 915.5,256.3z"/>
<path fill="#3da0cc" d="M921.7,253.1 918.8,265.5 918.6,263.5 921.0,249.1z"/>
<path fill="#3db5cc" d="M917.8,276.6 922.8,258.7 922.6,259.7 917.8,276.6z"/>
<path fill="#523dcc" d="M776.8,200.5 782.3,191.0 767.6,199.0 761.4,208.8z"/>
<path fill="#3dcacc" d="M908.3,279.6 904.4,280.2 917.8,276.6 917.8,276.6z"/>
<path fill="#3d92cc" d="M929.4,254.2 942.8,243.0 937.6,248.7 927.0,258.2z"/>
<path fill="#3dcccb" d="M910.5,281.4 917.8,276.6 917.8,276.6 908.6,283.7z"/>
<path fill="#3dccc9" d="M904.4,283.9 901.5,286.3 917.8,276.6 917.8,276.6z"/>
<path fill="#3d72cc" d="M922.0,229.1 919.8,245.5 918.1,242.4 918.5,224.5z"/>
<path fill="#3dccc3" d="M899.3,289.8 900.1,290.6 917.8,276.6 917.8,276.6z"/>
<path fill="#3da7cc" d="M920.8,265.8 929.4,254.2 927.0,258.2 920.2,267.7z"/>
<path fill="#3db1cc" d="M915.5,256.3 917.8,276.6 917.8,276.6 914.9,255.9z"/>
<path fill="#3dc9cc" d="M955.7,280.3 917.8,276.6 917.8,276.6 959.8,278.2z"/>
<path fill="#3dcacc" d="M917.8,276.6 917.8,276.6 909.8,279.9 906.6,280.6z"/>
<path fill="#3db8cc" d="M913.3,262.3 917.8,276.6 917.8,276.6 913.7,263.9z"/>
<path fill="#3dbbcc" d="M917.8,276.6 917.0,266.0 917.3,264.4 917.8,276.6z"/>
<path fill="#3dcbcc" d="M910.5,280.5 917.8,276.6 917.8,276.6 908.6,282.4z"/>
<path fill="#3db3cc" d="M917.8,276.6 922.8,257.9 922.8,258.7 917.8,276.6z"/>
<path fill="#3dccc9" d="M917.8,276.6 917.8,276.6 906.6,284.3 904.2,286.8z"/>
<path fill="#3dcacc" d="M917.8,276.6 870.4,279.1 872.2,280.7 917.8,276.6z"/>
<path fill="#3dcccb" d="M917.8,276.6 895.3,284.0 901.3,282.6 917.8,276.6z"/>
<path fill="#3db1cc" d="M914.9,255.9 917.8,276.6 917.8,276.6 914.3,255.7z"/>
<path fill="#3dccca" d="M917.8,276.6 872.2,284.1 875.1,285.0 917.8,276.6z"/>
<path fill="#3dccc7" d="M901.5,286.3 899.8,288.4 917.8,276.6 917.8,276.6z"/>
<path fill="#3dccc5" d="M899.8,288.4 899.3,289.8 917.8,276.6 917.8,276.6z"/>
<path fill="#3dccc3" d="M917.8,276.6 917.8,276.6 902.4,290.3 903.0,291.1z"/>
<path fill="#3d6bcc" d="M779.8,235.3 765.3,221.4 754.0,230.0 769.5,243.0z"/>
<path fill="#3db7cc" d="M913.0,260.9 917.8,276.6 917.8,276.6 913.3,262.3z"/>
<path fill="#3db0cc" d="M914.3,255.7 917.8,276.6 917.8,276.6 913.8,255.8z"/>
<path fill="#423dcc" d="M904.0,200.2 909.5,217.9 904.3,216.0 895.3,198.1z"/>
<path fill="#3dc2cc" d="M907.4,273.2 910.5,272.7 917.8,276.6 917.8,276.6z"/>
<path fill="#3db2cc" d="M917.8,276.6 922.8,257.4 922.8,257.9 917.8,276.6z"/>
<path fill="#3db8cc" d="M917.8,276.6 917.3,264.4 917.7,263.0 917.8,276.6z"/>
<path fill="#3d99cc" d="M921.0,249.1 918.6,263.5 918.3,261.8 919.8,245.5z"/>
<path fill="#3dccc9" d="M950.7,286.6 917.8,276.6 917.8,276.6 955.7,284.5z"/>
<path fill="#3db5cc" d="M912.8,259.6 917.8,276.6 917.8,276.6 913.0,260.9z"/>
<path fill="#3dcbcc" d="M917.8,276.6 895.3,282.3 901.3,281.3 917.8,276.6z"/>
<path fill="#3db0cc" d="M913.8,255.8 917.8,276.6 917.8,276.6 913.4,256.2z"/>
<path fill="#3dccc7" d="M917.8,276.6 917.8,276.6 904.2,286.8 902.8,288.8z"/>
<path fill="#3dccc5" d="M917.8,276.6 917.8,276.6 902.8,288.8 902.4,290.3z"/>
<path fill="#3dc2cc" d="M917.8,276.6 917.8,276.6 909.1,273.5 911.8,272.8z"/>
<path fill="#3db3cc" d="M912.8,258.5 917.8,276.6 917.8,276.6 912.8,259.6z"/>
<path fill="#3db1cc" d="M913.4,256.2 917.8,276.6 917.8,276.6 913.1,256.7z"/>
<path fill="#3dccac" d="M889.3,302.6 895.7,299.8 907.4,288.5 904.4,289.9z"/>
<path fill="#3db2cc" d="M912.8,257.5 917.8,276.6 917.8,276.6 912.8,258.5z"/>
<path fill="#3db1cc" d="M913.1,256.7 917.8,276.6 917.8,276.6 912.8,257.5z"/>
<path fill="#3daacc" d="M830.9,265.7 795.7,255.3 790.4,261.6 827.1,270.0z"/>
<path fill="#3db1cc" d="M917.8,276.6 922.5,257.0 922.8,257.4 917.8,276.6z"/>
<path fill="#3dcccb" d="M917.8,276.6 889.4,284.9 895.3,284.0 917.8,276.6z"/>
<path fill="#3db7cc" d="M917.8,276.6 917.7,263.0 918.2,261.7 917.8,276.6z"/>
<path fill="#3dccca" d="M917.8,276.6 875.1,285.0 879.1,285.4 917.8,276.6z"/>
<path fill="#773dcc" d="M843.8,177.2 860.5,184.9 848.8,187.5 828.8,180.8z"/>
<path fill="#3dcacc" d="M917.8,276.6 872.2,280.7 875.1,281.8 917.8,276.6z"/>
<path fill="#3da0cc" d="M921.4,264.0 931.7,250.7 929.4,254.2 920.8,265.8z"/>
<path fill="#3db1cc" d="M917.8,276.6 922.2,256.9 922.5,257.0 917.8,276.6z"/>
<path fill="#3dc9cc" d="M904.4,280.2 901.5,280.2 917.8,276.6 917.8,276.6z"/>
<path fill="#3dcc92" d="M788.3,299.9 760.6,312.1 762.3,316.4 789.7,303.7z"/>
<path fill="#3d69cc" d="M918.5,224.5 918.1,242.4 916.2,239.8 914.3,220.8z"/>
<path fill="#3db5cc" d="M917.8,276.6 918.2,261.7 918.8,260.5 917.8,276.6z"/>
<path fill="#3dccca" d="M917.8,276.6 883.9,285.4 889.4,284.9 917.8,276.6z"/>
<path fill="#3dccca" d="M917.8,276.6 879.1,285.4 883.9,285.4 917.8,276.6z"/>
<path fill="#3dccbf" d="M869.9,281.2 825.7,289.2 826.7,292.1 870.4,282.8z"/>
<path fill="#3db0cc" d="M917.8,276.6 921.8,257.1 922.2,256.9 917.8,276.6z"/>
<path fill="#3dcccb" d="M908.6,283.7 917.8,276.6 917.8,276.6 907.8,285.9z"/>
<path fill="#3dcbcc" d="M917.8,276.6 889.4,282.8 895.3,282.3 917.8,276.6z"/>
<path fill="#3d93cc" d="M919.8,245.5 918.3,261.8 917.9,260.2 918.1,242.4z"/>
<path fill="#3dcc9b" d="M907.2,296.7 902.6,300.9 898.4,312.7 904.3,306.5z"/>
<path fill="#3dc9cc" d="M917.8,276.6 917.8,276.6 906.6,280.6 904.2,280.6z"/>
<path fill="#3db3cc" d="M917.8,276.6 918.8,260.5 919.4,259.5 917.8,276.6z"/>
<path fill="#40cc3d" d="M754.8,349.7 771.0,353.4 780.4,352.0 765.2,349.1z"/>
<path fill="#3d86cc" d="M931.7,250.7 947.6,237.9 942.8,243.0 929.4,254.2z"/>
<path fill="#3db0cc" d="M917.8,276.6 921.3,257.4 921.8,257.1 917.8,276.6z"/>
<path fill="#3db7cc" d="M911.1,266.8 916.1,270.9 916.7,272.8 913.5,270.1z"/>
<path fill="#3dc1cc" d="M904.4,274.3 907.4,273.2 917.8,276.6 917.8,276.6z"/>
<path fill="#3d45cc" d="M980.2,217.5 1007.2,208.0 998.9,212.2 974.4,221.5z"/>
<path fill="#3db2cc" d="M917.8,276.6 919.4,259.5 920.1,258.6 917.8,276.6z"/>
<path fill="#3dcc3d" d="M780.4,352.0 802.4,350.7 813.1,346.8 793.2,348.6z"/>
<path fill="#3dc9cc" d="M950.7,282.3 917.8,276.6 917.8,276.6 955.7,280.3z"/>
<path fill="#3db1cc" d="M917.8,276.6 920.7,257.9 921.3,257.4 917.8,276.6z"/>
<path fill="#3db1cc" d="M917.8,276.6 920.1,258.6 920.7,257.9 917.8,276.6z"/>
<path fill="#3dcacc" d="M917.8,276.6 875.1,281.8 879.1,282.6 917.8,276.6z"/>
<path fill="#673dcc" d="M873.0,183.7 886.5,197.3 877.8,197.8 860.5,184.9z"/>
<path fill="#3dcbcc" d="M908.6,282.4 917.8,276.6 917.8,276.6 907.8,284.2z"/>
<path fill="#3d64cc" d="M951.8,233.6 974.4,221.5 967.4,226.7 947.6,237.9z"/>
<path fill="#3dc1cc" d="M917.8,276.6 917.8,276.6 906.6,274.6 909.1,273.5z"/>
<path fill="#3dcacc" d="M917.8,276.6 883.9,282.9 889.4,282.8 917.8,276.6z"/>
<path fill="#3db7cc" d="M917.0,272.9 914.8,270.3 914.0,267.3 916.8,271.1z"/>
<path fill="#3dccac" d="M909.1,288.8 906.6,290.3 898.2,303.9 902.6,300.9z"/>
<path fill="#3dcacc" d="M917.8,276.6 879.1,282.6 883.9,282.9 917.8,276.6z"/>
<path fill="#3dbfcc" d="M870.7,275.2 827.1,270.0 825.7,274.1 869.9,277.3z"/>
<path fill="#3dccca" d="M907.3,280.9 897.5,285.7 908.3,281.4 912.8,278.9z"/>
<path fill="#3dccc9" d="M945.2,288.3 917.8,276.6 917.8,276.6 950.7,286.6z"/>
<path fill="#4c3dcc" d="M1013.3,205.4 1041.1,200.3 1033.2,202.5 1007.2,208.0z"/>
<path fill="#4fcc3d" d="M923.6,349.7 926.2,363.7 937.6,367.3 931.6,353.0z"/>
<path fill="#3dc7cc" d="M901.5,280.2 899.8,279.6 917.8,276.6 917.8,276.6z"/>
<path fill="#3d8dcc" d="M918.1,242.4 917.9,260.2 917.4,258.9 916.2,239.8z"/>
<path fill="#783dcc" d="M811.8,179.7 828.8,180.8 815.3,185.9 795.8,185.9z"/>
<path fill="#3d99cc" d="M921.9,262.3 933.6,247.6 931.7,250.7 921.4,264.0z"/>
<path fill="#3dccac" d="M825.7,289.2 788.3,299.9 789.7,303.7 826.7,292.1z"/>
<path fill="#3dc1cc" d="M901.8,275.6 904.4,274.3 917.8,276.6 917.8,276.6z"/>
<path fill="#3db8cc" d="M908.5,268.7 913.5,270.1 915.8,273.4 913.4,272.7z"/>
<path fill="#3dc7cc" d="M917.8,276.6 917.8,276.6 904.2,280.6 902.8,280.0z"/>
<path fill="#3dcc5d" d="M826.1,341.1 846.8,335.4 858.3,328.4 841.0,333.7z"/>
<path fill="#3dcc6a" d="M1055.3,339.9 1042.2,325.1 1055.8,317.9 1070.3,331.8z"/>
<path fill="#3dc1cc" d="M917.8,276.6 917.8,276.6 904.5,276.0 906.6,274.6z"/>
<path fill="#3dccca" d="M909.8,281.6 913.7,279.0 910.5,281.4 903.8,286.7z"/>
<path fill="#3d61cc" d="M914.3,220.8 916.2,239.8 913.9,237.7 909.5,217.9z"/>
<path fill="#3dcccb" d="M907.8,285.9 917.8,276.6 917.8,276.6 908.3,287.8z"/>
<path fill="#3db8cc" d="M916.1,273.4 914.2,272.8 911.4,269.1 914.8,270.3z"/>
<path fill="#3dcacc" d="M907.3,280.0 897.5,282.3 908.3,279.6 912.8,278.4z"/>
<path fill="#3dc5cc" d="M899.8,279.6 899.3,278.5 917.8,276.6 917.8,276.6z"/>
<path fill="#3dc2cc" d="M900.1,277.1 901.8,275.6 917.8,276.6 917.8,276.6z"/>
<path fill="#3dcc97" d="M873.2,314.3 883.3,310.4 895.7,299.8 889.3,302.6z"/>
<path fill="#3dc9cc" d="M945.2,284.2 917.8,276.6 917.8,276.6 950.7,282.3z"/>
<path fill="#3dc3cc" d="M899.3,278.5 900.1,277.1 917.8,276.6 917.8,276.6z"/>
<path fill="#3dc5cc" d="M917.8,276.6 917.8,276.6 902.8,280.0 902.4,278.9z"/>
<path fill="#3dcbcc" d="M907.8,284.2 917.8,276.6 917.8,276.6 908.3,285.7z"/>
<path fill="#3d88cc" d="M916.2,239.8 917.4,258.9 916.8,257.8 913.9,237.7z"/>
<path fill="#3dc2cc" d="M917.8,276.6 917.8,276.6 903.0,277.5 904.5,276.0z"/>
<path fill="#3dccc9" d="M939.2,289.8 917.8,276.6 917.8,276.6 945.2,288.3z"/>
<path fill="#3dccac" d="M883.9,303.9 889.3,302.6 904.4,289.9 901.8,290.7z"/>
<path fill="#403dcc" d="M1089.0,208.0 1096.0,217.1 1094.1,213.2 1087.1,204.9z"/>
<path fill="#3d7bcc" d="M933.6,247.6 951.8,233.6 947.6,237.9 931.7,250.7z"/>
<path fill="#3dcc88" d="M904.3,306.5 898.4,312.7 896.9,324.0 903.2,315.9z"/>
<path fill="#3dc3cc" d="M917.8,276.6 917.8,276.6 902.4,278.9 903.0,277.5z"/>
<path fill="#493dcc" d="M895.3,198.1 904.3,216.0 899.0,215.0 886.5,197.3z"/>
<path fill="#3dcacc" d="M909.8,279.9 913.7,278.5 910.5,280.5 903.8,283.3z"/>
<path fill="#3dafcc" d="M908.6,263.5 915.4,269.1 916.1,270.9 911.1,266.8z"/>
<path fill="#52cc3d" d="M1035.5,369.1 1040.3,360.0 1058.8,352.7 1053.3,362.2z"/>
<path fill="#3daacc" d="M1039.9,263.3 1004.7,271.4 1008.5,267.5 1045.2,258.0z"/>
<path fill="#3d93cc" d="M922.3,260.9 935.3,245.0 933.6,247.6 921.9,262.3z"/>
<path fill="#3dcc5d" d="M746.0,329.0 741.5,340.0 748.1,342.1 752.4,331.7z"/>
<path fill="#3dccbe" d="M990.7,296.0 955.7,284.5 959.8,282.4 998.7,291.8z"/>
<path fill="#6ccc3d" d="M950.0,369.2 959.3,378.4 975.7,378.1 962.6,369.5z"/>
<path fill="#3dccca" d="M908.3,287.8 917.8,276.6 917.8,276.6 910.1,289.4z"/>
<path fill="#3dcc70" d="M841.0,333.7 858.3,328.4 870.6,320.0 856.9,324.7z"/>
<path fill="#3dcc83" d="M856.9,324.7 870.6,320.0 883.3,310.4 873.2,314.3z"/>
<path fill="#3dafcc" d="M916.8,271.1 914.0,267.3 913.7,264.3 916.7,269.3z"/>
<path fill="#3d70cc" d="M1088.8,234.1 1072.6,246.4 1075.0,241.1 1091.5,228.5z"/>
<path fill="#3dbecc" d="M998.7,275.4 959.8,278.2 963.0,276.0 1004.7,271.4z"/>
<path fill="#3d84cc" d="M913.9,237.7 916.8,257.8 916.2,256.9 911.5,236.1z"/>
<path fill="#583dcc" d="M1045.9,199.9 1070.3,200.2 1064.6,199.8 1041.1,200.3z"/>
<path fill="#3dc9cc" d="M939.2,285.8 917.8,276.6 917.8,276.6 945.2,284.2z"/>
<path fill="#3dccc9" d="M933.2,290.9 917.8,276.6 917.8,276.6 939.2,289.8z"/>
<path fill="#3dcacc" d="M908.3,285.7 917.8,276.6 917.8,276.6 910.1,286.9z"/>
<path fill="#3d5acc" d="M909.5,217.9 913.9,237.7 911.5,236.1 904.3,216.0z"/>
<path fill="#43cc3d" d="M916.6,345.1 916.1,358.6 926.2,363.7 923.6,349.7z"/>
<path fill="#3dccac" d="M906.6,290.3 904.5,291.1 894.4,305.6 898.2,303.9z"/>
<path fill="#3dccca" d="M910.1,289.4 917.8,276.6 917.8,276.6 913.0,290.6z"/>
<path fill="#3d57cc" d="M955.3,230.1 980.2,217.5 974.4,221.5 951.8,233.6z"/>
<path fill="#3dccc0" d="M870.4,282.8 826.7,292.1 830.0,294.4 872.2,284.1z"/>
<path fill="#3d8dcc" d="M922.6,259.7 936.5,242.9 935.3,245.0 922.3,260.9z"/>
<path fill="#3dcc75" d="M903.2,315.9 896.9,324.0 898.0,334.4 904.0,324.5z"/>
<path fill="#3dccc9" d="M927.3,291.5 917.8,276.6 917.8,276.6 933.2,290.9z"/>
<path fill="#3dccc6" d="M897.5,285.7 889.3,290.7 904.4,283.9 908.3,281.4z"/>
<path fill="#3d81cc" d="M911.5,236.1 916.2,256.9 915.5,256.3 909.0,235.2z"/>
<path fill="#3dc9cc" d="M933.2,287.0 917.8,276.6 917.8,276.6 939.2,285.8z"/>
<path fill="#3dccca" d="M913.0,290.6 917.8,276.6 917.8,276.6 917.0,291.4z"/>
<path fill="#3da7cc" d="M906.2,260.2 914.8,267.3 915.4,269.1 908.6,263.5z"/>
<path fill="#3dcacc" d="M910.1,286.9 917.8,276.6 917.8,276.6 913.0,287.8z"/>
<path fill="#3dccc8" d="M901.3,282.6 886.1,289.5 897.5,285.7 907.3,280.9z"/>
<path fill="#3dccca" d="M921.8,291.7 917.8,276.6 917.8,276.6 927.3,291.5z"/>
<path fill="#3dcc8b" d="M1042.2,325.1 1020.3,310.0 1031.4,304.1 1055.8,317.9z"/>
<path fill="#3d8ecc" d="M795.7,255.3 769.5,243.0 763.0,250.8 790.4,261.6z"/>
<path fill="#3dccca" d="M917.0,291.4 917.8,276.6 917.8,276.6 921.8,291.7z"/>
<path fill="#3d72cc" d="M935.3,245.0 955.3,230.1 951.8,233.6 933.6,247.6z"/>
<path fill="#3dccaf" d="M880.1,303.8 883.9,303.9 901.8,290.7 900.1,290.6z"/>
<path fill="#3d49cc" d="M765.3,221.4 761.4,208.8 749.8,217.9 754.0,230.0z"/>
<path fill="#3db2cc" d="M902.4,268.5 908.5,268.7 913.4,272.7 910.5,272.7z"/>
<path fill="#3dcc45" d="M910.8,339.3 907.8,351.9 916.1,358.6 916.6,345.1z"/>
<path fill="#3dcc97" d="M902.6,300.9 898.2,303.9 892.8,317.3 898.4,312.7z"/>
<path fill="#3dbfcc" d="M869.9,277.3 825.7,274.1 826.7,277.9 870.4,279.1z"/>
<path fill="#3dcca8" d="M1020.3,310.0 990.7,296.0 998.7,291.8 1031.4,304.1z"/>
<path fill="#6a3dcc" d="M782.3,191.0 795.8,185.9 782.5,193.2 767.6,199.0z"/>
<path fill="#3dc9cc" d="M927.3,287.9 917.8,276.6 917.8,276.6 933.2,287.0z"/>
<path fill="#3dcacc" d="M913.0,287.8 917.8,276.6 917.8,276.6 917.0,288.3z"/>
<path fill="#3dcc64" d="M904.0,324.5 898.0,334.4 901.6,343.8 906.5,332.4z"/>
<path fill="#3dcc4d" d="M793.2,348.6 813.1,346.8 826.1,341.1 808.7,343.3z"/>
<path fill="#3d7ecc" d="M909.0,235.2 915.5,256.3 914.9,255.9 906.6,234.7z"/>
<path fill="#433dcc" d="M984.5,214.6 1013.3,205.4 1007.2,208.0 980.2,217.5z"/>
<path fill="#3da7cc" d="M916.7,269.3 913.7,264.3 913.9,261.4 916.8,267.6z"/>
<path fill="#3dccc6" d="M906.6,284.3 909.8,281.6 903.8,286.7 898.2,292.0z"/>
<path fill="#3dcacc" d="M921.8,288.3 917.8,276.6 917.8,276.6 927.3,287.9z"/>
<path fill="#3d55cc" d="M904.3,216.0 911.5,236.1 909.0,235.2 899.0,215.0z"/>
<path fill="#3d88cc" d="M922.8,258.7 937.2,241.2 936.5,242.9 922.6,259.7z"/>
<path fill="#3dcacc" d="M917.0,288.3 917.8,276.6 917.8,276.6 921.8,288.3z"/>
<path fill="#3dcc54" d="M906.5,332.4 901.6,343.8 907.8,351.9 910.8,339.3z"/>
<path fill="#3db2cc" d="M914.2,272.8 911.8,272.8 907.2,269.2 911.4,269.1z"/>
<path fill="#3dabcc" d="M903.3,264.5 911.1,266.8 913.5,270.1 908.5,268.7z"/>
<path fill="#3dc8cc" d="M901.3,281.3 886.1,284.4 897.5,282.3 907.3,280.0z"/>
<path fill="#4e3dcc" d="M886.5,197.3 899.0,215.0 893.8,214.8 877.8,197.8z"/>
<path fill="#71cc3d" d="M975.7,378.1 986.7,381.1 1005.8,378.1 991.8,376.0z"/>
<path fill="#68cc3d" d="M1005.8,378.1 1015.6,374.5 1035.5,369.1 1023.8,373.5z"/>
<path fill="#3da0cc" d="M903.9,256.9 914.2,265.6 914.8,267.3 906.2,260.2z"/>
<path fill="#3dcc98" d="M864.8,316.1 873.2,314.3 889.3,302.6 883.9,303.9z"/>
<path fill="#6b3dcc" d="M860.5,184.9 877.8,197.8 869.7,199.3 848.8,187.5z"/>
<path fill="#3d7ccc" d="M906.6,234.7 914.9,255.9 914.3,255.7 904.3,234.8z"/>
<path fill="#3dccc8" d="M903.8,286.7 910.5,281.4 908.6,283.7 900.0,291.6z"/>
<path fill="#3dc6cc" d="M897.5,282.3 889.3,283.3 904.4,280.2 908.3,279.6z"/>
<path fill="#3dccaf" d="M904.5,291.1 903.0,291.1 891.8,305.6 894.4,305.6z"/>
<path fill="#3dabcc" d="M914.8,270.3 911.4,269.1 909.7,265.5 914.0,267.3z"/>
<path fill="#3dcc7a" d="M762.3,316.4 746.0,329.0 752.4,331.7 768.0,319.4z"/>
<path fill="#3dcc4d" d="M748.1,342.1 754.8,349.7 765.2,349.1 759.0,342.4z"/>
<path fill="#3dccc2" d="M889.3,290.7 883.2,295.3 901.5,286.3 904.4,283.9z"/>
<path fill="#3dccb2" d="M878.6,302.2 880.1,303.8 900.1,290.6 899.3,289.8z"/>
<path fill="#3d84cc" d="M922.8,257.9 937.4,240.1 937.2,241.2 922.8,258.7z"/>
<path fill="#3dabcc" d="M827.1,270.0 790.4,261.6 788.3,267.5 825.7,274.1z"/>
<path fill="#3dccc1" d="M872.2,284.1 830.0,294.4 835.7,295.8 875.1,285.0z"/>
<path fill="#3d69cc" d="M936.5,242.9 957.9,227.5 955.3,230.1 935.3,245.0z"/>
<path fill="#3d7bcc" d="M904.3,234.8 914.3,255.7 913.8,255.8 902.3,235.5z"/>
<path fill="#3dcc47" d="M765.2,349.1 780.4,352.0 793.2,348.6 779.4,346.5z"/>
<path fill="#3dccc7" d="M895.3,284.0 874.5,292.5 886.1,289.5 901.3,282.6z"/>
<path fill="#3d99cc" d="M902.0,253.7 913.7,263.9 914.2,265.6 903.9,256.9z"/>
<path fill="#3dccae" d="M826.7,292.1 789.7,303.7 794.5,306.5 830.0,294.4z"/>
<path fill="#3da0cc" d="M916.8,267.6 913.9,261.4 914.6,258.6 917.0,266.0z"/>
<path fill="#3dc6cc" d="M906.6,280.6 909.8,279.9 903.8,283.3 898.2,284.7z"/>
<path fill="#793dcc" d="M828.8,180.8 848.8,187.5 838.4,191.4 815.3,185.9z"/>
<path fill="#3d4bcc" d="M957.9,227.5 984.5,214.6 980.2,217.5 955.3,230.1z"/>
<path fill="#3dccbe" d="M981.2,299.9 950.7,286.6 955.7,284.5 990.7,296.0z"/>
<path fill="#3dccb7" d="M879.6,299.3 878.6,302.2 899.3,289.8 899.8,288.4z"/>
<path fill="#3d50cc" d="M899.0,215.0 909.0,235.2 906.6,234.7 893.8,214.8z"/>
<path fill="#3dccbd" d="M883.2,295.3 879.6,299.3 899.8,288.4 901.5,286.3z"/>
<path fill="#3dc8cc" d="M903.8,283.3 910.5,280.5 908.6,282.4 900.0,286.5z"/>
<path fill="#563dcc" d="M1071.9,202.3 1089.0,208.0 1087.1,204.9 1070.3,200.2z"/>
<path fill="#593dcc" d="M1017.0,204.2 1045.9,199.9 1041.1,200.3 1013.3,205.4z"/>
<path fill="#3dccc2" d="M904.2,286.8 906.6,284.3 898.2,292.0 894.0,297.0z"/>
<path fill="#63cc3d" d="M937.6,367.3 943.4,376.9 959.3,378.4 950.0,369.2z"/>
<path fill="#3d7bcc" d="M902.3,235.5 913.8,255.8 913.4,256.2 900.6,236.6z"/>
<path fill="#3dcc96" d="M789.7,303.7 762.3,316.4 768.0,319.4 794.5,306.5z"/>
<path fill="#3dbecc" d="M990.7,279.6 955.7,280.3 959.8,278.2 998.7,275.4z"/>
<path fill="#3dcc5e" d="M808.7,343.3 826.1,341.1 841.0,333.7 826.3,336.0z"/>
<path fill="#3d81cc" d="M922.8,257.4 937.1,239.5 937.4,240.1 922.8,257.9z"/>
<path fill="#3dccb2" d="M903.0,291.1 902.4,290.3 890.8,304.1 891.8,305.6z"/>
<path fill="#3d93cc" d="M900.3,250.6 913.3,262.3 913.7,263.9 902.0,253.7z"/>
<path fill="#3d8ecc" d="M1066.1,252.6 1039.9,263.3 1045.2,258.0 1072.6,246.4z"/>
<path fill="#3dcc84" d="M845.3,326.9 856.9,324.7 873.2,314.3 864.8,316.1z"/>
<path fill="#3daecc" d="M895.7,269.5 902.4,268.5 910.5,272.7 907.4,273.2z"/>
<path fill="#3dc0cc" d="M870.4,279.1 826.7,277.9 830.0,281.0 872.2,280.7z"/>
<path fill="#3d50cc" d="M1093.2,222.3 1088.8,234.1 1091.5,228.5 1096.0,217.1z"/>
<path fill="#3d7ccc" d="M900.6,236.6 913.4,256.2 913.1,256.7 899.3,238.1z"/>
<path fill="#3dcc48" d="M1040.3,360.0 1037.3,347.0 1055.3,339.9 1058.8,352.7z"/>
<path fill="#3dcc83" d="M898.4,312.7 892.8,317.3 890.8,329.9 896.9,324.0z"/>
<path fill="#3dccc2" d="M875.1,285.0 835.7,295.8 843.3,296.4 879.1,285.4z"/>
<path fill="#3d8dcc" d="M899.1,247.6 913.0,260.9 913.3,262.3 900.3,250.6z"/>
<path fill="#3d99cc" d="M917.0,266.0 914.6,258.6 915.8,255.8 917.3,264.4z"/>
<path fill="#3dccc6" d="M889.4,284.9 863.1,294.7 874.5,292.5 895.3,284.0z"/>
<path fill="#3dc7cc" d="M895.3,282.3 874.5,285.8 886.1,284.4 901.3,281.3z"/>
<path fill="#3dcc70" d="M826.3,336.0 841.0,333.7 856.9,324.7 845.3,326.9z"/>
<path fill="#3d7ecc" d="M899.3,238.1 913.1,256.7 912.8,257.5 898.5,240.0z"/>
<path fill="#3dccbd" d="M902.8,288.8 904.2,286.8 894.0,297.0 891.5,301.1z"/>
<path fill="#3d9ecc" d="M898.0,260.2 908.6,263.5 911.1,266.8 903.3,264.5z"/>
<path fill="#3daecc" d="M911.8,272.8 909.1,273.5 902.6,270.5 907.2,269.2z"/>
<path fill="#3dccb7" d="M902.4,290.3 902.8,288.8 891.5,301.1 890.8,304.1z"/>
<path fill="#3d88cc" d="M898.4,244.8 912.8,259.6 913.0,260.9 899.1,247.6z"/>
<path fill="#3dccc3" d="M886.1,289.5 873.2,296.6 889.3,290.7 897.5,285.7z"/>
<path fill="#3d7ecc" d="M922.5,257.0 936.3,239.3 937.1,239.5 922.8,257.4z"/>
<path fill="#3d81cc" d="M898.5,240.0 912.8,257.5 912.8,258.5 898.2,242.3z"/>
<path fill="#523dcc" d="M877.8,197.8 893.8,214.8 888.9,215.5 869.7,199.3z"/>
<path fill="#3d84cc" d="M898.2,242.3 912.8,258.5 912.8,259.6 898.4,244.8z"/>
<path fill="#3d4ecc" d="M893.8,214.8 906.6,234.7 904.3,234.8 888.9,215.5z"/>
<path fill="#3dcc98" d="M898.2,303.9 894.4,305.6 888.1,319.7 892.8,317.3z"/>
<path fill="#3dcc9b" d="M858.9,315.8 864.8,316.1 883.9,303.9 880.1,303.8z"/>
<path fill="#3d61cc" d="M937.2,241.2 959.4,225.6 957.9,227.5 936.5,242.9z"/>
<path fill="#3dccc3" d="M879.1,285.4 843.3,296.4 852.6,296.0 883.9,285.4z"/>
<path fill="#3dccc4" d="M883.9,285.4 852.6,296.0 863.1,294.7 889.4,284.9z"/>
<path fill="#3dc2cc" d="M889.3,283.3 883.2,283.1 901.5,280.2 904.4,280.2z"/>
<path fill="#3d6dcc" d="M769.5,243.0 754.0,230.0 746.8,238.9 763.0,250.8z"/>
<path fill="#3da9cc" d="M1031.4,268.9 998.7,275.4 1004.7,271.4 1039.9,263.3z"/>
<path fill="#3d93cc" d="M917.3,264.4 915.8,255.8 917.5,253.2 917.7,263.0z"/>
<path fill="#503dcc" d="M761.4,208.8 767.6,199.0 756.4,207.9 749.8,217.9z"/>
<path fill="#3dccc7" d="M900.0,291.6 908.6,283.7 907.8,285.9 898.6,296.2z"/>
<path fill="#3d7ccc" d="M922.2,256.9 935.0,239.5 936.3,239.3 922.5,257.0z"/>
<path fill="#3d9ecc" d="M914.0,267.3 909.7,265.5 909.0,261.9 913.7,264.3z"/>
<path fill="#783dcc" d="M795.8,185.9 815.3,185.9 804.2,192.2 782.5,193.2z"/>
<path fill="#4f3dcc" d="M987.0,212.9 1017.0,204.2 1013.3,205.4 984.5,214.6z"/>
<path fill="#3dc1cc" d="M872.2,280.7 830.0,281.0 835.7,283.6 875.1,281.8z"/>
<path fill="#3da1cc" d="M893.7,264.0 903.3,264.5 908.5,268.7 902.4,268.5z"/>
<path fill="#3dcc65" d="M752.4,331.7 748.1,342.1 759.0,342.4 763.0,332.6z"/>
<path fill="#3dc6cc" d="M889.4,282.8 863.1,286.5 874.5,285.8 895.3,282.3z"/>
<path fill="#3daccc" d="M889.3,271.4 895.7,269.5 907.4,273.2 904.4,274.3z"/>
<path fill="#3d41cc" d="M959.4,225.6 987.0,212.9 984.5,214.6 957.9,227.5z"/>
<path fill="#3dc2cc" d="M904.2,280.6 906.6,280.6 898.2,284.7 894.0,284.8z"/>
<path fill="#6d3dcc" d="M848.8,187.5 869.7,199.3 862.4,202.0 838.4,191.4z"/>
<path fill="#3d7bcc" d="M921.8,257.1 933.3,240.2 935.0,239.5 922.2,256.9z"/>
<path fill="#3d8dcc" d="M917.7,263.0 917.5,253.2 919.4,250.7 918.2,261.7z"/>
<path fill="#59cc3d" d="M926.2,363.7 928.6,373.4 943.4,376.9 937.6,367.3z"/>
<path fill="#3dccbe" d="M970.4,303.2 945.2,288.3 950.7,286.6 981.2,299.9z"/>
<path fill="#3d4ccc" d="M888.9,215.5 904.3,234.8 902.3,235.5 884.5,217.0z"/>
<path fill="#3dcc56" d="M779.4,346.5 793.2,348.6 808.7,343.3 796.6,341.8z"/>
<path fill="#3dcc70" d="M896.9,324.0 890.8,329.9 892.2,341.6 898.0,334.4z"/>
<path fill="#3dccb0" d="M830.0,294.4 794.5,306.5 802.4,308.2 835.7,295.8z"/>
<path fill="#3dccc3" d="M898.2,292.0 903.8,286.7 900.0,291.6 892.8,299.6z"/>
<path fill="#623dcc" d="M1047.3,201.0 1071.9,202.3 1070.3,200.2 1045.9,199.9z"/>
<path fill="#3d92cc" d="M892.8,255.8 906.2,260.2 908.6,263.5 898.0,260.2z"/>
<path fill="#3dcca8" d="M1006.8,315.4 981.2,299.9 990.7,296.0 1020.3,310.0z"/>
<path fill="#3dc7cc" d="M900.0,286.5 908.6,282.4 907.8,284.2 898.6,289.5z"/>
<path fill="#3da1cc" d="M911.4,269.1 907.2,269.2 904.3,265.6 909.7,265.5z"/>
<path fill="#3d7bcc" d="M921.3,257.4 931.3,241.3 933.3,240.2 921.8,257.1z"/>
<path fill="#3d5acc" d="M937.4,240.1 959.9,224.5 959.4,225.6 937.2,241.2z"/>
<path fill="#3dc2cc" d="M875.1,281.8 835.7,283.6 843.3,285.4 879.1,282.6z"/>
<path fill="#3d88cc" d="M918.2,261.7 919.4,250.7 921.7,248.4 918.8,260.5z"/>
<path fill="#3daccc" d="M909.1,273.5 906.6,274.6 898.2,272.8 902.6,270.5z"/>
<path fill="#3dcca2" d="M856.5,313.4 858.9,315.8 880.1,303.8 878.6,302.2z"/>
<path fill="#3dcc6a" d="M1037.3,347.0 1025.9,331.6 1042.2,325.1 1055.3,339.9z"/>
<path fill="#3dbecc" d="M981.2,283.5 950.7,282.3 955.7,280.3 990.7,279.6z"/>
<path fill="#3dccbb" d="M873.2,296.6 863.7,303.3 883.2,295.3 889.3,290.7z"/>
<path fill="#3dc3cc" d="M886.1,284.4 873.2,285.6 889.3,283.3 897.5,282.3z"/>
<path fill="#3dc4cc" d="M883.9,282.9 852.6,286.3 863.1,286.5 889.4,282.8z"/>
<path fill="#3dcc58" d="M759.0,342.4 765.2,349.1 779.4,346.5 773.7,340.6z"/>
<path fill="#3d7ccc" d="M920.7,257.9 929.0,242.6 931.3,241.3 921.3,257.4z"/>
<path fill="#3daccc" d="M825.7,274.1 788.3,267.5 789.7,273.1 826.7,277.9z"/>
<path fill="#6bcc3d" d="M959.3,378.4 967.3,382.1 986.7,381.1 975.7,378.1z"/>
<path fill="#3d84cc" d="M918.8,260.5 921.7,248.4 924.1,246.2 919.4,259.5z"/>
<path fill="#3dbdcc" d="M883.2,283.1 879.6,281.8 899.8,279.6 901.5,280.2z"/>
<path fill="#3dcc89" d="M837.3,326.3 845.3,326.9 864.8,316.1 858.9,315.8z"/>
<path fill="#3dc3cc" d="M879.1,282.6 843.3,285.4 852.6,286.3 883.9,282.9z"/>
<path fill="#543dcc" d="M869.7,199.3 888.9,215.5 884.5,217.0 862.4,202.0z"/>
<path fill="#3d7ecc" d="M920.1,258.6 926.6,244.3 929.0,242.6 920.7,257.9z"/>
<path fill="#3d81cc" d="M919.4,259.5 924.1,246.2 926.6,244.3 920.1,258.6z"/>
<path fill="#3dccbf" d="M874.5,292.5 856.9,301.4 873.2,296.6 886.1,289.5z"/>
<path fill="#3d90cc" d="M790.4,261.6 763.0,250.8 760.6,258.3 788.3,267.5z"/>
<path fill="#50cc3d" d="M1015.6,374.5 1019.6,365.8 1040.3,360.0 1035.5,369.1z"/>
<path fill="#3d4ccc" d="M884.5,217.0 902.3,235.5 900.6,236.6 880.9,219.2z"/>
<path fill="#3dcc80" d="M768.0,319.4 752.4,331.7 763.0,332.6 777.6,320.8z"/>
<path fill="#3dcc9b" d="M894.4,305.6 891.8,305.6 884.8,319.8 888.1,319.7z"/>
<path fill="#3daccc" d="M883.9,274.0 889.3,271.4 904.4,274.3 901.8,275.6z"/>
<path fill="#473dcc" d="M1086.3,212.6 1093.2,222.3 1096.0,217.1 1089.0,208.0z"/>
<path fill="#3dcc8b" d="M1025.9,331.6 1006.8,315.4 1020.3,310.0 1042.2,325.1z"/>
<path fill="#3dcc5d" d="M898.0,334.4 892.2,341.6 896.9,352.0 901.6,343.8z"/>
<path fill="#3dcc9a" d="M794.5,306.5 768.0,319.4 777.6,320.8 802.4,308.2z"/>
<path fill="#3dccaa" d="M858.0,309.1 856.5,313.4 878.6,302.2 879.6,299.3z"/>
<path fill="#4ccc3d" d="M916.1,358.6 915.6,368.1 928.6,373.4 926.2,363.7z"/>
<path fill="#3dcc66" d="M796.6,341.8 808.7,343.3 826.3,336.0 816.2,335.0z"/>
<path fill="#3dccb3" d="M863.7,303.3 858.0,309.1 879.6,299.3 883.2,295.3z"/>
<path fill="#3dccc6" d="M898.6,296.2 907.8,285.9 908.3,287.8 899.6,300.3z"/>
<path fill="#3d6dcc" d="M1081.6,240.7 1066.1,252.6 1072.6,246.4 1088.8,234.1z"/>
<path fill="#3d92cc" d="M913.7,264.3 909.0,261.9 909.5,258.3 913.9,261.4z"/>
<path fill="#3dcc77" d="M816.2,335.0 826.3,336.0 845.3,326.9 837.3,326.3z"/>
<path fill="#3dbdcc" d="M902.8,280.0 904.2,280.6 894.0,284.8 891.5,283.6z"/>
<path fill="#3d86cc" d="M888.0,251.2 903.9,256.9 906.2,260.2 892.8,255.8z"/>
<path fill="#793dcc" d="M815.3,185.9 838.4,191.4 829.8,196.3 804.2,192.2z"/>
<path fill="#3db7cc" d="M879.6,281.8 878.6,279.6 899.3,278.5 899.8,279.6z"/>
<path fill="#3dcc84" d="M892.8,317.3 888.1,319.7 885.6,333.1 890.8,329.9z"/>
<path fill="#64cc3d" d="M986.7,381.1 994.4,378.2 1015.6,374.5 1005.8,378.1z"/>
<path fill="#3dccb3" d="M835.7,295.8 802.4,308.2 813.1,308.5 843.3,296.4z"/>
<path fill="#3d55cc" d="M937.1,239.5 959.2,224.2 959.9,224.5 937.4,240.1z"/>
<path fill="#3daccc" d="M906.6,274.6 904.5,276.0 894.4,275.6 898.2,272.8z"/>
<path fill="#3dcc4c" d="M901.6,343.8 896.9,352.0 904.8,360.9 907.8,351.9z"/>
<path fill="#3dafcc" d="M880.1,276.9 883.9,274.0 901.8,275.6 900.1,277.1z"/>
<path fill="#633dcc" d="M1018.1,204.3 1047.3,201.0 1045.9,199.9 1017.0,204.2z"/>
<path fill="#3dccbe" d="M959.0,305.9 939.2,289.8 945.2,288.3 970.4,303.2z"/>
<path fill="#3ecc3d" d="M907.8,351.9 904.8,360.9 915.6,368.1 916.1,358.6z"/>
<path fill="#3dc3cc" d="M898.2,284.7 903.8,283.3 900.0,286.5 892.8,288.6z"/>
<path fill="#3d4ecc" d="M880.9,219.2 900.6,236.6 899.3,238.1 878.1,222.0z"/>
<path fill="#683dcc" d="M767.6,199.0 782.5,193.2 772.5,201.4 756.4,207.9z"/>
<path fill="#423dcc" d="M959.9,224.5 987.8,212.3 987.0,212.9 959.4,225.6z"/>
<path fill="#3db2cc" d="M878.6,279.6 880.1,276.9 900.1,277.1 899.3,278.5z"/>
<path fill="#3dccbc" d="M863.1,294.7 841.0,305.1 856.9,301.4 874.5,292.5z"/>
<path fill="#3d4ccc" d="M754.0,230.0 749.8,217.9 742.4,227.3 746.8,238.9z"/>
<path fill="#3d91cc" d="M884.9,259.2 898.0,260.2 903.3,264.5 893.7,264.0z"/>
<path fill="#3dccbb" d="M894.0,297.0 898.2,292.0 892.8,299.6 887.5,307.0z"/>
<path fill="#3d9bcc" d="M883.3,265.3 893.7,264.0 902.4,268.5 895.7,269.5z"/>
<path fill="#3dc6cc" d="M898.6,289.5 907.8,284.2 908.3,285.7 899.6,292.1z"/>
<path fill="#593dcc" d="M987.8,212.3 1018.1,204.3 1017.0,204.2 987.0,212.9z"/>
<path fill="#3db7cc" d="M902.4,278.9 902.8,280.0 891.5,283.6 890.8,281.5z"/>
<path fill="#3dbecc" d="M970.4,287.1 945.2,284.2 950.7,282.3 981.2,283.5z"/>
<path fill="#543dcc" d="M862.4,202.0 884.5,217.0 880.9,219.2 856.4,205.5z"/>
<path fill="#3dcc91" d="M834.0,323.0 837.3,326.3 858.9,315.8 856.5,313.4z"/>
<path fill="#3d7bcc" d="M883.8,246.7 902.0,253.7 903.9,256.9 888.0,251.2z"/>
<path fill="#3dcca2" d="M891.8,305.6 890.8,304.1 883.4,317.5 884.8,319.8z"/>
<path fill="#3dafcc" d="M904.5,276.0 903.0,277.5 891.8,278.7 894.4,275.6z"/>
<path fill="#3dccb6" d="M843.3,296.4 813.1,308.5 826.1,307.5 852.6,296.0z"/>
<path fill="#6d3dcc" d="M838.4,191.4 862.4,202.0 856.4,205.5 829.8,196.3z"/>
<path fill="#3d50cc" d="M878.1,222.0 899.3,238.1 898.5,240.0 876.4,225.4z"/>
<path fill="#3dcc6e" d="M763.0,332.6 759.0,342.4 773.7,340.6 777.3,331.7z"/>
<path fill="#3dccb9" d="M852.6,296.0 826.1,307.5 841.0,305.1 863.1,294.7z"/>
<path fill="#3dcc65" d="M773.7,340.6 779.4,346.5 796.6,341.8 791.7,336.8z"/>
<path fill="#3db2cc" d="M903.0,277.5 902.4,278.9 890.8,281.5 891.8,278.7z"/>
<path fill="#3dccc4" d="M899.6,300.3 908.3,287.8 910.1,289.4 903.0,303.7z"/>
<path fill="#3dccb5" d="M856.9,301.4 843.8,310.0 863.7,303.3 873.2,296.6z"/>
<path fill="#3d50cc" d="M936.3,239.3 957.5,224.6 959.2,224.2 937.1,239.5z"/>
<path fill="#3da8cc" d="M1020.3,274.6 990.7,279.6 998.7,275.4 1031.4,268.9z"/>
<path fill="#3dbfcc" d="M874.5,285.8 856.9,287.0 873.2,285.6 886.1,284.4z"/>
<path fill="#3daecc" d="M826.7,277.9 789.7,273.1 794.5,277.9 830.0,281.0z"/>
<path fill="#3d8ccc" d="M1055.8,259.3 1031.4,268.9 1039.9,263.3 1066.1,252.6z"/>
<path fill="#3d86cc" d="M913.9,261.4 909.5,258.3 911.0,254.8 914.6,258.6z"/>
<path fill="#3d55cc" d="M876.4,225.4 898.5,240.0 898.2,242.3 875.7,229.2z"/>
<path fill="#3d72cc" d="M880.3,242.1 900.3,250.6 902.0,253.7 883.8,246.7z"/>
<path fill="#3dccbf" d="M947.4,307.9 933.2,290.9 939.2,289.8 959.0,305.9z"/>
<path fill="#3dccb3" d="M891.5,301.1 894.0,297.0 887.5,307.0 884.3,313.1z"/>
<path fill="#3d9bcc" d="M907.2,269.2 902.6,270.5 898.4,267.6 904.3,265.6z"/>
<path fill="#5e3dcc" d="M1069.5,206.0 1086.3,212.6 1089.0,208.0 1071.9,202.3z"/>
<path fill="#3dccbf" d="M892.8,299.6 900.0,291.6 898.6,296.2 890.8,306.6z"/>
<path fill="#3dccaa" d="M890.8,304.1 891.5,301.1 884.3,313.1 883.4,317.5z"/>
<path fill="#3dcc9e" d="M802.4,308.2 777.6,320.8 790.6,320.6 813.1,308.5z"/>
<path fill="#3dbbcc" d="M873.2,285.6 863.7,285.1 883.2,283.1 889.3,283.3z"/>
<path fill="#62cc3d" d="M943.4,376.9 948.3,381.1 967.3,382.1 959.3,378.4z"/>
<path fill="#3d91cc" d="M909.7,265.5 904.3,265.6 903.2,262.0 909.0,261.9z"/>
<path fill="#3dcca9" d="M991.8,320.0 970.4,303.2 981.2,299.9 1006.8,315.4z"/>
<path fill="#3dcc9c" d="M836.1,317.4 834.0,323.0 856.5,313.4 858.0,309.1z"/>
<path fill="#3d5acc" d="M875.7,229.2 898.2,242.3 898.4,244.8 876.2,233.3z"/>
<path fill="#3d69cc" d="M877.7,237.6 899.1,247.6 900.3,250.6 880.3,242.1z"/>
<path fill="#3dcc86" d="M777.6,320.8 763.0,332.6 777.3,331.7 790.6,320.6z"/>
<path fill="#3dcc82" d="M812.0,330.9 816.2,335.0 837.3,326.3 834.0,323.0z"/>
<path fill="#3dcc73" d="M791.7,336.8 796.6,341.8 816.2,335.0 812.0,330.9z"/>
<path fill="#3dcca9" d="M843.8,310.0 836.1,317.4 858.0,309.1 863.7,303.3z"/>
<path fill="#3dcc49" d="M1019.6,365.8 1017.0,352.9 1037.3,347.0 1040.3,360.0z"/>
<path fill="#3d61cc" d="M876.2,233.3 898.4,244.8 899.1,247.6 877.7,237.6z"/>
<path fill="#3dcc70" d="M890.8,329.9 885.6,333.1 887.3,345.4 892.2,341.6z"/>
<path fill="#763dcc" d="M782.5,193.2 804.2,192.2 795.7,199.3 772.5,201.4z"/>
<path fill="#3dccc3" d="M903.0,303.7 910.1,289.4 913.0,290.6 908.6,306.4z"/>
<path fill="#493dcc" d="M959.2,224.2 986.7,212.7 987.8,212.3 959.9,224.5z"/>
<path fill="#3d70cc" d="M763.0,250.8 746.8,238.9 744.1,247.6 760.6,258.3z"/>
<path fill="#523dcc" d="M856.4,205.5 880.9,219.2 878.1,222.0 851.8,209.8z"/>
<path fill="#3dc4cc" d="M899.6,292.1 908.3,285.7 910.1,286.9 903.0,294.1z"/>
<path fill="#3dbecc" d="M959.0,290.3 939.2,285.8 945.2,284.2 970.4,287.1z"/>
<path fill="#3d4ecc" d="M935.0,239.5 954.7,225.6 957.5,224.6 936.3,239.3z"/>
<path fill="#3d4ccc" d="M1085.8,228.8 1081.6,240.7 1088.8,234.1 1093.2,222.3z"/>
<path fill="#3dccbf" d="M936.0,308.9 927.3,291.5 933.2,290.9 947.4,307.9z"/>
<path fill="#3dccaf" d="M841.0,305.1 824.5,315.2 843.8,310.0 856.9,301.4z"/>
<path fill="#3dcc89" d="M888.1,319.7 884.8,319.8 882.1,333.2 885.6,333.1z"/>
<path fill="#3d81cc" d="M876.3,254.2 892.8,255.8 898.0,260.2 884.9,259.2z"/>
<path fill="#3dcc79" d="M777.3,331.7 773.7,340.6 791.7,336.8 794.8,328.9z"/>
<path fill="#3d97cc" d="M873.2,267.9 883.3,265.3 895.7,269.5 889.3,271.4z"/>
<path fill="#3d92cc" d="M788.3,267.5 760.6,258.3 762.3,265.4 789.7,273.1z"/>
<path fill="#3dcca3" d="M813.1,308.5 790.6,320.6 806.5,318.8 826.1,307.5z"/>
<path fill="#3d7bcc" d="M914.6,258.6 911.0,254.8 913.6,251.2 915.8,255.8z"/>
<path fill="#3dccc2" d="M908.6,306.4 913.0,290.6 917.0,291.4 916.2,308.2z"/>
<path fill="#4d3dcc" d="M749.8,217.9 756.4,207.9 749.3,217.3 742.4,227.3z"/>
<path fill="#3dccc0" d="M925.5,309.0 921.8,291.7 927.3,291.5 936.0,308.9z"/>
<path fill="#3db0cc" d="M830.0,281.0 794.5,277.9 802.4,281.8 835.7,283.6z"/>
<path fill="#3dbccc" d="M863.1,286.5 841.0,287.4 856.9,287.0 874.5,285.8z"/>
<path fill="#3dcca9" d="M826.1,307.5 806.5,318.8 824.5,315.2 841.0,305.1z"/>
<path fill="#6b3dcc" d="M1045.2,203.5 1069.5,206.0 1071.9,202.3 1047.3,201.0z"/>
<path fill="#3dcc90" d="M814.7,324.1 812.0,330.9 834.0,323.0 836.1,317.4z"/>
<path fill="#3dccc1" d="M916.2,308.2 917.0,291.4 921.8,291.7 925.5,309.0z"/>
<path fill="#773dcc" d="M804.2,192.2 829.8,196.3 823.2,202.1 795.7,199.3z"/>
<path fill="#3dbbcc" d="M894.0,284.8 898.2,284.7 892.8,288.6 887.5,288.8z"/>
<path fill="#6b3dcc" d="M829.8,196.3 856.4,205.5 851.8,209.8 823.2,202.1z"/>
<path fill="#3dcc8e" d="M790.6,320.6 777.3,331.7 794.8,328.9 806.5,318.8z"/>
<path fill="#3dcc9f" d="M824.5,315.2 814.7,324.1 836.1,317.4 843.8,310.0z"/>
<path fill="#3dcc8c" d="M1007.6,337.1 991.8,320.0 1006.8,315.4 1025.9,331.6z"/>
<path fill="#3dcc6b" d="M1017.0,352.9 1007.6,337.1 1025.9,331.6 1037.3,347.0z"/>
<path fill="#3dcc84" d="M794.8,328.9 791.7,336.8 812.0,330.9 814.7,324.1z"/>
<path fill="#3d4ccc" d="M933.3,240.2 951.1,227.2 954.7,225.6 935.0,239.5z"/>
<path fill="#58cc3d" d="M928.6,373.4 930.7,377.9 948.3,381.1 943.4,376.9z"/>
<path fill="#5ecc3d" d="M967.3,382.1 972.7,379.9 994.4,378.2 986.7,381.1z"/>
<path fill="#613dcc" d="M986.7,212.7 1016.5,205.7 1018.1,204.3 987.8,212.3z"/>
<path fill="#3dc3cc" d="M903.0,294.1 910.1,286.9 913.0,287.8 908.6,295.4z"/>
<path fill="#3dbfcc" d="M947.4,292.8 933.2,287.0 939.2,285.8 959.0,290.3z"/>
<path fill="#3dbfcc" d="M892.8,288.6 900.0,286.5 898.6,289.5 890.8,292.2z"/>
<path fill="#4dcc3d" d="M994.4,378.2 997.5,370.0 1019.6,365.8 1015.6,374.5z"/>
<path fill="#3d88cc" d="M870.6,260.5 884.9,259.2 893.7,264.0 883.3,265.3z"/>
<path fill="#3dcc5e" d="M892.2,341.6 887.3,345.4 893.0,356.2 896.9,352.0z"/>
<path fill="#4e3dcc" d="M851.8,209.8 878.1,222.0 876.4,225.4 848.9,214.7z"/>
<path fill="#3db3cc" d="M863.7,285.1 858.0,283.0 879.6,281.8 883.2,283.1z"/>
<path fill="#6c3dcc" d="M1016.5,205.7 1045.2,203.5 1047.3,201.0 1018.1,204.3z"/>
<path fill="#3dcc96" d="M806.5,318.8 794.8,328.9 814.7,324.1 824.5,315.2z"/>
<path fill="#3d72cc" d="M915.8,255.8 913.6,251.2 917.1,247.7 917.5,253.2z"/>
<path fill="#3d97cc" d="M902.6,270.5 898.2,272.8 892.8,270.9 898.4,267.6z"/>
<path fill="#3db3cc" d="M835.7,283.6 802.4,281.8 813.1,284.8 843.3,285.4z"/>
<path fill="#3db9cc" d="M852.6,286.3 826.1,286.7 841.0,287.4 863.1,286.5z"/>
<path fill="#3dccb5" d="M887.5,307.0 892.8,299.6 890.8,306.6 885.0,316.3z"/>
<path fill="#3dccbc" d="M890.8,306.6 898.6,296.2 899.6,300.3 892.2,313.0z"/>
<path fill="#3d72cc" d="M868.2,248.8 888.0,251.2 892.8,255.8 876.3,254.2z"/>
<path fill="#4e3dcc" d="M957.5,224.6 983.8,214.0 986.7,212.7 959.2,224.2z"/>
<path fill="#3d4ccc" d="M931.3,241.3 946.7,229.3 951.1,227.2 933.3,240.2z"/>
<path fill="#3dccaa" d="M975.7,323.7 959.0,305.9 970.4,303.2 991.8,320.0z"/>
<path fill="#3d98cc" d="M864.8,271.6 873.2,267.9 889.3,271.4 883.9,274.0z"/>
<path fill="#3d81cc" d="M909.0,261.9 903.2,262.0 904.0,258.4 909.5,258.3z"/>
<path fill="#3db6cc" d="M843.3,285.4 813.1,284.8 826.1,286.7 852.6,286.3z"/>
<path fill="#3dcc91" d="M884.8,319.8 883.4,317.5 880.6,330.2 882.1,333.2z"/>
<path fill="#3da8cc" d="M1006.8,280.2 981.2,283.5 990.7,279.6 1020.3,274.6z"/>
<path fill="#3dc2cc" d="M908.6,295.4 913.0,287.8 917.0,288.3 916.2,295.9z"/>
<path fill="#3dbfcc" d="M936.0,294.6 927.3,287.9 933.2,287.0 947.4,292.8z"/>
<path fill="#4bcc3d" d="M915.6,368.1 915.1,372.7 930.7,377.9 928.6,373.4z"/>
<path fill="#3dcc4d" d="M896.9,352.0 893.0,356.2 902.4,365.4 904.8,360.9z"/>
<path fill="#3db5cc" d="M856.9,287.0 843.8,286.0 863.7,285.1 873.2,285.6z"/>
<path fill="#3d69cc" d="M917.5,253.2 917.1,247.7 921.3,244.3 919.4,250.7z"/>
<path fill="#643dcc" d="M756.4,207.9 772.5,201.4 766.1,210.2 749.3,217.3z"/>
<path fill="#3d6bcc" d="M1070.3,247.9 1055.8,259.3 1066.1,252.6 1081.6,240.7z"/>
<path fill="#4d3dcc" d="M1079.2,218.4 1085.8,228.8 1093.2,222.3 1086.3,212.6z"/>
<path fill="#493dcc" d="M848.9,214.7 876.4,225.4 875.7,229.2 847.8,220.0z"/>
<path fill="#3dc1cc" d="M916.2,295.9 917.0,288.3 921.8,288.3 925.5,295.7z"/>
<path fill="#3dc0cc" d="M925.5,295.7 921.8,288.3 927.3,287.9 936.0,294.6z"/>
<path fill="#3d4ecc" d="M929.0,242.6 941.8,231.8 946.7,229.3 931.3,241.3z"/>
<path fill="#3dcc3d" d="M904.8,360.9 902.4,365.4 915.1,372.7 915.6,368.1z"/>
<path fill="#3d50cc" d="M746.8,238.9 742.4,227.3 739.6,236.6 744.1,247.6z"/>
<path fill="#3daacc" d="M858.0,283.0 856.5,279.7 878.6,279.6 879.6,281.8z"/>
<path fill="#3dcc77" d="M885.6,333.1 882.1,333.2 883.9,345.4 887.3,345.4z"/>
<path fill="#3d64cc" d="M861.2,243.2 883.8,246.7 888.0,251.2 868.2,248.8z"/>
<path fill="#3dcca9" d="M884.3,313.1 887.5,307.0 885.0,316.3 881.6,324.4z"/>
<path fill="#3d61cc" d="M919.4,250.7 921.3,244.3 926.1,240.9 921.7,248.4z"/>
<path fill="#3d9bcc" d="M858.9,275.7 864.8,271.6 883.9,274.0 880.1,276.9z"/>
<path fill="#3d88cc" d="M904.3,265.6 898.4,267.6 896.9,264.6 903.2,262.0z"/>
<path fill="#3dcc9c" d="M883.4,317.5 884.3,313.1 881.6,324.4 880.6,330.2z"/>
<path fill="#673dcc" d="M823.2,202.1 851.8,209.8 848.9,214.7 819.1,208.5z"/>
<path fill="#3d50cc" d="M926.6,244.3 936.6,234.6 941.8,231.8 929.0,242.6z"/>
<path fill="#3d96cc" d="M789.7,273.1 762.3,265.4 768.0,271.7 794.5,277.9z"/>
<path fill="#3db3cc" d="M891.5,283.6 894.0,284.8 887.5,288.8 884.3,287.1z"/>
<path fill="#3da2cc" d="M856.5,279.7 858.9,275.7 880.1,276.9 878.6,279.6z"/>
<path fill="#423dcc" d="M847.8,220.0 875.7,229.2 876.2,233.3 848.6,225.7z"/>
<path fill="#3d5acc" d="M921.7,248.4 926.1,240.9 931.3,237.7 924.1,246.2z"/>
<path fill="#3d8bcc" d="M1042.2,266.2 1020.3,274.6 1031.4,268.9 1055.8,259.3z"/>
<path fill="#3d55cc" d="M924.1,246.2 931.3,237.7 936.6,234.6 926.6,244.3z"/>
<path fill="#3d98cc" d="M898.2,272.8 894.4,275.6 888.1,275.2 892.8,270.9z"/>
<path fill="#713dcc" d="M772.5,201.4 795.7,199.3 790.4,207.1 766.1,210.2z"/>
<path fill="#3d57cc" d="M855.4,237.4 880.3,242.1 883.8,246.7 861.2,243.2z"/>
<path fill="#3d74cc" d="M760.6,258.3 744.1,247.6 746.0,255.9 762.3,265.4z"/>
<path fill="#3dcc4c" d="M997.5,370.0 995.5,357.3 1017.0,352.9 1019.6,365.8z"/>
<path fill="#3d41cc" d="M848.6,225.7 876.2,233.3 877.7,237.6 851.1,231.5z"/>
<path fill="#3d75cc" d="M858.3,255.3 876.3,254.2 884.9,259.2 870.6,260.5z"/>
<path fill="#523dcc" d="M954.7,225.6 979.2,216.2 983.8,214.0 957.5,224.6z"/>
<path fill="#3dccb9" d="M892.2,313.0 899.6,300.3 903.0,303.7 896.9,318.3z"/>
<path fill="#733dcc" d="M795.7,199.3 823.2,202.1 819.1,208.5 790.4,207.1z"/>
<path fill="#56cc3d" d="M948.3,381.1 951.7,379.5 972.7,379.9 967.3,382.1z"/>
<path fill="#3d4bcc" d="M851.1,231.5 877.7,237.6 880.3,242.1 855.4,237.4z"/>
<path fill="#3d83cc" d="M856.9,263.7 870.6,260.5 883.3,265.3 873.2,267.9z"/>
<path fill="#673dcc" d="M983.8,214.0 1012.4,208.2 1016.5,205.7 986.7,212.7z"/>
<path fill="#3dccab" d="M959.3,326.1 947.4,307.9 959.0,305.9 975.7,323.7z"/>
<path fill="#643dcc" d="M1063.1,210.9 1079.2,218.4 1086.3,212.6 1069.5,206.0z"/>
<path fill="#3dbccc" d="M890.8,292.2 898.6,289.5 899.6,292.1 892.2,295.3z"/>
<path fill="#3dcc8e" d="M988.1,341.3 975.7,323.7 991.8,320.0 1007.6,337.1z"/>
<path fill="#3d72cc" d="M909.5,258.3 904.0,258.4 906.5,254.7 911.0,254.8z"/>
<path fill="#3daacc" d="M890.8,281.5 891.5,283.6 884.3,287.1 883.4,283.9z"/>
<path fill="#3dafcc" d="M841.0,287.4 824.5,285.7 843.8,286.0 856.9,287.0z"/>
<path fill="#3d9bcc" d="M894.4,275.6 891.8,278.7 884.8,279.7 888.1,275.2z"/>
<path fill="#3dccaf" d="M885.0,316.3 890.8,306.6 892.2,313.0 886.7,324.7z"/>
<path fill="#47cc3d" d="M972.7,379.9 975.0,372.3 997.5,370.0 994.4,378.2z"/>
<path fill="#3dcc6d" d="M995.5,357.3 988.1,341.3 1007.6,337.1 1017.0,352.9z"/>
<path fill="#3da9cc" d="M991.8,285.4 970.4,287.1 981.2,283.5 1006.8,280.2z"/>
<path fill="#473dcc" d="M742.4,227.3 749.3,217.3 746.6,226.8 739.6,236.6z"/>
<path fill="#3dcc66" d="M887.3,345.4 883.9,345.4 890.2,356.1 893.0,356.2z"/>
<path fill="#613dcc" d="M819.1,208.5 848.9,214.7 847.8,220.0 817.5,215.4z"/>
<path fill="#733dcc" d="M1012.4,208.2 1039.9,207.2 1045.2,203.5 1016.5,205.7z"/>
<path fill="#3da9cc" d="M843.8,286.0 836.1,283.1 858.0,283.0 863.7,285.1z"/>
<path fill="#713dcc" d="M1039.9,207.2 1063.1,210.9 1069.5,206.0 1045.2,203.5z"/>
<path fill="#3da2cc" d="M891.8,278.7 890.8,281.5 883.4,283.9 884.8,279.7z"/>
<path fill="#3d9acc" d="M794.5,277.9 768.0,271.7 777.6,277.1 802.4,281.8z"/>
<path fill="#3dcc82" d="M882.1,333.2 880.6,330.2 882.5,341.7 883.9,345.4z"/>
<path fill="#3db5cc" d="M887.5,288.8 892.8,288.6 890.8,292.2 885.0,292.4z"/>
<path fill="#3dccb6" d="M896.9,318.3 903.0,303.7 908.6,306.4 904.8,322.6z"/>
<path fill="#3d49cc" d="M1074.2,236.0 1070.3,247.9 1081.6,240.7 1085.8,228.8z"/>
<path fill="#3dccac" d="M943.4,327.3 936.0,308.9 947.4,307.9 959.3,326.1z"/>
<path fill="#543dcc" d="M951.1,227.2 973.2,219.0 979.2,216.2 954.7,225.6z"/>
<path fill="#3d64cc" d="M846.8,249.5 868.2,248.8 876.3,254.2 858.3,255.3z"/>
<path fill="#4ccc3d" d="M930.7,377.9 932.1,376.9 951.7,379.5 948.3,381.1z"/>
<path fill="#3d84cc" d="M845.3,268.3 856.9,263.7 873.2,267.9 864.8,271.6z"/>
<path fill="#3da9cc" d="M826.1,286.7 806.5,284.1 824.5,285.7 841.0,287.4z"/>
<path fill="#3d83cc" d="M898.4,267.6 892.8,270.9 890.8,268.9 896.9,264.6z"/>
<path fill="#3dcc9f" d="M881.6,324.4 885.0,316.3 886.7,324.7 883.4,334.6z"/>
<path fill="#3dcc56" d="M893.0,356.2 890.2,356.1 900.7,365.1 902.4,365.4z"/>
<path fill="#3d64cc" d="M911.0,254.8 906.5,254.7 910.8,250.8 913.6,251.2z"/>
<path fill="#3d9ecc" d="M802.4,281.8 777.6,277.1 790.6,281.2 813.1,284.8z"/>
<path fill="#5e3dcc" d="M749.3,217.3 766.1,210.2 763.7,219.3 746.6,226.8z"/>
<path fill="#3dccb3" d="M904.8,322.6 908.6,306.4 916.2,308.2 915.6,325.5z"/>
<path fill="#593dcc" d="M817.5,215.4 847.8,220.0 848.6,225.7 818.6,222.5z"/>
<path fill="#3dcc90" d="M880.6,330.2 881.6,324.4 883.4,334.6 882.5,341.7z"/>
<path fill="#6c3dcc" d="M790.4,207.1 819.1,208.5 817.5,215.4 788.3,215.2z"/>
<path fill="#3dccae" d="M928.6,327.1 925.5,309.0 936.0,308.9 943.4,327.3z"/>
<path fill="#3d75cc" d="M903.2,262.0 896.9,264.6 898.0,261.4 904.0,258.4z"/>
<path fill="#3d56cc" d="M744.1,247.6 739.6,236.6 741.5,245.7 746.0,255.9z"/>
<path fill="#3da3cc" d="M813.1,284.8 790.6,281.2 806.5,284.1 826.1,286.7z"/>
<path fill="#3dccb0" d="M915.6,325.5 916.2,308.2 925.5,309.0 928.6,327.1z"/>
<path fill="#6b3dcc" d="M979.2,216.2 1005.8,211.6 1012.4,208.2 983.8,214.0z"/>
<path fill="#40cc3d" d="M915.1,372.7 914.8,372.1 932.1,376.9 930.7,377.9z"/>
<path fill="#3d7acc" d="M762.3,265.4 746.0,255.9 752.4,263.4 768.0,271.7z"/>
<path fill="#3db9cc" d="M892.2,295.3 899.6,292.1 903.0,294.1 896.9,297.5z"/>
<path fill="#3d9ccc" d="M836.1,283.1 834.0,278.7 856.5,279.7 858.0,283.0z"/>
<path fill="#6b3dcc" d="M766.1,210.2 790.4,207.1 788.3,215.2 763.7,219.3z"/>
<path fill="#3d70cc" d="M841.0,258.8 858.3,255.3 870.6,260.5 856.9,263.7z"/>
<path fill="#3dcc47" d="M902.4,365.4 900.7,365.1 914.8,372.1 915.1,372.7z"/>
<path fill="#3dcc90" d="M968.3,344.0 959.3,326.1 975.7,323.7 988.1,341.3z"/>
<path fill="#3d54cc" d="M836.7,243.2 861.2,243.2 868.2,248.8 846.8,249.5z"/>
<path fill="#543dcc" d="M946.7,229.3 965.9,222.3 973.2,219.0 951.1,227.2z"/>
<path fill="#3dcc50" d="M975.0,372.3 973.5,359.9 995.5,357.3 997.5,370.0z"/>
<path fill="#3d6acc" d="M1055.3,255.5 1042.2,266.2 1055.8,259.3 1070.3,247.9z"/>
<path fill="#3daacc" d="M975.7,290.0 959.0,290.3 970.4,287.1 991.8,285.4z"/>
<path fill="#3d8bcc" d="M1025.9,273.1 1006.8,280.2 1020.3,274.6 1042.2,266.2z"/>
<path fill="#3dcca9" d="M886.7,324.7 892.2,313.0 896.9,318.3 892.5,332.0z"/>
<path fill="#3d89cc" d="M837.3,273.5 845.3,268.3 864.8,271.6 858.9,275.7z"/>
<path fill="#4f3dcc" d="M818.6,222.5 848.6,225.7 851.1,231.5 822.3,229.6z"/>
<path fill="#40cc3d" d="M951.7,379.5 953.1,372.5 975.0,372.3 972.7,379.9z"/>
<path fill="#3d91cc" d="M834.0,278.7 837.3,273.5 858.9,275.7 856.5,279.7z"/>
<path fill="#3dcc73" d="M883.9,345.4 882.5,341.7 889.1,351.7 890.2,356.1z"/>
<path fill="#503dcc" d="M1068.0,225.2 1074.2,236.0 1085.8,228.8 1079.2,218.4z"/>
<path fill="#3d45cc" d="M828.4,236.6 855.4,237.4 861.2,243.2 836.7,243.2z"/>
<path fill="#433dcc" d="M822.3,229.6 851.1,231.5 855.4,237.4 828.4,236.6z"/>
<path fill="#3d9fcc" d="M824.5,285.7 814.7,281.9 836.1,283.1 843.8,286.0z"/>
<path fill="#3d57cc" d="M913.6,251.2 910.8,250.8 916.6,246.8 917.1,247.7z"/>
<path fill="#3dcc70" d="M973.5,359.9 968.3,344.0 988.1,341.3 995.5,357.3z"/>
<path fill="#3da9cc" d="M884.3,287.1 887.5,288.8 885.0,292.4 881.6,290.1z"/>
<path fill="#523dcc" d="M941.8,231.8 957.8,226.0 965.9,222.3 946.7,229.3z"/>
<path fill="#633dcc" d="M788.3,215.2 817.5,215.4 818.6,222.5 789.7,223.5z"/>
<path fill="#403dcc" d="M739.6,236.6 746.6,226.8 748.5,236.0 741.5,245.7z"/>
<path fill="#773dcc" d="M1005.8,211.6 1031.4,211.9 1039.9,207.2 1012.4,208.2z"/>
<path fill="#3db6cc" d="M896.9,297.5 903.0,294.1 908.6,295.4 904.8,298.9z"/>
<path fill="#3d84cc" d="M892.8,270.9 888.1,275.2 885.6,274.5 890.8,268.9z"/>
<path fill="#3d80cc" d="M768.0,271.7 752.4,263.4 763.0,269.9 777.6,277.1z"/>
<path fill="#3dcc92" d="M948.9,345.1 943.4,327.3 959.3,326.1 968.3,344.0z"/>
<path fill="#3dcc96" d="M883.4,334.6 886.7,324.7 892.5,332.0 889.8,343.4z"/>
<path fill="#3d4bcc" d="M917.1,247.7 916.6,246.8 923.6,242.7 921.3,244.3z"/>
<path fill="#683dcc" d="M1053.1,216.8 1068.0,225.2 1079.2,218.4 1063.1,210.9z"/>
<path fill="#3d5dcc" d="M826.1,253.0 846.8,249.5 858.3,255.3 841.0,258.8z"/>
<path fill="#3dcc84" d="M882.5,341.7 883.4,334.6 889.8,343.4 889.1,351.7z"/>
<path fill="#3dabcc" d="M959.3,293.8 947.4,292.8 959.0,290.3 975.7,290.0z"/>
<path fill="#3dcca3" d="M892.5,332.0 896.9,318.3 904.8,322.6 902.1,337.7z"/>
<path fill="#3dafcc" d="M885.0,292.4 890.8,292.2 892.2,295.3 886.7,295.3z"/>
<path fill="#3d70cc" d="M826.3,264.0 841.0,258.8 856.9,263.7 845.3,268.3z"/>
<path fill="#6d3dcc" d="M973.2,219.0 997.2,215.7 1005.8,211.6 979.2,216.2z"/>
<path fill="#4e3dcc" d="M936.6,234.6 949.1,230.0 957.8,226.0 941.8,231.8z"/>
<path fill="#3dcc43" d="M932.1,376.9 932.7,370.5 953.1,372.5 951.7,379.5z"/>
<path fill="#3dcc65" d="M890.2,356.1 889.1,351.7 900.0,360.0 900.7,365.1z"/>
<path fill="#763dcc" d="M1031.4,211.9 1053.1,216.8 1063.1,210.9 1039.9,207.2z"/>
<path fill="#3d64cc" d="M904.0,258.4 898.0,261.4 901.6,257.9 906.5,254.7z"/>
<path fill="#3d5dcc" d="M746.0,255.9 741.5,245.7 748.1,254.0 752.4,263.4z"/>
<path fill="#3d96cc" d="M806.5,284.1 794.8,279.3 814.7,281.9 824.5,285.7z"/>
<path fill="#623dcc" d="M763.7,219.3 788.3,215.2 789.7,223.5 765.3,228.3z"/>
<path fill="#563dcc" d="M746.6,226.8 763.7,219.3 765.3,228.3 748.5,236.0z"/>
<path fill="#3d41cc" d="M921.3,244.3 923.6,242.7 931.6,238.4 926.1,240.9z"/>
<path fill="#3dcc56" d="M953.1,372.5 952.2,360.6 973.5,359.9 975.0,372.3z"/>
<path fill="#493dcc" d="M931.3,237.7 940.3,234.2 949.1,230.0 936.6,234.6z"/>
<path fill="#3d90cc" d="M814.7,281.9 812.0,276.4 834.0,278.7 836.1,283.1z"/>
<path fill="#423dcc" d="M926.1,240.9 931.6,238.4 940.3,234.2 931.3,237.7z"/>
<path fill="#593dcc" d="M789.7,223.5 818.6,222.5 822.3,229.6 794.5,231.6z"/>
<path fill="#3db3cc" d="M904.8,298.9 908.6,295.4 916.2,295.9 915.6,299.2z"/>
<path fill="#3d86cc" d="M777.6,277.1 763.0,269.9 777.3,275.3 790.6,281.2z"/>
<path fill="#3dcc96" d="M930.9,344.4 928.6,327.1 943.4,327.3 948.9,345.1z"/>
<path fill="#3dcc58" d="M900.7,365.1 900.0,360.0 914.7,366.3 914.8,372.1z"/>
<path fill="#3dcc4d" d="M914.8,372.1 914.7,366.3 932.7,370.5 932.1,376.9z"/>
<path fill="#3dcc9e" d="M902.1,337.7 904.8,322.6 915.6,325.5 915.1,341.9z"/>
<path fill="#3d9ccc" d="M883.4,283.9 884.3,287.1 881.6,290.1 880.6,285.9z"/>
<path fill="#3daccc" d="M943.4,296.6 936.0,294.6 947.4,292.8 959.3,293.8z"/>
<path fill="#3dcc74" d="M952.2,360.6 948.9,345.1 968.3,344.0 973.5,359.9z"/>
<path fill="#3d8ecc" d="M790.6,281.2 777.3,275.3 794.8,279.3 806.5,284.1z"/>
<path fill="#3d48cc" d="M1058.8,243.8 1055.3,255.5 1070.3,247.9 1074.2,236.0z"/>
<path fill="#3d4ccc" d="M813.1,246.5 836.7,243.2 846.8,249.5 826.1,253.0z"/>
<path fill="#3d89cc" d="M888.1,275.2 884.8,279.7 882.1,280.4 885.6,274.5z"/>
<path fill="#3d70cc" d="M896.9,264.6 890.8,268.9 892.2,266.6 898.0,261.4z"/>
<path fill="#3dcc9a" d="M915.1,341.9 915.6,325.5 928.6,327.1 930.9,344.4z"/>
<path fill="#3d77cc" d="M816.2,270.2 826.3,264.0 845.3,268.3 837.3,273.5z"/>
<path fill="#3d8ccc" d="M1007.6,279.5 991.8,285.4 1006.8,280.2 1025.9,273.1z"/>
<path fill="#3db0cc" d="M915.6,299.2 916.2,295.9 925.5,295.7 928.6,298.5z"/>
<path fill="#3d82cc" d="M812.0,276.4 816.2,270.2 837.3,273.5 834.0,278.7z"/>
<path fill="#4c3dcc" d="M794.5,231.6 822.3,229.6 828.4,236.6 802.4,239.3z"/>
<path fill="#3daecc" d="M928.6,298.5 925.5,295.7 936.0,294.6 943.4,296.6z"/>
<path fill="#3dcc8e" d="M889.8,343.4 892.5,332.0 902.1,337.7 900.4,350.6z"/>
<path fill="#3d91cc" d="M884.8,279.7 883.4,283.9 880.6,285.9 882.1,280.4z"/>
<path fill="#3dcc79" d="M889.1,351.7 889.8,343.4 900.4,350.6 900.0,360.0z"/>
<path fill="#3e3dcc" d="M802.4,239.3 828.4,236.6 836.7,243.2 813.1,246.5z"/>
<path fill="#3d43cc" d="M741.5,245.7 748.5,236.0 754.8,244.8 748.1,254.0z"/>
<path fill="#3dcc5d" d="M932.7,370.5 932.3,359.3 952.2,360.6 953.1,372.5z"/>
<path fill="#6d3dcc" d="M965.9,222.3 986.8,220.4 997.2,215.7 973.2,219.0z"/>
<path fill="#3d5ecc" d="M808.7,258.6 826.1,253.0 841.0,258.8 826.3,264.0z"/>
<path fill="#3d6acc" d="M1037.3,263.1 1025.9,273.1 1042.2,266.2 1055.3,255.5z"/>
<path fill="#583dcc" d="M765.3,228.3 789.7,223.5 794.5,231.6 771.0,236.9z"/>
<path fill="#3d65cc" d="M752.4,263.4 748.1,254.0 759.0,261.5 763.0,269.9z"/>
<path fill="#3dcc7a" d="M932.3,359.3 930.9,344.4 948.9,345.1 952.2,360.6z"/>
<path fill="#793dcc" d="M997.2,215.7 1020.3,217.4 1031.4,211.9 1005.8,211.6z"/>
<path fill="#3d84cc" d="M794.8,279.3 791.7,272.8 812.0,276.4 814.7,281.9z"/>
<path fill="#3d54cc" d="M906.5,254.7 901.6,257.9 907.8,254.1 910.8,250.8z"/>
<path fill="#3dcc6e" d="M900.0,360.0 900.4,350.6 914.8,355.9 914.7,366.3z"/>
<path fill="#3dcc86" d="M900.4,350.6 902.1,337.7 915.1,341.9 914.8,355.9z"/>
<path fill="#4c3dcc" d="M748.5,236.0 765.3,228.3 771.0,236.9 754.8,244.8z"/>
<path fill="#3dcc65" d="M914.7,366.3 914.8,355.9 932.3,359.3 932.7,370.5z"/>
<path fill="#3dcc80" d="M914.8,355.9 915.1,341.9 930.9,344.4 932.3,359.3z"/>
<path fill="#3da9cc" d="M886.7,295.3 892.2,295.3 896.9,297.5 892.5,297.3z"/>
<path fill="#523dcc" d="M1053.3,232.6 1058.8,243.8 1074.2,236.0 1068.0,225.2z"/>
<path fill="#3d6ecc" d="M763.0,269.9 759.0,261.5 773.7,267.7 777.3,275.3z"/>
<path fill="#3d4dcc" d="M793.2,252.3 813.1,246.5 826.1,253.0 808.7,258.6z"/>
<path fill="#3d9fcc" d="M881.6,290.1 885.0,292.4 886.7,295.3 883.4,292.4z"/>
<path fill="#3d66cc" d="M796.6,265.6 808.7,258.6 826.3,264.0 816.2,270.2z"/>
<path fill="#4b3dcc" d="M771.0,236.9 794.5,231.6 802.4,239.3 780.4,245.0z"/>
<path fill="#3d79cc" d="M777.3,275.3 773.7,267.7 791.7,272.8 794.8,279.3z"/>
<path fill="#3d73cc" d="M791.7,272.8 796.6,265.6 816.2,270.2 812.0,276.4z"/>
<path fill="#3d3dcc" d="M780.4,245.0 802.4,239.3 813.1,246.5 793.2,252.3z"/>
<path fill="#3d4dcc" d="M748.1,254.0 754.8,244.8 765.2,252.7 759.0,261.5z"/>
<path fill="#6b3dcc" d="M957.8,226.0 975.1,225.4 986.8,220.4 965.9,222.3z"/>
<path fill="#783dcc" d="M1020.3,217.4 1039.8,223.3 1053.1,216.8 1031.4,211.9z"/>
<path fill="#3d70cc" d="M890.8,268.9 885.6,274.5 887.3,273.4 892.2,266.6z"/>
<path fill="#3d8ecc" d="M988.1,285.3 975.7,290.0 991.8,285.4 1007.6,279.5z"/>
<path fill="#6a3dcc" d="M1039.8,223.3 1053.3,232.6 1068.0,225.2 1053.1,216.8z"/>
<path fill="#403dcc" d="M754.8,244.8 771.0,236.9 780.4,245.0 765.2,252.7z"/>
<path fill="#3d45cc" d="M910.8,250.8 907.8,254.1 916.1,250.0 916.6,246.8z"/>
<path fill="#3d5dcc" d="M898.0,261.4 892.2,266.6 896.9,263.9 901.6,257.9z"/>
<path fill="#3d56cc" d="M779.4,259.7 793.2,252.3 808.7,258.6 796.6,265.6z"/>
<path fill="#3d65cc" d="M773.7,267.7 779.4,259.7 796.6,265.6 791.7,272.8z"/>
<path fill="#3d58cc" d="M759.0,261.5 765.2,252.7 779.4,259.7 773.7,267.7z"/>
<path fill="#3d47cc" d="M765.2,252.7 780.4,245.0 793.2,252.3 779.4,259.7z"/>
<path fill="#673dcc" d="M949.1,230.0 962.6,230.5 975.1,225.4 957.8,226.0z"/>
<path fill="#793dcc" d="M986.8,220.4 1006.8,223.3 1020.3,217.4 997.2,215.7z"/>
<path fill="#3d48cc" d="M1040.3,251.6 1037.3,263.1 1055.3,255.5 1058.8,243.8z"/>
<path fill="#3da3cc" d="M892.5,297.3 896.9,297.5 904.8,298.9 902.1,298.3z"/>
<path fill="#3d90cc" d="M880.6,285.9 881.6,290.1 883.4,292.4 882.5,287.2z"/>
<path fill="#433dcc" d="M916.6,246.8 916.1,250.0 926.2,245.5 923.6,242.7z"/>
<path fill="#3d77cc" d="M885.6,274.5 882.1,280.4 883.9,280.6 887.3,273.4z"/>
<path fill="#3d6bcc" d="M1017.0,270.4 1007.6,279.5 1025.9,273.1 1037.3,263.1z"/>
<path fill="#3d90cc" d="M968.3,290.2 959.3,293.8 975.7,290.0 988.1,285.3z"/>
<path fill="#613dcc" d="M940.3,234.2 950.0,235.7 962.6,230.5 949.1,230.0z"/>
<path fill="#4f3dcc" d="M923.6,242.7 926.2,245.5 937.6,240.7 931.6,238.4z"/>
<path fill="#3d82cc" d="M882.1,280.4 880.6,285.9 882.5,287.2 883.9,280.6z"/>
<path fill="#593dcc" d="M931.6,238.4 937.6,240.7 950.0,235.7 940.3,234.2z"/>
<path fill="#3d96cc" d="M883.4,292.4 886.7,295.3 892.5,297.3 889.8,293.8z"/>
<path fill="#3d9ecc" d="M902.1,298.3 904.8,298.9 915.6,299.2 915.1,298.2z"/>
<path fill="#3d4ccc" d="M901.6,257.9 896.9,263.9 904.8,260.6 907.8,254.1z"/>
<path fill="#783dcc" d="M1006.8,223.3 1023.8,230.2 1039.8,223.3 1020.3,217.4z"/>
<path fill="#523dcc" d="M1035.5,240.2 1040.3,251.6 1058.8,243.8 1053.3,232.6z"/>
<path fill="#3d92cc" d="M948.9,294.1 943.4,296.6 959.3,293.8 968.3,290.2z"/>
<path fill="#773dcc" d="M975.1,225.4 991.8,229.4 1006.8,223.3 986.8,220.4z"/>
<path fill="#3d5ecc" d="M892.2,266.6 887.3,273.4 893.0,271.6 896.9,263.9z"/>
<path fill="#3d9acc" d="M915.1,298.2 915.6,299.2 928.6,298.5 930.9,296.7z"/>
<path fill="#6a3dcc" d="M1023.8,230.2 1035.5,240.2 1053.3,232.6 1039.8,223.3z"/>
<path fill="#3d96cc" d="M930.9,296.7 928.6,298.5 943.4,296.6 948.9,294.1z"/>
<path fill="#3d6dcc" d="M995.5,277.0 988.1,285.3 1007.6,279.5 1017.0,270.4z"/>
<path fill="#3d49cc" d="M1019.6,259.3 1017.0,270.4 1037.3,263.1 1040.3,251.6z"/>
<path fill="#3e3dcc" d="M907.8,254.1 904.8,260.6 915.6,256.7 916.1,250.0z"/>
<path fill="#3d84cc" d="M882.5,287.2 883.4,292.4 889.8,293.8 889.1,287.7z"/>
<path fill="#733dcc" d="M962.6,230.5 975.7,235.5 991.8,229.4 975.1,225.4z"/>
<path fill="#3d8ecc" d="M889.8,293.8 892.5,297.3 902.1,298.3 900.4,294.2z"/>
<path fill="#3d66cc" d="M887.3,273.4 883.9,280.6 890.2,279.9 893.0,271.6z"/>
<path fill="#763dcc" d="M991.8,229.4 1005.8,237.3 1023.8,230.2 1006.8,223.3z"/>
<path fill="#3d73cc" d="M883.9,280.6 882.5,287.2 889.1,287.7 890.2,279.9z"/>
<path fill="#4c3dcc" d="M916.1,250.0 915.6,256.7 928.6,252.1 926.2,245.5z"/>
<path fill="#6c3dcc" d="M950.0,235.7 959.3,241.5 975.7,235.5 962.6,230.5z"/>
<path fill="#3d4dcc" d="M896.9,263.9 893.0,271.6 902.4,269.0 904.8,260.6z"/>
<path fill="#503dcc" d="M1015.6,247.7 1019.6,259.3 1040.3,251.6 1035.5,240.2z"/>
<path fill="#3d70cc" d="M973.5,282.8 968.3,290.2 988.1,285.3 995.5,277.0z"/>
<path fill="#683dcc" d="M1005.8,237.3 1015.6,247.7 1035.5,240.2 1023.8,230.2z"/>
<path fill="#593dcc" d="M926.2,245.5 928.6,252.1 943.4,247.1 937.6,240.7z"/>
<path fill="#633dcc" d="M937.6,240.7 943.4,247.1 959.3,241.5 950.0,235.7z"/>
<path fill="#3d86cc" d="M900.4,294.2 902.1,298.3 915.1,298.2 914.8,293.2z"/>
<path fill="#3d4ccc" d="M997.5,266.4 995.5,277.0 1017.0,270.4 1019.6,259.3z"/>
<path fill="#713dcc" d="M975.7,235.5 986.7,244.1 1005.8,237.3 991.8,229.4z"/>
<path fill="#3d74cc" d="M952.2,287.5 948.9,294.1 968.3,290.2 973.5,282.8z"/>
<path fill="#3d79cc" d="M889.1,287.7 889.8,293.8 900.4,294.2 900.0,287.1z"/>
<path fill="#3d80cc" d="M914.8,293.2 915.1,298.2 930.9,296.7 932.3,291.0z"/>
<path fill="#3d56cc" d="M893.0,271.6 890.2,279.9 900.7,278.3 902.4,269.0z"/>
<path fill="#3d3dcc" d="M904.8,260.6 902.4,269.0 915.1,265.7 915.6,256.7z"/>
<path fill="#3d7acc" d="M932.3,291.0 930.9,296.7 948.9,294.1 952.2,287.5z"/>
<path fill="#3d65cc" d="M890.2,279.9 889.1,287.7 900.0,287.1 900.7,278.3z"/>
<path fill="#4d3dcc" d="M994.4,254.9 997.5,266.4 1019.6,259.3 1015.6,247.7z"/>
<path fill="#643dcc" d="M986.7,244.1 994.4,254.9 1015.6,247.7 1005.8,237.3z"/>
<path fill="#6b3dcc" d="M959.3,241.5 967.3,250.5 986.7,244.1 975.7,235.5z"/>
<path fill="#3d50cc" d="M975.0,272.8 973.5,282.8 995.5,277.0 997.5,266.4z"/>
<path fill="#4b3dcc" d="M915.6,256.7 915.1,265.7 930.7,261.4 928.6,252.1z"/>
<path fill="#3d6ecc" d="M900.0,287.1 900.4,294.2 914.8,293.2 914.7,285.4z"/>
<path fill="#623dcc" d="M943.4,247.1 948.3,256.4 967.3,250.5 959.3,241.5z"/>
<path fill="#583dcc" d="M928.6,252.1 930.7,261.4 948.3,256.4 943.4,247.1z"/>
<path fill="#3d47cc" d="M902.4,269.0 900.7,278.3 914.8,275.7 915.1,265.7z"/>
<path fill="#3d56cc" d="M953.1,278.1 952.2,287.5 973.5,282.8 975.0,272.8z"/>
<path fill="#3d58cc" d="M900.7,278.3 900.0,287.1 914.7,285.4 914.8,275.7z"/>
<path fill="#5e3dcc" d="M967.3,250.5 972.7,261.5 994.4,254.9 986.7,244.1z"/>
<path fill="#3d65cc" d="M914.7,285.4 914.8,293.2 932.3,291.0 932.7,282.3z"/>
<path fill="#473dcc" d="M972.7,261.5 975.0,272.8 997.5,266.4 994.4,254.9z"/>
<path fill="#3d5dcc" d="M932.7,282.3 932.3,291.0 952.2,287.5 953.1,278.1z"/>
<path fill="#403dcc" d="M915.1,265.7 914.8,275.7 932.1,272.0 930.7,261.4z"/>
<path fill="#563dcc" d="M948.3,256.4 951.7,267.2 972.7,261.5 967.3,250.5z"/>
<path fill="#3d4dcc" d="M914.8,275.7 914.7,285.4 932.7,282.3 932.1,272.0z"/>
<path fill="#4c3dcc" d="M930.7,261.4 932.1,272.0 951.7,267.2 948.3,256.4z"/>
<path fill="#403dcc" d="M951.7,267.2 953.1,278.1 975.0,272.8 972.7,261.5z"/>
<path fill="#3d43cc" d="M932.1,272.0 932.7,282.3 953.1,278.1 951.7,267.2z"/></g><path d="M686.5 371.0L686.5 214.6M686.5 371.5L694.0 371.5M686.5 351.5L694.0 351.5M686.5 332.5L694.0 332.5M686.5 312.5L694.0 312.5M686.5 293.5L694.0 293.5M686.5 273.5L694.0 273.5M686.5 254.5L694.0 254.5M686.5 234.5L694.0 234.5M686.5 215.5L694.0 215.5" stroke="#000" stroke-width="1" fill="none"/></svg><div style="position:absolute;left:76.30px;top:173.36px;font-family:'Liberation Sans';font-size:14.00px;line-height:14.00px;color:#000;font-weight:normal;font-style:normal;letter-spacing:0.00px;white-space:pre;transform:translateX(-100%);">0.8</div><div style="position:absolute;left:76.30px;top:192.90px;font-family:'Liberation Sans';font-size:14.00px;line-height:14.00px;color:#000;font-weight:normal;font-style:normal;letter-spacing:0.00px;white-space:pre;transform:translateX(-100%);">0.6</div><div style="position:absolute;left:76.30px;top:212.44px;font-family:'Liberation Sans';font-size:14.00px;line-height:14.00px;color:#000;font-weight:normal;font-style:normal;letter-spacing:0.00px;white-space:pre;transform:translateX(-100%);">0.4</div><div style="position:absolute;left:76.30px;top:231.98px;font-family:'Liberation Sans';font-size:14.00px;line-height:14.00px;color:#000;font-weight:normal;font-style:normal;letter-spacing:0.00px;white-space:pre;transform:translateX(-100%);">0.2</div><div style="position:absolute;left:76.30px;top:251.52px;font-family:'Liberation Sans';font-size:14.00px;line-height:14.00px;color:#000;font-weight:normal;font-style:normal;letter-spacing:0.00px;white-space:pre;transform:translateX(-100%);">0</div><div style="position:absolute;left:76.30px;top:271.06px;font-family:'Liberation Sans';font-size:14.00px;line-height:14.00px;color:#000;font-weight:normal;font-style:normal;letter-spacing:0.00px;white-space:pre;transform:translateX(-100%);">-0.2</div><div style="position:absolute;left:76.30px;top:290.60px;font-family:'Liberation Sans';font-size:14.00px;line-height:14.00px;color:#000;font-weight:normal;font-style:normal;letter-spacing:0.00px;white-space:pre;transform:translateX(-100%);">-0.4</div><div style="position:absolute;left:76.30px;top:310.14px;font-family:'Liberation Sans';font-size:14.00px;line-height:14.00px;color:#000;font-weight:normal;font-style:normal;letter-spacing:0.00px;white-space:pre;transform:translateX(-100%);">-0.6</div><div style="position:absolute;left:76.30px;top:329.68px;font-family:'Liberation Sans';font-size:14.00px;line-height:14.00px;color:#000;font-weight:normal;font-style:normal;letter-spacing:0.00px;white-space:pre;transform:translateX(-100%);">-0.8</div><div style="position:absolute;left:81.70px;top:337.16px;font-family:'Liberation Sans';font-size:14.00px;line-height:14.00px;color:#000;font-weight:normal;font-style:normal;letter-spacing:0.00px;white-space:pre;transform:translateX(-100%);">-0.8</div><div style="position:absolute;left:118.40px;top:342.79px;font-family:'Liberation Sans';font-size:14.00px;line-height:14.00px;color:#000;font-weight:normal;font-style:normal;letter-spacing:0.00px;white-space:pre;transform:translateX(-100%);">-0.6</div><div style="position:absolute;left:155.10px;top:348.41px;font-family:'Liberation Sans';font-size:14.00px;line-height:14.00px;color:#000;font-weight:normal;font-style:normal;letter-spacing:0.00px;white-space:pre;transform:translateX(-100%);">-0.4</div><div style="position:absolute;left:191.80px;top:354.04px;font-family:'Liberation Sans';font-size:14.00px;line-height:14.00px;color:#000;font-weight:normal;font-style:normal;letter-spacing:0.00px;white-space:pre;transform:translateX(-100%);">-0.2</div><div style="position:absolute;left:228.50px;top:359.66px;font-family:'Liberation Sans';font-size:14.00px;line-height:14.00px;color:#000;font-weight:normal;font-style:normal;letter-spacing:0.00px;white-space:pre;transform:translateX(-100%);">0</div><div style="position:absolute;left:265.20px;top:365.29px;font-family:'Liberation Sans';font-size:14.00px;line-height:14.00px;color:#000;font-weight:normal;font-style:normal;letter-spacing:0.00px;white-space:pre;transform:translateX(-100%);">0.2</div><div style="position:absolute;left:301.90px;top:370.91px;font-family:'Liberation Sans';font-size:14.00px;line-height:14.00px;color:#000;font-weight:normal;font-style:normal;letter-spacing:0.00px;white-space:pre;transform:translateX(-100%);">0.4</div><div style="position:absolute;left:338.60px;top:376.54px;font-family:'Liberation Sans';font-size:14.00px;line-height:14.00px;color:#000;font-weight:normal;font-style:normal;letter-spacing:0.00px;white-space:pre;transform:translateX(-100%);">0.6</div><div style="position:absolute;left:375.30px;top:382.16px;font-family:'Liberation Sans';font-size:14.00px;line-height:14.00px;color:#000;font-weight:normal;font-style:normal;letter-spacing:0.00px;white-space:pre;transform:translateX(-100%);">0.8</div><div style="position:absolute;left:390.80px;top:377.96px;font-family:'Liberation Sans';font-size:14.00px;line-height:14.00px;color:#000;font-weight:normal;font-style:normal;letter-spacing:0.00px;white-space:pre;transform:translateX(-50%);">-0.4</div><div style="position:absolute;left:412.22px;top:368.05px;font-family:'Liberation Sans';font-size:14.00px;line-height:14.00px;color:#000;font-weight:normal;font-style:normal;letter-spacing:0.00px;white-space:pre;transform:translateX(-50%);">-0.3</div><div style="position:absolute;left:433.65px;top:358.14px;font-family:'Liberation Sans';font-size:14.00px;line-height:14.00px;color:#000;font-weight:normal;font-style:normal;letter-spacing:0.00px;white-space:pre;transform:translateX(-50%);">-0.2</div><div style="position:absolute;left:455.08px;top:348.23px;font-family:'Liberation Sans';font-size:14.00px;line-height:14.00px;color:#000;font-weight:normal;font-style:normal;letter-spacing:0.00px;white-space:pre;transform:translateX(-50%);">-0.1</div><div style="position:absolute;left:476.50px;top:338.32px;font-family:'Liberation Sans';font-size:14.00px;line-height:14.00px;color:#000;font-weight:normal;font-style:normal;letter-spacing:0.00px;white-space:pre;transform:translateX(-50%);">0</div><div style="position:absolute;left:497.92px;top:328.41px;font-family:'Liberation Sans';font-size:14.00px;line-height:14.00px;color:#000;font-weight:normal;font-style:normal;letter-spacing:0.00px;white-space:pre;transform:translateX(-50%);">0.1</div><div style="position:absolute;left:519.35px;top:318.50px;font-family:'Liberation Sans';font-size:14.00px;line-height:14.00px;color:#000;font-weight:normal;font-style:normal;letter-spacing:0.00px;white-space:pre;transform:translateX(-50%);">0.2</div><div style="position:absolute;left:540.77px;top:308.59px;font-family:'Liberation Sans';font-size:14.00px;line-height:14.00px;color:#000;font-weight:normal;font-style:normal;letter-spacing:0.00px;white-space:pre;transform:translateX(-50%);">0.3</div><div style="position:absolute;left:562.20px;top:298.68px;font-family:'Liberation Sans';font-size:14.00px;line-height:14.00px;color:#000;font-weight:normal;font-style:normal;letter-spacing:0.00px;white-space:pre;transform:translateX(-50%);">0.4</div><div style="position:absolute;left:15.40px;top:240.39px;font-family:'Liberation Sans';font-size:14.00px;line-height:14.00px;color:#000;font-weight:normal;font-style:normal;letter-spacing:0.00px;white-space:pre;transform:translateX(-50%);">z</div><div style="position:absolute;left:194.00px;top:370.49px;font-family:'Liberation Sans';font-size:14.00px;line-height:14.00px;color:#000;font-weight:normal;font-style:normal;letter-spacing:0.00px;white-space:pre;transform:translateX(-50%);">x</div><div style="position:absolute;left:541.80px;top:344.85px;font-family:'Liberation Sans';font-size:14.00px;line-height:14.00px;color:#000;font-weight:normal;font-style:normal;letter-spacing:0.00px;white-space:pre;transform:translateX(-50%);">y</div><div style="position:absolute;left:362.40px;top:107.80px;font-family:'Liberation Sans';font-size:15.00px;line-height:15.00px;color:#000;font-weight:normal;font-style:normal;letter-spacing:0.00px;white-space:pre;">cos(phi)*sin(2*theta)</div><div class="abs" style="left:0;top:444px;width:642px;height:24px;background:#fff"></div><div class="abs" style="left:3px;top:444px;width:636px;height:21px;background:#f0efed;border-top:1px solid #8c8c8c;border-left:1px solid #8c8c8c;box-shadow:inset 0 1px 0 #c4c2be"></div><div style="position:absolute;left:6.40px;top:448.20px;font-family:'Liberation Sans';font-size:15.00px;line-height:15.00px;color:#222;font-weight:normal;font-style:normal;letter-spacing:0.00px;white-space:pre;">view: 60.0000, 30.0000  scale: 1.00000, 1.00000</div><svg class="abs" style="left:624px;top:452px" width="12" height="12"><g fill="#d2d0cc"><rect x="9" y="1" width="2" height="2"/><rect x="6" y="4" width="2" height="2"/><rect x="9" y="4" width="2" height="2"/><rect x="3" y="7" width="2" height="2"/><rect x="6" y="7" width="2" height="2"/><rect x="9" y="7" width="2" height="2"/><rect x="0" y="10" width="2" height="2"/><rect x="3" y="10" width="2" height="2"/><rect x="6" y="10" width="2" height="2"/><rect x="9" y="10" width="2" height="2"/></g></svg><div class="abs" style="left:0;top:28px;width:1px;height:440px;background:#a8a5a0"></div><div class="abs" style="left:0;top:467px;width:642px;height:1px;background:#bdbab4"></div></div></body></html>
